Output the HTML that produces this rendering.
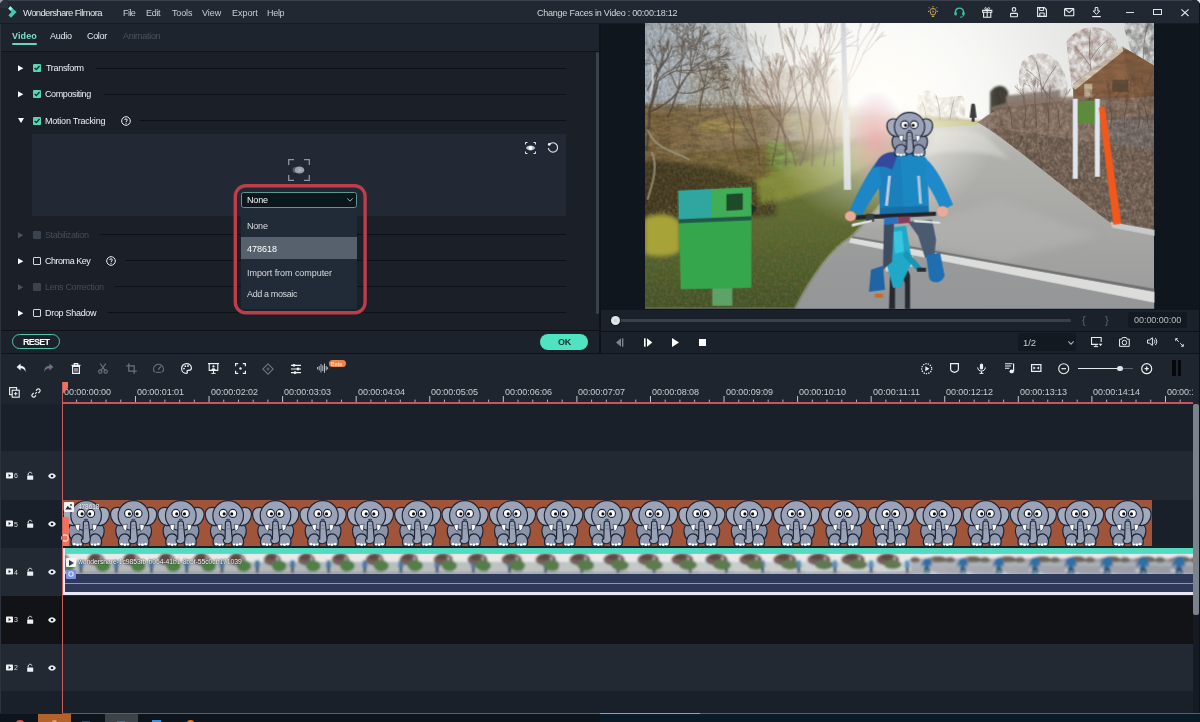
<!DOCTYPE html>
<html><head><meta charset="utf-8"><title>Wondershare Filmora</title>
<style>
html,body{margin:0;padding:0;background:#1b212a;}
body{width:1200px;height:722px;position:relative;overflow:hidden;font-family:"Liberation Sans",sans-serif;font-size:9px;color:#e6e9ee;}
.a{position:absolute;}
.t{position:absolute;white-space:pre;line-height:12px;will-change:transform;}
svg{position:absolute;overflow:visible;}
</style></head><body>
<svg width="0" height="0" style="left:0;top:0"><defs>
<symbol id="ele" viewBox="0 0 47 45" overflow="visible" preserveAspectRatio="none">
 <g stroke="#1e2537" stroke-width="1.15" stroke-linejoin="round">
  <path d="M8 24 C4.6 27 5.2 35 9.4 38.5 L37.6 38.5 C41.8 35 42.4 27 39 24 Z" fill="#8a93a8"/>
  <path d="M11 8 C6.4 5.4 0.8 7.8 0.6 13.4 C0.3 19 5.2 25.8 11.6 24.6 Z" fill="#a3abbd"/>
  <path d="M36 8 C40.6 5.4 46.2 7.8 46.4 13.4 C46.7 19 41.8 25.8 35.4 24.6 Z" fill="#a3abbd"/>
  <path d="M8.8 43.8 C7.2 38 10.2 32.8 14.8 32.8 C19 32.8 21 36.6 20.2 43.8 Z" fill="#929bb0"/>
  <path d="M38.2 43.8 C39.8 38 36.8 32.8 32.2 32.8 C28 32.8 26 36.6 26.8 43.8 Z" fill="#929bb0"/>
  <ellipse cx="23.3" cy="15" rx="15.2" ry="14.6" fill="#99a2b7"/>
  <path d="M12.6 24 L17.2 23.4 L16.2 30.4 C13.8 29.2 12.4 27 12.6 24Z" fill="#ffffff" stroke-width="0.6"/>
  <path d="M34 24 L29.4 23.4 L30.4 30.4 C32.8 29.2 34.2 27 34 24Z" fill="#ffffff" stroke-width="0.6"/>
  <path d="M20.6 22 C20.4 19.6 26 19.6 25.8 22 L27.4 37.8 C28 43.6 18 44 18.6 38.6 C19 37.2 20 37.4 20.2 38 Z" fill="#99a2b7"/>
  <circle cx="18.4" cy="12.9" r="3.9" fill="#ffffff" stroke-width="1.15"/>
  <circle cx="27.9" cy="12.9" r="3.9" fill="#ffffff" stroke-width="1.15"/>
 </g>
 <circle cx="19.3" cy="13.4" r="1.55" fill="#0c0f16"/>
 <circle cx="26.9" cy="13.4" r="1.55" fill="#0c0f16"/>
 <path d="M21.2 19.4 C22 18.2 24.4 18.2 25.2 19.4" fill="none" stroke="#1e2537" stroke-width="0.9"/>
 <path d="M21.8 24.6 H24.8 M21.8 27.8 H25" fill="none" stroke="#737c92" stroke-width="0.8"/>
 <g fill="#ffffff">
  <ellipse cx="11.6" cy="43" rx="1.5" ry="1.2"/><ellipse cx="14.8" cy="43.4" rx="1.5" ry="1.2"/><ellipse cx="17.8" cy="43.2" rx="1.3" ry="1.1"/>
  <ellipse cx="35.4" cy="43" rx="1.5" ry="1.2"/><ellipse cx="32.2" cy="43.4" rx="1.5" ry="1.2"/><ellipse cx="29.2" cy="43.2" rx="1.3" ry="1.1"/>
 </g>
</symbol>
</defs></svg>
<div class="a" style="left:0px;top:0px;width:1200px;height:24px;background:#212832;"></div><div class="a" style="left:0px;top:0px;width:1200px;height:1px;background:#39404b;"></div><div class="a" style="left:0px;top:23px;width:1200px;height:1px;background:#171c23;"></div><svg style="left:8px;top:6px" width="9" height="12" viewBox="0 0 9 12"><path d="M2.2 0.3 L8.6 5.9 L3 11.7 L0.4 9.2 L3.6 5.9 L0.4 2.6 Z" fill="#43c9b0"/><path d="M2.2 0.3 L4.6 2.4 L2.1 4.4 L0.4 2.6Z" fill="#a9f0e2"/></svg><div class="a" style="left:1197px;top:0px;width:3px;height:3px;background:#e8eaec;"></div><div class="a" style="left:1192px;top:0px;width:8px;height:8px;background:#212832;border-radius:0 5px 0 0"></div><div class="a" style="left:0px;top:0px;width:3px;height:3px;background:#9aa0a8;"></div><div class="a" style="left:0px;top:0px;width:8px;height:8px;background:#2a313c;border-radius:5px 0 0 0"></div><span class="t" style="left:23.10px;top:6.60px;font-size:9.5px;color:#e4e7ec;letter-spacing:-0.651px;">Wondershare Filmora</span><span class="t" style="left:123.10px;top:6.60px;font-size:9px;color:#c9cdd4;letter-spacing:-0.554px;">File</span><span class="t" style="left:146.10px;top:6.60px;font-size:9px;color:#c9cdd4;letter-spacing:-0.304px;">Edit</span><span class="t" style="left:172.10px;top:6.60px;font-size:9px;color:#c9cdd4;letter-spacing:-0.143px;">Tools</span><span class="t" style="left:202.10px;top:6.60px;font-size:9px;color:#c9cdd4;letter-spacing:-0.015px;">View</span><span class="t" style="left:231.60px;top:6.60px;font-size:9px;color:#c9cdd4;letter-spacing:-0.036px;">Export</span><span class="t" style="left:267.10px;top:6.60px;font-size:9px;color:#c9cdd4;letter-spacing:-0.304px;">Help</span><span class="t" style="left:536.80px;top:6.60px;font-size:9px;color:#d2d6dc;letter-spacing:-0.233px;">Change Faces in Video : 00:00:18:12</span><svg style="left:927.5px;top:6px" width="10" height="12" viewBox="0 0 10 12"><g stroke="#d8b259" fill="none" stroke-width="1"><path d="M5 2.6 C7.2 2.6 8 4.2 8 5.4 C8 6.8 6.8 7.4 6.6 8.8 H3.4 C3.2 7.4 2 6.8 2 5.4 C2 4.2 2.8 2.6 5 2.6Z"/><path d="M3.8 10.4 H6.2 M5 0 V1.4 M1 1.4 L2 2.4 M9 1.4 L8 2.4 M0 5.4 H1 M9 5.4 H10"/><path d="M5 4.6 V6.6" /></g></svg><svg style="left:954px;top:7px" width="11" height="11" viewBox="0 0 11 11"><path d="M1.4 6.4 V5.2 C1.4 -0.2 9.6 -0.2 9.6 5.2 V6.4" fill="none" stroke="#3fc2a8" stroke-width="1.4"/><rect x="0.4" y="5" width="2.4" height="3.6" rx="1" fill="#3fc2a8"/><rect x="8.2" y="5" width="2.4" height="3.6" rx="1" fill="#3fc2a8"/><path d="M9.4 8.4 C9.4 9.8 8 10.2 6 10.2" fill="none" stroke="#3fc2a8" stroke-width="1"/></svg><svg style="left:981.7px;top:6.6px" width="10.4" height="11" viewBox="0 0 10.4 11"><path d="M0.6 3.4 H9.8 V5.2 H0.6Z M1.6 5.4 V10.2 H8.8 V5.4 M5.2 3.4 V10.2" fill="none" stroke="#e9ecf0" stroke-width="1.1"/><path d="M5.2 3.2 C3 3.2 2 0.6 3.6 0.6 C4.6 0.6 5.2 2 5.2 3.2 C5.2 2 5.8 0.6 6.8 0.6 C8.4 0.6 7.4 3.2 5.2 3.2Z" fill="none" stroke="#e9ecf0" stroke-width="0.9"/></svg><svg style="left:1010.4px;top:6.8px" width="8" height="10.6" viewBox="0 0 8 10.6"><circle cx="4" cy="2.4" r="1.8" fill="none" stroke="#e9ecf0" stroke-width="1.1"/><rect x="0.6" y="6.4" width="6.8" height="3.4" rx="0.6" fill="none" stroke="#e9ecf0" stroke-width="1.1"/></svg><svg style="left:1037px;top:7.2px" width="10" height="10" viewBox="0 0 10 10"><path d="M0.6 0.6 H7.4 L9.4 2.6 V9.4 H0.6Z" fill="none" stroke="#e9ecf0" stroke-width="1.1"/><path d="M2.6 0.8 V3.4 H6.6 V0.8 M2.8 9.2 V6 H7.2 V9.2" fill="none" stroke="#e9ecf0" stroke-width="1"/></svg><svg style="left:1064px;top:8.3px" width="10.4" height="8.4" viewBox="0 0 10.4 8.4"><rect x="0.6" y="0.6" width="9.2" height="7.2" rx="0.6" fill="none" stroke="#e9ecf0" stroke-width="1.1"/><path d="M0.9 1 L5.2 4.6 L9.5 1" fill="none" stroke="#e9ecf0" stroke-width="1.1"/></svg><svg style="left:1092.4px;top:6.8px" width="9" height="10.6" viewBox="0 0 9 10.6"><path d="M3.2 0.5 H5.8 V4 H7.8 L4.5 7.4 L1.2 4 H3.2Z" fill="none" stroke="#e9ecf0" stroke-width="1"/><path d="M0.2 9.6 H8.8" stroke="#e9ecf0" stroke-width="1.2"/></svg><div class="a" style="left:1125.6px;top:12px;width:8.8px;height:1.2px;background:#dfe3e8;"></div><div class="a" style="left:1152.9px;top:8.6px;width:6.8px;height:4.8px;background:transparent;border:1.2px solid #dfe3e8"></div><svg style="left:1180.8px;top:8.8px" width="8" height="7.4" viewBox="0 0 8 7.4"><path d="M0.4 0.4 L7.6 7 M7.6 0.4 L0.4 7" stroke="#dfe3e8" stroke-width="1.1"/></svg>
<div class="a" style="left:0px;top:24px;width:599px;height:28px;background:#1e242e;"></div><div class="a" style="left:0px;top:51px;width:599px;height:1px;background:#12161c;"></div><div class="a" style="left:0px;top:52px;width:599px;height:279px;background:#1a1f28;"></div><div class="a" style="left:599px;top:24px;width:2px;height:329px;background:#0f1319;"></div><span class="t" style="left:12.10px;top:29.60px;font-size:9px;color:#7fdcc8;letter-spacing:0.131px;font-weight:700;">Video</span><div class="a" style="left:12px;top:43px;width:25px;height:2px;background:#6fd2bd;border-radius:1px"></div><span class="t" style="left:49.60px;top:29.60px;font-size:9px;color:#e4e7ec;letter-spacing:-0.246px;">Audio</span><span class="t" style="left:86.60px;top:29.60px;font-size:9px;color:#e4e7ec;letter-spacing:-0.343px;">Color</span><span class="t" style="left:122.60px;top:29.60px;font-size:9px;color:#4a525d;letter-spacing:-0.303px;">Animation</span><svg style="left:17.6px;top:65px" width="6" height="6.4" viewBox="0 0 6 6.4"><path d="M0 0.2 L5.3 3.2 L0 6.2Z" fill="#ffffff"/></svg><svg style="left:33px;top:64px" width="8" height="8" viewBox="0 0 8 8"><rect width="8" height="8" rx="1" fill="#58d5b9"/><path d="M1.6 3.9 L3.4 5.6 L6.5 2" fill="none" stroke="#14312c" stroke-width="1.4"/></svg><span class="t" style="left:45.60px;top:62.00px;font-size:9px;color:#eef0f3;letter-spacing:-0.319px;">Transform</span><div class="a" style="left:96px;top:68px;width:470px;height:1px;background:#0e1217;"></div><svg style="left:17.6px;top:91.4px" width="6" height="6.4" viewBox="0 0 6 6.4"><path d="M0 0.2 L5.3 3.2 L0 6.2Z" fill="#ffffff"/></svg><svg style="left:33px;top:90.4px" width="8" height="8" viewBox="0 0 8 8"><rect width="8" height="8" rx="1" fill="#58d5b9"/><path d="M1.6 3.9 L3.4 5.6 L6.5 2" fill="none" stroke="#14312c" stroke-width="1.4"/></svg><span class="t" style="left:45.20px;top:88.40px;font-size:9px;color:#eef0f3;letter-spacing:-0.385px;">Compositing</span><div class="a" style="left:104px;top:94px;width:462px;height:1px;background:#0e1217;"></div><svg style="left:17.5px;top:118.19999999999999px" width="6" height="5" viewBox="0 0 6 5"><path d="M0 0 L6 0 L3 5Z" fill="#ffffff"/></svg><svg style="left:33px;top:116.6px" width="8" height="8" viewBox="0 0 8 8"><rect width="8" height="8" rx="1" fill="#58d5b9"/><path d="M1.6 3.9 L3.4 5.6 L6.5 2" fill="none" stroke="#14312c" stroke-width="1.4"/></svg><span class="t" style="left:45.20px;top:114.60px;font-size:9px;color:#eef0f3;letter-spacing:-0.222px;">Motion Tracking</span><svg style="left:121px;top:115.5px" width="10" height="10" viewBox="0 0 10 10"><circle cx="5" cy="5" r="4.3" fill="none" stroke="#f0f2f5" stroke-width="1"/><path d="M3.7 4 C3.7 2.4 6.3 2.4 6.3 4 C6.3 5 5 5 5 6" fill="none" stroke="#f0f2f5" stroke-width="1"/><rect x="4.5" y="6.8" width="1" height="1" fill="#f0f2f5"/></svg><div class="a" style="left:140px;top:120px;width:426px;height:1px;background:#0e1217;"></div><div class="a" style="left:32px;top:134px;width:534px;height:82px;background:#222934;"></div><svg style="left:17.6px;top:231.5px" width="6" height="6.4" viewBox="0 0 6 6.4"><path d="M0 0.2 L5.3 3.2 L0 6.2Z" fill="#4a525d"/></svg><div class="a" style="left:33px;top:230.5px;width:8px;height:8px;background:#3b434e;border-radius:1px"></div><span class="t" style="left:45.10px;top:228.50px;font-size:9px;color:#454d58;letter-spacing:-0.387px;">Stabilization</span><div class="a" style="left:100px;top:234px;width:466px;height:1px;background:#0e1217;"></div><svg style="left:17.6px;top:257.7px" width="6" height="6.4" viewBox="0 0 6 6.4"><path d="M0 0.2 L5.3 3.2 L0 6.2Z" fill="#ffffff"/></svg><div class="a" style="left:33px;top:256.7px;width:6px;height:6px;background:transparent;border:1px solid #d3d7dc;border-radius:1px"></div><span class="t" style="left:45.10px;top:254.70px;font-size:9px;color:#eef0f3;letter-spacing:-0.473px;">Chroma Key</span><svg style="left:105.5px;top:255.7px" width="10" height="10" viewBox="0 0 10 10"><circle cx="5" cy="5" r="4.3" fill="none" stroke="#f0f2f5" stroke-width="1"/><path d="M3.7 4 C3.7 2.4 6.3 2.4 6.3 4 C6.3 5 5 5 5 6" fill="none" stroke="#f0f2f5" stroke-width="1"/><rect x="4.5" y="6.8" width="1" height="1" fill="#f0f2f5"/></svg><div class="a" style="left:125px;top:260px;width:441px;height:1px;background:#0e1217;"></div><svg style="left:17.6px;top:283.9px" width="6" height="6.4" viewBox="0 0 6 6.4"><path d="M0 0.2 L5.3 3.2 L0 6.2Z" fill="#4a525d"/></svg><div class="a" style="left:33px;top:282.9px;width:8px;height:8px;background:#3b434e;border-radius:1px"></div><span class="t" style="left:45.10px;top:280.90px;font-size:9px;color:#454d58;letter-spacing:-0.316px;">Lens Correction</span><div class="a" style="left:115px;top:286px;width:451px;height:1px;background:#0e1217;"></div><svg style="left:17.6px;top:310px" width="6" height="6.4" viewBox="0 0 6 6.4"><path d="M0 0.2 L5.3 3.2 L0 6.2Z" fill="#ffffff"/></svg><div class="a" style="left:33px;top:309px;width:6px;height:6px;background:transparent;border:1px solid #d3d7dc;border-radius:1px"></div><span class="t" style="left:45.10px;top:307.00px;font-size:9px;color:#eef0f3;letter-spacing:-0.295px;">Drop Shadow</span><div class="a" style="left:108px;top:312px;width:458px;height:1px;background:#0e1217;"></div><div class="a" style="left:596px;top:52px;width:3px;height:262px;background:#3a424d;border-radius:1.5px"></div><div class="a" style="left:0px;top:330px;width:599px;height:1px;background:#0f1319;"></div><div class="a" style="left:0px;top:331px;width:599px;height:22px;background:#1c222b;"></div><div class="a" style="left:12px;top:333.5px;width:46px;height:13px;background:transparent;border:1.8px solid #50c6ab;border-radius:9px"></div><span class="t" style="left:23.10px;top:335.60px;font-size:9px;color:#ffffff;letter-spacing:-0.743px;font-weight:700;">RESET</span><div class="a" style="left:540px;top:333.5px;width:48px;height:16px;background:#50e3c2;border-radius:8px"></div><span class="t" style="left:557.60px;top:335.60px;font-size:9px;color:#10302a;letter-spacing:-0.350px;font-weight:700;">OK</span><svg style="left:288px;top:159px" width="22" height="22" viewBox="0 0 22 22"><path d="M0.7 6 V0.7 H6 M16 0.7 H21.3 V6 M21.3 16 V21.3 H16 M6 21.3 H0.7 V16" fill="none" stroke="#8b949e" stroke-width="1.3"/><ellipse cx="9" cy="11" rx="4.5" ry="3.2" fill="#555d67"/><ellipse cx="11.5" cy="11" rx="4.8" ry="3.6" fill="#9aa1aa"/><circle cx="11.8" cy="11" r="1.6" fill="#aeb4bc"/></svg><svg style="left:525px;top:142px" width="11" height="12" viewBox="0 0 11 12"><path d="M0.5 2.5 V0.5 H2.5 M8.5 0.5 H10.5 V2.5 M10.5 9.5 V11.5 H8.5 M2.5 11.5 H0.5 V9.5" fill="none" stroke="#e8ebef" stroke-width="1"/><path d="M0.8 6 C3 2.8 8 2.8 10.2 6 C8 9.2 3 9.2 0.8 6Z" fill="#bcc1c9"/><circle cx="5.5" cy="6" r="1.9" fill="#ffffff"/></svg><svg style="left:547px;top:142px" width="12" height="12" viewBox="0 0 12 12"><path d="M2.2 2.6 A4.7 4.7 0 1 1 1.3 6.2" fill="none" stroke="#dfe3e8" stroke-width="1.2"/><circle cx="2.2" cy="2.4" r="1.3" fill="#f4f6f8"/></svg><div class="a" style="left:241.3px;top:191.5px;width:113.5px;height:14.5px;background:#0c161d;border:1px solid #5c9792;border-radius:2.5px"></div><span class="t" style="left:246.90px;top:194.20px;font-size:9px;color:#f2f4f6;letter-spacing:-0.179px;">None</span><svg style="left:347px;top:198px" width="6" height="4" viewBox="0 0 6 4"><path d="M0.3 0.4 L3 3.2 L5.7 0.4" fill="none" stroke="#bcc2ca" stroke-width="0.9"/></svg><div class="a" style="left:241.3px;top:208px;width:115.5px;height:100.5px;background:#212b37;"></div><div class="a" style="left:241.3px;top:237px;width:115.5px;height:21.5px;background:#56616d;"></div><span class="t" style="left:247.00px;top:220.20px;font-size:9px;color:#d5d9df;letter-spacing:-0.204px;">None</span><span class="t" style="left:247.00px;top:242.50px;font-size:9px;color:#ffffff;letter-spacing:-0.024px;">478618</span><span class="t" style="left:247.00px;top:266.60px;font-size:9px;color:#d5d9df;letter-spacing:-0.052px;">Import from computer</span><span class="t" style="left:247.00px;top:288.40px;font-size:9px;color:#d5d9df;letter-spacing:-0.369px;">Add a mosaic</span><svg style="left:0;top:0" width="600" height="330"><rect x="235.3" y="185.8" width="129.8" height="127" rx="10.5" fill="none" stroke="#bd3d4b" stroke-width="3.4"/></svg>
<div class="a" style="left:601px;top:24px;width:599px;height:286px;background:#10161e;"></div><div class="a" style="left:601px;top:309.5px;width:599px;height:43.5px;background:#1b212b;"></div><div class="a" style="left:601px;top:330.5px;width:599px;height:1px;background:#0f1319;"></div>
<svg style="left:645.4px;top:23.3px" width="509" height="285.4" viewBox="645.4 23.3 508.2 285.4" preserveAspectRatio="none">
<defs>
 <clipPath id="vclip"><rect x="645.4" y="23.3" width="508.2" height="285.4"/></clipPath>
 <radialGradient id="sun" cx="880" cy="112" r="260" gradientUnits="userSpaceOnUse">
  <stop offset="0" stop-color="#ffffff"/><stop offset="0.45" stop-color="#f6f6f3"/><stop offset="1" stop-color="#dcdedd"/>
 </radialGradient>
 <linearGradient id="skyL" x1="645" y1="0" x2="780" y2="0" gradientUnits="userSpaceOnUse">
  <stop offset="0" stop-color="#9db2cc" stop-opacity="0.85"/><stop offset="1" stop-color="#c5ced8" stop-opacity="0"/>
 </linearGradient>
 <linearGradient id="pathG" x1="0" y1="120" x2="0" y2="309" gradientUnits="userSpaceOnUse">
  <stop offset="0" stop-color="#c9c8c2"/><stop offset="0.2" stop-color="#b0b0ac"/><stop offset="0.6" stop-color="#a6a6a4"/><stop offset="1" stop-color="#9a9b9b"/>
 </linearGradient>
 <linearGradient id="grassG" x1="0" y1="150" x2="0" y2="309" gradientUnits="userSpaceOnUse">
  <stop offset="0" stop-color="#6e7c39"/><stop offset="0.5" stop-color="#586a31"/><stop offset="1" stop-color="#405228"/>
 </linearGradient>
 <radialGradient id="flare" cx="876" cy="140" r="50" gradientUnits="userSpaceOnUse" gradientTransform="translate(876 140) scale(0.6 1) translate(-876 -140)">
  <stop offset="0" stop-color="#f0a0a8" stop-opacity="0.7"/><stop offset="0.5" stop-color="#e0a0a0" stop-opacity="0.4"/><stop offset="1" stop-color="#d0a0c0" stop-opacity="0"/>
 </radialGradient>
 <radialGradient id="glow" cx="880" cy="112" r="120" gradientUnits="userSpaceOnUse">
  <stop offset="0" stop-color="#ffffff" stop-opacity="0.95"/><stop offset="0.35" stop-color="#fffdf4" stop-opacity="0.6"/><stop offset="1" stop-color="#ffffff" stop-opacity="0"/>
 </radialGradient>
 <filter id="b1" x="-10%" y="-10%" width="120%" height="120%"><feGaussianBlur stdDeviation="1"/></filter>
 <filter id="b2" x="-10%" y="-10%" width="120%" height="120%"><feGaussianBlur stdDeviation="2.2"/></filter>
 <filter id="b4" x="-20%" y="-20%" width="140%" height="140%"><feGaussianBlur stdDeviation="4.5"/></filter>
 <filter id="tex" x="0" y="0" width="100%" height="100%">
  <feTurbulence type="fractalNoise" baseFrequency="0.16 0.13" numOctaves="3" seed="7" result="n"/>
  <feColorMatrix in="n" type="matrix" values="0 0 0 0 0  0 0 0 0 0  0 0 0 0 0  1.5 0 0 0 -0.42" result="a"/>
  <feComposite in="SourceGraphic" in2="a" operator="in"/>
 </filter>
 <filter id="tex2" x="0" y="0" width="100%" height="100%">
  <feTurbulence type="fractalNoise" baseFrequency="0.35 0.3" numOctaves="2" seed="3" result="n"/>
  <feColorMatrix in="n" type="matrix" values="0 0 0 0 0  0 0 0 0 0  0 0 0 0 0  2.0 0 0 0 -0.7" result="a"/>
  <feComposite in="SourceGraphic" in2="a" operator="in"/>
 </filter>
 <filter id="tex3" x="0" y="0" width="100%" height="100%">
  <feTurbulence type="fractalNoise" baseFrequency="0.07 0.2" numOctaves="3" seed="11" result="n"/>
  <feColorMatrix in="n" type="matrix" values="0 0 0 0 0  0 0 0 0 0  0 0 0 0 0  1.7 0 0 0 -0.5" result="a"/>
  <feComposite in="SourceGraphic" in2="a" operator="in"/>
 </filter>
 <linearGradient id="fadeR" x1="645" y1="0" x2="880" y2="0" gradientUnits="userSpaceOnUse">
  <stop offset="0" stop-color="#fff" stop-opacity="1"/><stop offset="0.55" stop-color="#fff" stop-opacity="0.8"/><stop offset="1" stop-color="#fff" stop-opacity="0"/>
 </linearGradient>
 <mask id="mL" maskUnits="userSpaceOnUse" x="645" y="23" width="245" height="200"><rect x="645" y="23" width="245" height="200" fill="url(#fadeR)"/></mask>
</defs>
<g clip-path="url(#vclip)">
 <!-- sky -->
 <rect x="645" y="23" width="510" height="286" fill="url(#sun)"/>
 <rect x="645" y="23" width="140" height="100" fill="url(#skyL)"/>
 <!-- far hill / horizon -->
 <path d="M850 118 C890 112 940 116 990 122 L990 135 L850 135Z" fill="#b9b27a" filter="url(#b1)"/>
 <!-- right distant trees & buildings -->
 <g filter="url(#b1)">
  <path d="M990 92 C996 84 1004 84 1008 92 L1010 120 L990 122Z" fill="#3c3e34"/>
  <path d="M1006 96 L1040 92 L1060 90 L1060 122 L1006 122Z" fill="#8a8078"/>
 </g>
 <g filter="url(#tex)" opacity="0.8">
  <path d="M1022 62 C1034 48 1056 52 1062 70 C1070 80 1068 100 1062 108 L1026 108 C1018 90 1016 74 1022 62Z" fill="#9a8a84"/>
  <path d="M1066 42 C1080 22 1106 24 1116 40 L1122 72 L1072 92Z" fill="#7d5a52"/>
  <path d="M1122 23 L1154 23 L1154 74 L1134 62Z" fill="#3f3a3a"/>
  <path d="M918 96 C924 88 934 90 938 98 L962 96 C966 100 966 112 964 120 L916 120Z" fill="#a89880"/>
 </g>
 <g fill="none" stroke="#6a5850" stroke-width="0.8" opacity="0.7">
  <path d="M1042 106 C1042 90 1040 76 1036 62 M1042 90 C1046 80 1052 72 1056 66 M1040 82 C1034 76 1030 72 1026 70"/>
  <path d="M1092 84 C1090 64 1088 48 1090 30 M1090 60 C1096 50 1102 44 1108 40 M1090 66 C1082 56 1078 50 1074 46"/>
  <path d="M940 120 C940 110 938 102 936 96 M950 120 C951 112 952 106 954 100 M926 120 C926 112 924 106 922 102"/>
  <path d="M1144 70 C1142 50 1144 36 1148 24"/>
 </g>
 <!-- house -->
 <path d="M1073 84 L1122 47 L1154 66 L1154 130 L1073 130Z" fill="#8d6547"/>
 <path d="M1071 86 L1122 46 L1126 49 L1075 90Z" fill="#d9cdbf"/>
 <path d="M1122 47 L1154 66 L1154 100 L1128 80Z" fill="#7d5c42" opacity="0.8"/>
 <rect x="1084" y="84" width="8" height="14" fill="#d0c6a8" opacity="0.8"/>
 <rect x="1112" y="80" width="16" height="12" fill="#4e4434" opacity="0.7"/>
 <!-- right hedge & leaf ground -->
 <path d="M974 125 L996 110 L1154 96 L1154 240 L1100 232 C1070 200 1030 160 974 125Z" fill="#84705f"/>
 <path d="M990 108 C1030 94 1070 96 1154 100 L1154 150 L1020 140 Z" fill="#8a7468" opacity="0.85" filter="url(#b1)"/>
 <path d="M1110 118 L1154 115 L1154 150 L1110 150Z" fill="#6f6a68" opacity="0.9"/>
 <path d="M990 128 L1154 150 L1154 240 L1100 232 C1070 200 1030 160 990 128Z" fill="#6f5e52"/>
 <g filter="url(#tex2)" opacity="0.55"><path d="M974 125 L996 110 L1154 96 L1154 240 L1100 232 C1070 200 1030 160 974 125Z" fill="#b8a490"/></g>
 <g filter="url(#tex)" opacity="0.5"><path d="M974 125 L996 108 L1154 92 L1154 240 L1100 232 C1070 200 1030 160 974 125Z" fill="#43362e"/></g>
 <g filter="url(#tex3)" opacity="0.35"><path d="M1073 84 L1122 47 L1154 66 L1154 120 L1073 120Z" fill="#4a3420"/></g>
 <!-- path -->
 <path d="M930 124 L978 123 C1000 134 1060 186 1110 223 L1154 232 L1154 309 L795 309 C810 280 830 250 850 238 C880 210 925 150 930 124Z" fill="url(#pathG)"/>
 <!-- path light streaks -->
 <path d="M935 130 C960 128 975 130 985 136 L1010 160 C980 150 950 150 925 156Z" fill="#e4e3dc" opacity="0.45" filter="url(#b2)"/>
 <path d="M880 236 L1000 200 L1100 236 L1000 262Z" fill="#b4b4b2" opacity="0.6" filter="url(#b4)"/>
 <!-- grass -->
 <path d="M640 160 L860 134 L932 122 C925 150 880 210 850 238 C830 250 810 280 795 309 L640 309Z" fill="url(#grassG)" filter="url(#b1)"/><path d="M800 112 L900 112 L932 122 L860 140 L800 150Z" fill="#cdbb8e" opacity="0.8" filter="url(#b4)"/>
 <path d="M930 122 L975 121 L978 125 L932 128Z" fill="#c4c07a"/>
 <!-- tree mass left -->
 <g mask="url(#mL)">
  <g filter="url(#b2)">
   <path d="M640 104 C700 100 760 106 800 104 C830 102 860 106 900 112 L900 160 C860 176 800 194 770 204 L640 218Z" fill="#7b6540"/>
   <path d="M640 160 C700 162 744 172 776 190 L776 216 L640 222Z" fill="#3d3522"/>
   <path d="M768 142 C780 138 796 142 800 172 L770 174Z" fill="#7da046"/>
   <path d="M700 122 C720 114 740 118 746 130 C730 138 710 138 700 130Z" fill="#b09838" opacity="0.45"/>
   <path d="M780 118 C800 112 812 120 812 132 C800 138 786 134 780 126Z" fill="#a8903c" opacity="0.4"/>
  </g>
  <!-- crown haze -->
  <g filter="url(#b4)">
   <path d="M640 18 L735 18 C750 50 752 80 745 106 L640 108Z" fill="#8c8f90" opacity="0.5"/>
   <path d="M690 70 C720 56 750 66 760 106 L690 108Z" fill="#7d6d48" opacity="0.4"/><path d="M750 80 C770 64 820 66 845 80 L848 112 L750 112Z" fill="#9a7a5a" opacity="0.5"/>
   <path d="M740 18 L900 18 L900 106 L770 106 C775 80 765 50 740 18Z" fill="#d9d2c0" opacity="0.25"/>
  </g>
  <g filter="url(#tex)" opacity="0.32"><path d="M645 23 L745 23 C760 50 765 70 850 70 L850 108 L645 108Z" fill="#4d4226"/></g>
  <g filter="url(#tex2)" opacity="0.45"><path d="M645 23 L820 23 L820 108 L645 108Z" fill="#dfe6ee"/></g>
  <g filter="url(#tex3)" opacity="0.7"><path d="M645 104 L900 108 L900 160 C850 184 800 198 760 207 L645 218Z" fill="#453a20"/></g>
  <g filter="url(#tex2)" opacity="0.2"><path d="M645 104 L900 108 L900 160 C850 184 800 198 760 207 L645 218Z" fill="#c4a060"/></g>
 </g>
 <g filter="url(#tex2)" opacity="0.55"><path d="M645 216 L850 140 L930 124 C925 150 880 210 850 238 C830 250 810 280 795 309 L645 309Z" fill="#7c6a3c"/></g>
 <g filter="url(#b2)">
  <path d="M645 218 C660 212 676 214 680 224 L680 252 C668 258 654 258 645 254Z" fill="#a7a338"/>
  <path d="M756 180 C790 166 830 154 862 144 L880 154 C850 184 800 200 760 204Z" fill="#8c9a3e" opacity="0.75"/>
 </g>
 <!-- branch strokes -->
 <g fill="none" stroke="#4b3e34" stroke-linecap="round" opacity="0.78"><path stroke-width="0.45" d="M682.4 59.5Q685.4 55.1 685.7 51.7M685.7 51.7Q688.4 50.0 689.7 47.3M689.7 47.3Q690.2 45.4 689.7 43.1M689.7 47.3Q690.5 45.4 692.1 44.2M685.7 51.7Q686.1 47.7 687.8 45.8M687.8 45.8Q689.9 43.4 690.7 41.8M687.8 45.8Q689.4 43.6 691.4 42.5M682.4 59.5Q684.9 52.2 684.5 48.8M684.5 48.8Q684.2 44.4 683.2 42.0M683.2 42.0Q681.8 39.5 681.3 37.0M683.2 42.0Q682.2 38.7 681.1 37.3M684.5 48.8Q684.2 44.6 683.9 42.3M683.9 42.3Q682.9 40.0 681.8 38.5M683.9 42.3Q683.5 40.4 683.5 38.3M683.9 42.3Q684.7 39.7 686.4 38.4M682.4 59.5Q683.9 54.6 688.6 50.5M688.6 50.5Q688.6 46.9 688.9 43.7M688.9 43.7Q689.8 41.6 689.6 39.2M688.9 43.7Q688.4 41.3 689.4 39.3M688.6 50.5Q692.2 49.6 695.6 47.2M695.6 47.2Q697.2 46.4 700.1 43.6M695.6 47.2Q698.2 47.6 701.1 47.6M686.6 64.8Q688.1 62.3 691.1 56.9M691.1 56.9Q691.5 54.6 690.6 51.4M690.6 51.4Q689.7 50.3 688.0 49.6M690.6 51.4Q690.6 49.4 690.4 48.0M691.1 56.9Q692.5 54.3 692.9 51.5M692.9 51.5Q695.3 50.3 696.5 49.0M692.9 51.5Q694.8 49.6 695.5 48.1M691.1 56.9Q694.9 57.0 696.9 55.8M696.9 55.8Q698.0 55.0 700.3 53.0M696.9 55.8Q698.8 54.8 700.3 54.1M696.9 55.8Q698.8 54.7 700.7 54.0M686.6 64.8Q689.3 63.1 695.0 60.2M695.0 60.2Q697.6 58.2 701.2 57.1M701.2 57.1Q703.1 56.9 705.1 55.5M701.2 57.1Q703.6 56.5 706.2 56.0M695.0 60.2Q698.6 58.6 700.9 56.1M700.9 56.1Q703.1 56.2 705.3 55.2M700.9 56.1Q703.2 53.4 704.5 52.2M686.6 64.8Q693.7 64.8 697.1 64.0M697.1 64.0Q699.9 62.3 702.6 58.7M702.6 58.7Q702.3 55.6 702.9 53.4M702.6 58.7Q704.4 57.2 707.6 56.7M697.1 64.0Q701.2 66.0 704.2 66.0M704.2 66.0Q706.9 67.6 708.6 68.0M704.2 66.0Q706.4 65.6 708.7 66.5M704.2 66.0Q706.0 66.5 708.8 67.6M697.1 64.0Q701.5 64.9 704.6 63.4M704.6 63.4Q706.8 64.7 708.5 65.7M704.6 63.4Q706.0 62.4 708.9 62.1M683.9 58.3Q684.7 54.4 682.5 49.6M682.5 49.6Q681.9 46.3 679.1 44.1M679.1 44.1Q678.1 42.1 676.3 40.9M679.1 44.1Q678.7 42.4 678.9 39.3M679.1 44.1Q677.6 42.9 676.0 40.7M682.5 49.6Q683.3 46.3 683.3 44.0M683.3 44.0Q684.4 42.9 685.3 41.2M683.3 44.0Q684.1 42.0 685.7 41.4M682.5 49.6Q682.7 46.4 683.0 43.5M683.0 43.5Q684.4 41.5 684.9 39.8M683.0 43.5Q685.0 41.5 686.1 40.5M683.9 58.3Q685.8 52.3 690.1 48.7M690.1 48.7Q691.7 46.7 695.8 45.1M695.8 45.1Q698.5 44.2 700.5 43.5M695.8 45.1Q698.8 43.1 700.5 42.7M690.1 48.7Q692.0 44.1 694.0 41.9M694.0 41.9Q694.6 40.6 696.6 37.7M694.0 41.9Q694.3 39.1 694.0 36.4M692.8 70.6Q698.3 72.5 703.8 70.5M703.8 70.5Q706.7 70.6 710.4 69.4M710.4 69.4Q713.1 68.0 714.3 66.8M710.4 69.4Q713.8 68.7 715.6 68.2M703.8 70.5Q706.5 69.5 709.9 66.1M709.9 66.1Q710.9 63.6 710.9 61.4M709.9 66.1Q712.4 65.1 715.0 64.7M692.8 70.6Q698.9 71.3 703.6 69.6M703.6 69.6Q707.6 70.2 711.1 68.8M711.1 68.8Q713.9 68.3 716.0 68.1M711.1 68.8Q713.4 67.4 716.3 66.7M711.1 68.8Q712.4 67.6 715.1 65.9M703.6 69.6Q706.0 70.5 710.3 69.6M710.3 69.6Q712.3 69.5 714.3 70.2M710.3 69.6Q712.4 70.0 714.7 71.3M703.6 69.6Q707.8 69.3 711.0 67.7M711.0 67.7Q713.1 66.8 716.1 64.7M711.0 67.7Q713.8 65.7 715.9 64.5M693.5 72.6Q700.5 75.0 704.9 75.4M704.9 75.4Q709.1 78.1 711.0 79.0M711.0 79.0Q713.2 78.6 716.0 77.0M711.0 79.0Q712.5 79.5 715.4 78.8M704.9 75.4Q708.4 77.1 713.3 78.9M713.3 78.9Q716.7 78.9 719.4 77.9M713.3 78.9Q717.0 80.2 718.8 83.5M693.5 72.6Q700.1 71.4 705.4 69.3M705.4 69.3Q708.4 65.6 711.0 64.3M711.0 64.3Q713.3 62.5 716.3 62.2M711.0 64.3Q711.6 61.4 713.3 60.0M711.0 64.3Q713.4 63.8 714.8 62.2M705.4 69.3Q708.0 69.5 712.8 69.1M712.8 69.1Q715.0 70.3 717.8 69.7M712.8 69.1Q714.9 68.1 717.2 68.1M693.5 72.6Q698.2 74.9 700.4 80.1M700.4 80.1Q704.1 81.2 707.2 82.1M707.2 82.1Q709.6 84.4 711.1 85.4M707.2 82.1Q709.0 84.3 711.4 85.5M700.4 80.1Q699.2 83.0 699.3 87.7M699.3 87.7Q699.2 89.9 697.9 91.9M699.3 87.7Q698.6 90.3 696.8 92.7M662.7 58.0Q663.4 53.9 666.1 50.6M666.1 50.6Q665.8 48.4 667.4 44.6M667.4 44.6Q669.0 42.9 670.3 40.9M667.4 44.6Q667.9 42.4 667.4 40.9M666.1 50.6Q668.1 47.7 668.5 45.5M668.5 45.5Q667.7 43.4 667.8 42.0M668.5 45.5Q669.0 43.6 669.3 41.2M662.7 58.0Q664.0 54.6 666.4 51.4M666.4 51.4Q667.3 48.7 666.7 45.6M666.7 45.6Q667.2 43.4 666.5 41.3M666.7 45.6Q666.7 43.7 667.0 42.0M666.4 51.4Q666.4 49.5 667.7 47.1M667.7 47.1Q667.8 45.2 667.0 43.7M667.7 47.1Q667.6 46.0 666.9 44.2M666.7 60.2Q670.1 57.5 671.9 56.6M671.9 56.6Q672.2 55.2 672.9 53.1M672.9 53.1Q673.7 52.1 674.0 50.5M672.9 53.1Q672.8 52.1 673.0 50.5M671.9 56.6Q674.8 56.4 676.6 55.1M676.6 55.1Q678.5 54.4 680.4 54.7M676.6 55.1Q677.6 54.9 679.4 54.7M671.9 56.6Q673.5 55.2 674.1 53.3M674.1 53.3Q674.0 51.9 674.6 51.0M674.1 53.3Q675.2 51.5 676.1 50.9M666.7 60.2Q667.1 56.4 670.0 52.5M670.0 52.5Q668.9 50.3 667.8 47.5M667.8 47.5Q667.4 45.7 667.5 43.3M667.8 47.5Q668.5 45.8 668.7 43.8M667.8 47.5Q666.7 46.1 664.9 45.5M670.0 52.5Q671.8 49.9 671.6 47.2M671.6 47.2Q671.1 44.7 669.9 43.5M671.6 47.2Q671.9 44.6 672.6 43.4M663.4 61.7Q664.4 58.6 664.1 55.1M664.1 55.1Q663.8 53.4 664.5 51.0M664.5 51.0Q664.4 49.6 664.8 48.3M664.5 51.0Q664.4 49.2 664.7 48.3M664.1 55.1Q663.9 53.5 664.7 51.1M664.7 51.1Q664.7 49.6 664.5 48.0M664.7 51.1Q665.8 50.4 667.1 49.4M663.4 61.7Q662.8 57.9 663.6 55.6M663.6 55.6Q663.5 54.0 662.0 51.2M662.0 51.2Q661.0 50.1 660.3 48.9M662.0 51.2Q660.3 49.2 659.8 48.4M663.6 55.6Q663.4 53.8 663.3 50.9M663.3 50.9Q663.5 49.5 663.9 48.1M663.3 50.9Q664.0 49.4 665.0 48.0M654.9 60.5Q653.1 56.2 652.2 54.2M652.2 54.2Q650.7 51.9 649.6 50.9M649.6 50.9Q648.2 50.9 646.8 50.3M649.6 50.9Q649.5 49.9 649.4 48.4M652.2 54.2Q651.8 51.7 652.5 49.2M652.5 49.2Q653.4 47.9 654.4 46.6M652.5 49.2Q653.3 47.8 654.0 45.7M652.2 54.2Q651.1 53.2 650.1 50.9M650.1 50.9Q648.9 49.8 647.6 49.5M650.1 50.9Q649.8 49.8 650.1 48.3M650.1 50.9Q650.1 49.3 649.9 48.0M654.9 60.5Q653.2 57.8 652.5 54.8M652.5 54.8Q650.3 54.3 648.9 53.2M648.9 53.2Q647.4 52.2 646.3 52.0M648.9 53.2Q648.1 51.9 647.4 51.2M652.5 54.8Q651.6 53.1 650.5 50.9M650.5 50.9Q650.1 49.2 649.2 48.6M650.5 50.9Q649.6 49.6 647.8 49.2M654.9 60.5Q656.2 56.8 658.0 53.2M658.0 53.2Q655.5 50.7 655.2 47.9M655.2 47.9Q653.0 47.1 650.7 46.3M655.2 47.9Q653.2 46.8 652.2 44.6M658.0 53.2Q660.1 51.9 663.0 49.7M663.0 49.7Q663.5 47.9 665.0 46.6M663.0 49.7Q664.4 48.9 666.8 49.0M658.0 53.2Q661.0 50.4 662.4 49.4M662.4 49.4Q662.8 47.7 664.5 45.9M662.4 49.4Q664.2 47.9 665.2 46.5M708.3 83.0Q710.7 80.0 714.1 74.2M714.1 74.2Q716.3 71.5 718.3 67.9M718.3 67.9Q720.8 65.8 722.4 64.7M722.4 64.7Q724.3 64.6 726.2 64.4M722.4 64.7Q722.5 62.6 723.6 61.6M718.3 67.9Q718.1 65.9 718.8 62.7M718.8 62.7Q718.9 60.6 719.5 59.1M718.8 62.7Q718.2 61.7 717.7 59.4M714.1 74.2Q718.7 72.4 720.9 70.2M720.9 70.2Q722.4 69.0 724.9 67.2M724.9 67.2Q725.2 65.3 726.4 63.9M724.9 67.2Q726.9 66.0 727.8 66.0M724.9 67.2Q725.7 65.5 726.9 64.5M720.9 70.2Q723.0 68.8 726.2 68.9M726.2 68.9Q726.8 67.1 728.2 65.8M726.2 68.9Q727.2 68.0 729.0 66.3M720.9 70.2Q724.2 71.8 726.7 72.2M726.7 72.2Q728.1 71.8 731.1 71.3M726.7 72.2Q728.4 73.5 730.8 73.3M714.1 74.2Q718.2 72.0 720.6 71.1M720.6 71.1Q723.9 69.6 725.4 69.2M725.4 69.2Q726.7 67.0 727.4 65.9M725.4 69.2Q726.4 68.1 728.5 67.0M720.6 71.1Q721.5 70.0 724.1 67.4M724.1 67.4Q724.3 65.4 724.0 63.6M724.1 67.4Q725.3 65.5 725.8 63.7M708.3 83.0Q712.3 83.9 717.3 82.0M717.3 82.0Q719.9 81.2 722.0 79.2M722.0 79.2Q724.1 79.6 725.9 79.3M725.9 79.3Q726.8 79.8 728.0 80.7M725.9 79.3Q726.7 80.0 727.8 81.0M722.0 79.2Q723.6 78.1 725.2 78.1M725.2 78.1Q726.0 77.6 727.2 77.5M725.2 78.1Q726.2 78.1 727.4 77.5M717.3 82.0Q719.8 80.9 723.4 80.3M723.4 80.3Q725.8 80.1 727.8 79.7M727.8 79.7Q729.4 79.0 730.5 78.4M727.8 79.7Q729.7 79.8 730.8 80.9M723.4 80.3Q725.7 80.2 727.2 79.7M727.2 79.7Q728.8 79.1 730.0 78.7M727.2 79.7Q728.5 79.9 729.8 80.3M723.4 80.3Q725.4 80.5 727.4 80.8M727.4 80.8Q728.9 80.1 729.8 80.2M727.4 80.8Q728.5 81.4 729.4 82.1M708.3 83.0Q709.8 81.1 713.6 77.2M713.6 77.2Q716.1 75.6 717.4 74.0M717.4 74.0Q718.2 73.0 719.3 71.1M719.3 71.1Q719.4 69.6 719.2 68.8M719.3 71.1Q720.4 70.8 721.3 70.3M717.4 74.0Q718.4 74.3 720.3 74.0M720.3 74.0Q721.2 74.2 722.3 73.8M720.3 74.0Q721.3 74.7 722.0 75.2M720.3 74.0Q721.1 74.1 722.5 73.7M713.6 77.2Q715.1 75.1 715.8 72.6M715.8 72.6Q716.6 71.4 718.3 70.6M718.3 70.6Q719.0 69.6 720.0 69.0M718.3 70.6Q719.1 69.8 719.4 68.6M715.8 72.6Q715.5 71.4 715.6 69.1M715.6 69.1Q715.1 68.5 714.2 67.6M715.6 69.1Q716.0 67.8 715.9 66.9M709.3 87.2Q710.3 83.9 713.7 79.7M713.7 79.7Q712.7 76.3 712.9 73.5M712.9 73.5Q713.6 71.1 713.8 69.5M713.8 69.5Q713.3 67.9 713.6 66.8M713.8 69.5Q714.5 68.5 716.2 67.8M712.9 73.5Q712.6 71.1 713.4 69.0M713.4 69.0Q713.1 67.9 712.4 66.6M713.4 69.0Q713.9 67.8 713.9 65.7M712.9 73.5Q711.3 71.5 711.0 69.6M711.0 69.6Q710.4 67.9 708.7 67.1M711.0 69.6Q711.3 68.2 711.6 66.5M713.7 79.7Q716.5 78.1 718.1 76.4M718.1 76.4Q718.5 75.0 720.1 73.1M720.1 73.1Q720.1 71.9 720.2 70.7M720.1 73.1Q721.6 72.8 722.6 72.2M718.1 76.4Q719.2 75.2 719.8 73.7M719.8 73.7Q720.4 72.7 720.9 71.9M719.8 73.7Q719.8 72.4 720.1 71.6M709.3 87.2Q714.3 87.7 717.0 90.0M717.0 90.0Q719.0 88.3 721.2 87.3M721.2 87.3Q722.1 86.8 723.7 86.1M721.2 87.3Q721.5 86.0 723.0 84.9M723.0 84.9Q724.0 83.5 724.4 83.0M723.0 84.9Q723.8 85.1 725.2 84.7M721.2 87.3Q722.4 86.0 724.4 85.3M724.4 85.3Q724.8 83.8 725.6 82.7M724.4 85.3Q725.5 84.7 727.3 84.5M717.0 90.0Q719.1 89.6 722.0 89.8M722.0 89.8Q723.1 88.9 725.6 88.4M725.6 88.4Q726.8 87.1 727.5 86.6M725.6 88.4Q727.0 87.5 727.9 87.4M722.0 89.8Q723.2 91.1 724.3 91.7M717.0 90.0Q719.4 89.0 722.8 88.9M722.8 88.9Q724.1 88.0 726.4 87.9M726.4 87.9Q728.0 87.8 728.9 86.6M726.4 87.9Q727.7 87.3 728.2 86.6M726.4 87.9Q727.6 88.7 729.1 88.8M722.8 88.9Q725.7 88.4 727.3 87.9M727.3 87.9Q728.4 87.5 730.2 87.2M727.3 87.9Q729.5 88.2 730.6 87.9M691.8 49.6Q693.6 45.6 693.3 37.7M693.3 37.7Q691.9 33.4 693.6 28.3M693.6 28.3Q692.6 24.9 689.5 23.2M689.5 23.2Q688.9 20.9 687.3 19.8M689.5 23.2Q688.7 21.8 688.3 19.6M693.6 28.3Q694.8 24.8 697.1 22.1M697.1 22.1Q699.6 21.1 701.3 19.9M697.1 22.1Q699.4 21.6 701.1 20.3M697.1 22.1Q698.9 21.3 701.4 20.0M693.6 28.3Q695.2 24.4 696.1 22.4M696.1 22.4Q697.2 20.3 698.5 19.0M696.1 22.4Q697.9 20.7 699.5 18.7M693.3 37.7Q694.1 33.7 692.9 28.5M692.9 28.5Q694.7 26.8 694.5 23.1M694.5 23.1Q695.9 22.2 697.4 19.7M694.5 23.1Q695.3 22.0 696.3 20.0M694.5 23.1Q695.0 21.1 695.3 19.6M692.9 28.5Q693.6 25.5 692.7 23.1M692.7 23.1Q690.8 21.9 690.4 19.7M692.7 23.1Q691.3 21.3 690.5 19.7M693.3 37.7Q692.1 34.2 691.9 30.6M691.9 30.6Q689.8 29.8 688.6 27.9M688.6 27.9Q687.8 26.4 686.5 25.4M688.6 27.9Q687.8 26.9 686.6 25.3M688.6 27.9Q686.8 27.6 686.0 26.6M691.9 30.6Q691.0 27.8 690.5 26.0M690.5 26.0Q689.0 24.8 688.4 23.6M690.5 26.0Q691.9 24.2 692.4 23.1M691.8 49.6Q691.0 43.9 688.4 35.8M688.4 35.8Q683.9 31.7 680.3 30.7M680.3 30.7Q676.4 29.4 673.9 27.9M673.9 27.9Q672.2 29.3 669.4 29.4M673.9 27.9Q672.3 26.2 671.5 23.4M673.9 27.9Q671.3 29.1 668.7 28.9M680.3 30.7Q677.4 29.2 675.4 26.6M675.4 26.6Q673.9 24.9 672.0 24.6M675.4 26.6Q674.4 25.1 672.1 23.9M675.4 26.6Q674.0 25.2 672.0 24.3M688.4 35.8Q687.8 33.2 684.6 27.3M684.6 27.3Q683.0 26.8 679.6 24.6M679.6 24.6Q678.6 23.6 676.9 22.3M679.6 24.6Q679.4 21.8 678.8 20.5M684.6 27.3Q683.3 23.9 681.3 21.5M681.3 21.5Q681.1 19.1 680.4 17.7M681.3 21.5Q680.0 19.7 678.7 18.7M695.3 53.2Q695.0 47.4 698.1 43.2M698.1 43.2Q699.7 39.3 700.1 37.4M700.1 37.4Q700.2 35.6 700.4 33.4M700.4 33.4Q700.9 32.7 701.5 31.2M700.4 33.4Q699.8 31.8 699.9 30.3M700.4 33.4Q700.1 32.3 700.5 30.3M700.1 37.4Q701.1 35.6 700.6 33.2M700.6 33.2Q700.7 31.7 700.4 30.6M700.6 33.2Q701.0 32.0 700.5 29.9M700.1 37.4Q701.7 35.6 702.3 33.9M702.3 33.9Q703.2 32.3 703.8 31.5M702.3 33.9Q703.6 32.5 703.9 31.4M702.3 33.9Q702.4 32.2 703.1 30.9M698.1 43.2Q701.7 41.2 703.3 39.6M703.3 39.6Q703.9 38.5 704.8 36.1M704.8 36.1Q705.0 35.3 705.0 33.6M704.8 36.1Q705.5 35.4 706.1 34.2M704.8 36.1Q705.2 35.3 704.8 33.7M703.3 39.6Q705.0 37.1 706.3 35.7M706.3 35.7Q708.2 34.7 709.0 33.3M706.3 35.7Q707.4 34.6 707.8 32.9M698.1 43.2Q700.9 39.5 702.7 36.9M702.7 36.9Q705.3 36.2 706.8 34.7M706.8 34.7Q707.9 33.8 708.4 32.3M706.8 34.7Q708.2 34.2 709.3 33.1M706.8 34.7Q708.1 34.0 710.1 34.2M702.7 36.9Q704.1 35.4 706.8 34.5M706.8 34.5Q707.2 33.0 707.7 31.2M706.8 34.5Q707.9 33.8 709.5 33.7M702.7 36.9Q702.4 34.9 702.4 31.3M702.4 31.3Q701.3 30.1 700.6 27.6M702.4 31.3Q702.0 29.2 700.4 28.0M695.3 53.2Q697.3 49.0 697.9 40.9M697.9 40.9Q698.8 36.2 702.2 34.1M702.2 34.1Q702.7 31.5 704.0 29.4M704.0 29.4Q704.8 27.9 705.5 26.1M704.0 29.4Q704.3 27.8 704.0 26.4M702.2 34.1Q704.2 33.1 705.6 30.5M705.6 30.5Q706.3 28.8 706.8 26.9M705.6 30.5Q706.2 29.0 706.5 27.4M705.6 30.5Q706.4 28.9 707.4 27.1M702.2 34.1Q704.1 31.1 704.4 28.8M704.4 28.8Q704.7 26.6 704.9 24.8M704.4 28.8Q704.8 26.6 704.1 24.6M697.9 40.9Q701.9 37.1 703.8 35.7M703.8 35.7Q706.2 35.1 708.3 34.8M708.3 34.8Q709.9 33.5 710.3 32.3M708.3 34.8Q710.1 34.1 711.7 34.1M703.8 35.7Q705.7 33.5 707.8 32.8M707.8 32.8Q709.5 32.7 711.6 32.7M707.8 32.8Q708.3 31.5 709.6 29.9M706.1 59.0Q712.0 57.1 716.7 57.3M716.7 57.3Q719.3 57.6 723.1 56.4M723.1 56.4Q724.6 56.5 727.0 55.5M727.0 55.5Q728.3 55.4 729.4 56.1M727.0 55.5Q728.0 55.9 729.4 57.2M723.1 56.4Q724.7 55.6 727.1 54.0M727.1 54.0Q728.2 52.8 729.5 52.3M727.1 54.0Q728.4 52.4 729.8 51.8M716.7 57.3Q719.9 56.4 723.0 56.8M723.0 56.8Q725.2 55.9 726.7 54.3M726.7 54.3Q727.9 54.6 729.7 54.1M726.7 54.3Q728.5 54.0 729.8 54.1M723.0 56.8Q725.0 58.1 727.3 58.5M727.3 58.5Q728.4 59.0 730.0 59.8M727.3 58.5Q728.0 59.8 729.2 61.0M723.0 56.8Q724.2 55.2 726.1 54.7M726.1 54.7Q727.2 54.1 728.2 53.1M726.1 54.7Q726.8 53.9 727.4 53.0M706.1 59.0Q710.1 54.3 713.4 49.4M713.4 49.4Q717.9 49.3 720.6 46.9M720.6 46.9Q721.3 45.4 723.2 42.2M723.2 42.2Q723.8 40.7 725.4 39.8M723.2 42.2Q723.9 40.6 724.6 38.8M720.6 46.9Q722.2 47.9 725.8 47.7M725.8 47.7Q726.8 49.4 729.1 49.8M725.8 47.7Q728.2 47.7 729.5 48.5M713.4 49.4Q715.9 44.2 718.2 42.0M718.2 42.0Q720.2 39.5 720.1 35.2M720.1 35.2Q718.4 33.5 717.5 31.6M720.1 35.2Q722.2 34.2 724.4 32.4M718.2 42.0Q720.6 40.4 723.7 38.9M723.7 38.9Q724.8 36.5 726.7 35.2M723.7 38.9Q725.4 38.7 728.4 37.4M677.0 38.4Q682.6 35.8 685.2 35.1M685.2 35.1Q687.4 33.5 690.4 31.1M690.4 31.1Q690.8 29.2 691.8 27.0M690.4 31.1Q692.2 30.8 694.5 31.2M685.2 35.1Q685.8 33.2 688.2 30.5M688.2 30.5Q687.4 28.5 687.4 27.4M688.2 30.5Q690.4 29.2 691.5 28.4M677.0 38.4Q678.5 34.6 677.3 30.5M677.3 30.5Q676.3 27.9 676.6 24.9M676.6 24.9Q675.9 22.9 674.8 21.4M676.6 24.9Q677.9 23.4 679.8 22.0M677.3 30.5Q678.2 28.3 679.5 25.9M679.5 25.9Q680.5 24.4 681.8 23.4M679.5 25.9Q680.4 23.8 680.4 22.6M682.0 45.8Q684.7 43.4 687.3 41.7M687.3 41.7Q688.2 39.3 688.3 37.3M688.3 37.3Q687.0 35.8 686.7 34.4M688.3 37.3Q687.6 35.7 688.0 34.1M688.3 37.3Q688.3 36.2 689.0 34.2M687.3 41.7Q689.6 42.0 691.7 42.7M691.7 42.7Q693.4 44.3 694.1 44.8M691.7 42.7Q693.6 42.2 694.9 41.7M682.0 45.8Q684.6 46.1 688.6 47.3M688.6 47.3Q691.1 47.3 693.5 49.1M693.5 49.1Q694.3 50.2 696.3 51.0M693.5 49.1Q695.2 49.5 696.8 49.9M688.6 47.3Q690.5 46.6 693.6 46.0M693.6 46.0Q695.2 45.3 696.7 44.0M693.6 46.0Q694.3 44.7 696.2 43.2M660.9 28.8Q660.5 25.6 658.9 19.9M658.9 19.9Q658.7 18.0 659.9 14.1M659.9 14.1Q660.3 11.6 661.3 9.6M659.9 14.1Q661.3 12.2 661.3 10.0M658.9 19.9Q657.6 17.5 656.0 14.9M656.0 14.9Q655.5 12.8 655.9 11.1M656.0 14.9Q655.3 13.7 653.8 12.1M656.0 14.9Q657.0 13.0 657.2 11.3M660.9 28.8Q660.2 22.7 661.4 19.6M661.4 19.6Q661.8 15.7 662.1 13.1M662.1 13.1Q662.6 10.6 663.0 9.3M662.1 13.1Q662.8 11.5 663.2 9.2M661.4 19.6Q662.4 15.7 662.9 13.8M662.9 13.8Q661.5 11.3 660.2 10.0M662.9 13.8Q665.7 13.4 667.2 12.0M665.7 29.7Q666.9 23.2 666.9 20.0M666.9 20.0Q666.7 17.0 668.7 13.3M668.7 13.3Q669.9 11.5 670.5 8.4M668.7 13.3Q669.8 11.5 671.9 9.8M666.9 20.0Q669.3 17.0 671.2 15.3M671.2 15.3Q672.9 13.9 673.5 11.3M671.2 15.3Q672.1 13.3 673.8 12.3M671.2 15.3Q672.9 14.3 673.2 12.0M665.7 29.7Q670.7 28.0 673.8 23.5M673.8 23.5Q678.2 22.5 680.2 18.9M680.2 18.9Q681.9 17.0 682.6 14.6M680.2 18.9Q683.2 17.4 685.3 16.4M673.8 23.5Q675.9 21.8 676.1 18.0M676.1 18.0Q676.3 15.9 677.3 14.1M676.1 18.0Q677.3 16.0 678.5 14.2M676.1 18.0Q677.9 16.6 678.8 15.3M663.0 65.1Q657.7 63.7 654.7 64.6M654.7 64.6Q652.6 64.3 649.4 63.9M649.4 63.9Q648.0 63.6 645.4 63.2M649.4 63.9Q646.9 63.7 645.5 64.5M649.4 63.9Q647.5 64.5 645.8 65.3M654.7 64.6Q651.6 63.4 650.3 60.7M650.3 60.7Q647.3 60.1 645.8 59.9M650.3 60.7Q648.3 58.5 647.6 57.0M663.0 65.1Q659.9 63.4 656.7 60.5M656.7 60.5Q656.1 58.2 653.6 55.9M653.6 55.9Q652.0 55.5 650.1 55.5M653.6 55.9Q652.9 54.9 651.7 52.5M656.7 60.5Q655.1 57.6 653.0 56.6M653.0 56.6Q652.0 54.9 650.9 53.8M653.0 56.6Q652.8 55.2 651.4 53.0M668.8 59.8Q668.7 56.3 666.4 50.1M666.4 50.1Q665.1 48.7 661.7 46.8M661.7 46.8Q660.4 46.3 658.0 45.1M661.7 46.8Q659.3 47.1 658.0 46.6M661.7 46.8Q660.1 46.9 657.4 45.6M666.4 50.1Q663.2 47.2 662.1 44.6M662.1 44.6Q660.5 42.8 658.7 41.6M662.1 44.6Q660.5 42.6 659.3 41.3M668.8 59.8Q669.2 53.8 668.6 50.4M668.6 50.4Q668.9 48.0 668.8 43.9M668.8 43.9Q668.7 41.8 667.8 39.1M668.8 43.9Q669.6 41.5 669.7 39.2M668.6 50.4Q668.3 45.7 668.2 43.3M668.2 43.3Q668.7 41.3 668.3 39.0M668.2 43.3Q668.4 41.0 668.2 38.6M682.5 49.2Q684.4 43.1 687.5 37.2M687.5 37.2Q692.5 34.0 694.5 30.0M694.5 30.0Q697.5 29.0 701.0 27.6M694.5 30.0Q696.4 27.3 700.3 27.0M687.5 37.2Q688.6 32.8 688.4 29.0M688.4 29.0Q689.3 26.2 689.4 23.5M688.4 29.0Q690.2 27.1 691.3 25.2M682.5 49.2Q682.6 44.0 682.6 38.4M682.6 38.4Q683.5 35.6 683.9 30.9M683.9 30.9Q683.8 29.1 684.3 25.6M683.9 30.9Q683.1 27.3 682.5 25.4M682.6 38.4Q684.2 35.0 685.7 31.7M685.7 31.7Q686.1 28.2 687.3 26.5M685.7 31.7Q686.4 30.2 687.1 27.6M682.3 51.1Q680.9 43.4 680.8 39.2M680.8 39.2Q679.4 37.1 675.1 33.4M675.1 33.4Q673.6 31.4 671.3 30.0M675.1 33.4Q673.2 31.9 670.6 30.5M680.8 39.2Q679.6 36.4 677.4 30.6M677.4 30.6Q674.1 28.6 671.9 28.3M677.4 30.6Q677.6 28.1 677.6 24.9M682.3 51.1Q681.9 46.2 677.7 40.1M677.7 40.1Q677.8 37.6 677.1 33.0M677.1 33.0Q674.5 31.5 672.9 30.0M677.1 33.0Q675.5 31.6 675.4 28.7M677.7 40.1Q679.1 37.7 679.8 33.1M679.8 33.1Q681.3 31.2 683.6 29.6M679.8 33.1Q679.9 31.1 678.8 28.2M708.1 63.4Q715.9 61.9 720.0 59.3M720.0 59.3Q723.4 58.6 729.3 60.0M729.3 60.0Q732.1 59.2 734.7 59.1M729.3 60.0Q732.2 62.3 734.4 64.8M720.0 59.3Q722.9 57.9 728.9 55.1M728.9 55.1Q732.7 55.1 735.2 55.2M728.9 55.1Q732.9 53.1 734.3 50.1M708.1 63.4Q711.3 60.6 717.3 58.4M717.3 58.4Q719.1 54.7 723.6 53.3M723.6 53.3Q724.8 50.4 726.0 49.2M723.6 53.3Q725.5 50.8 727.2 48.7M723.6 53.3Q725.5 52.2 729.0 51.7M717.3 58.4Q719.5 57.3 724.2 55.4M724.2 55.4Q727.3 53.3 729.4 53.1M724.2 55.4Q725.7 54.3 728.3 52.7M707.0 64.6Q712.2 63.0 715.8 60.4M715.8 60.4Q718.1 59.2 722.8 59.9M722.8 59.9Q725.7 60.0 727.3 59.7M722.8 59.9Q725.4 60.4 727.2 60.0M722.8 59.9Q724.0 61.9 725.4 63.1M715.8 60.4Q720.0 57.7 721.9 56.8M721.9 56.8Q723.3 55.5 725.4 53.5M721.9 56.8Q724.3 55.5 725.6 54.8M715.8 60.4Q717.9 62.8 722.4 62.9M722.4 62.9Q724.9 62.2 727.0 61.9M722.4 62.9Q724.0 66.2 725.3 67.6M707.0 64.6Q712.4 64.6 717.5 67.6M717.5 67.6Q721.3 68.0 724.4 66.9M724.4 66.9Q726.5 65.4 727.4 64.1M724.4 66.9Q727.0 66.9 729.2 67.5M724.4 66.9Q726.1 65.9 728.3 64.4M717.5 67.6Q720.9 68.5 724.4 67.1M724.4 67.1Q725.9 68.8 728.5 69.2M724.4 67.1Q725.9 67.3 728.6 68.4M724.4 67.1Q726.6 68.3 729.1 69.5M707.0 64.6Q712.9 63.5 715.6 59.0M715.6 59.0Q719.2 58.6 723.2 57.1M723.2 57.1Q724.7 54.9 726.9 53.1M723.2 57.1Q725.2 56.7 728.8 56.2M715.6 59.0Q716.9 55.8 719.2 53.4M719.2 53.4Q719.2 51.8 719.4 48.5M719.2 53.4Q720.4 52.5 723.2 49.8M719.2 53.4Q721.2 52.6 722.3 50.9M697.3 54.9Q696.4 51.7 697.1 44.8M697.1 44.8Q696.2 42.1 693.6 38.6M693.6 38.6Q691.9 37.6 690.0 35.3M693.6 38.6Q692.8 36.4 692.7 34.1M697.1 44.8Q697.5 41.7 700.1 38.1M700.1 38.1Q702.0 36.5 704.1 35.4M700.1 38.1Q701.1 35.5 702.3 34.3M700.1 38.1Q699.9 36.1 700.8 32.6M697.3 54.9Q700.8 50.3 708.3 49.1M708.3 49.1Q710.9 46.0 714.8 45.3M714.8 45.3Q715.6 43.6 717.6 40.2M714.8 45.3Q717.1 45.7 720.3 45.8M708.3 49.1Q711.1 48.0 715.4 46.9M715.4 46.9Q718.7 45.7 720.3 45.6M715.4 46.9Q718.5 47.8 720.7 48.4M708.3 49.1Q713.2 47.1 716.0 46.9M716.0 46.9Q717.2 45.8 719.7 42.5M716.0 46.9Q719.9 44.8 721.7 44.7M705.7 57.1Q707.3 55.0 708.0 50.6M708.0 50.6Q707.4 47.4 708.2 45.8M708.2 45.8Q707.7 44.4 706.7 43.2M708.2 45.8Q707.4 44.3 706.9 42.9M708.2 45.8Q708.2 44.5 707.9 42.9M708.0 50.6Q708.4 48.1 707.3 46.2M707.3 46.2Q707.9 44.3 708.0 43.4M707.3 46.2Q706.1 44.6 705.4 44.1M705.7 57.1Q705.1 53.5 705.1 49.5M705.1 49.5Q705.8 47.6 706.6 44.8M706.6 44.8Q706.6 43.5 706.7 41.5M706.6 44.8Q705.8 43.5 706.1 41.6M705.1 49.5Q705.1 46.9 704.6 44.4M704.6 44.4Q705.7 42.8 705.9 41.0M704.6 44.4Q704.2 42.8 703.4 41.1M704.6 44.4Q703.7 43.5 703.0 41.8M705.1 49.5Q703.8 47.3 702.9 44.6M702.9 44.6Q703.3 43.2 702.9 41.3M702.9 44.6Q702.0 42.5 701.5 40.8M704.2 55.1Q701.9 51.9 697.8 49.7M697.8 49.7Q695.6 47.4 693.7 46.5M693.7 46.5Q692.1 46.7 690.4 46.9M693.7 46.5Q692.2 45.6 689.9 46.0M697.8 49.7Q693.9 50.1 691.6 48.8M691.6 48.8Q690.2 48.3 687.5 48.5M691.6 48.8Q688.9 49.8 687.5 49.7M691.6 48.8Q689.9 48.7 687.3 47.9M704.2 55.1Q703.0 49.5 704.4 46.1M704.4 46.1Q702.7 44.4 699.4 41.8M699.4 41.8Q697.4 40.3 696.2 38.1M699.4 41.8Q697.9 41.9 694.9 40.4M699.4 41.8Q698.9 39.9 697.8 38.1M704.4 46.1Q707.6 43.3 708.7 41.5M708.7 41.5Q709.7 39.8 711.3 38.7M708.7 41.5Q711.1 41.0 712.9 39.7M697.5 53.8Q696.2 51.1 694.9 45.9M694.9 45.9Q694.4 42.3 695.5 40.3M695.5 40.3Q696.8 39.0 697.2 36.3M695.5 40.3Q696.2 39.1 698.0 36.8M694.9 45.9Q694.3 42.0 691.7 40.2M691.7 40.2Q690.5 39.4 688.2 37.5M691.7 40.2Q690.7 38.8 688.1 37.4M694.9 45.9Q694.0 44.3 692.7 40.9M692.7 40.9Q693.0 38.8 692.9 36.8M692.7 40.9Q692.2 39.3 691.3 38.0M692.7 40.9Q690.6 40.0 689.4 38.3M697.5 53.8Q699.3 51.0 700.1 46.3M700.1 46.3Q700.6 43.5 700.9 41.0M700.9 41.0Q700.0 38.8 699.3 37.8M700.9 41.0Q701.7 39.2 701.5 37.5M700.9 41.0Q701.9 39.4 703.0 38.6M700.1 46.3Q700.3 43.2 700.9 41.5M700.9 41.5Q701.6 40.1 701.9 38.4M700.9 41.5Q699.8 39.5 699.8 38.3M700.9 41.5Q701.5 40.2 701.7 38.4M697.5 53.8Q695.6 49.6 692.6 45.8M692.6 45.8Q690.0 44.1 687.6 42.5M687.6 42.5Q687.1 40.7 685.2 38.9M687.6 42.5Q685.6 41.7 683.5 41.4M692.6 45.8Q690.2 42.4 688.5 41.1M688.5 41.1Q687.8 39.2 685.7 37.8M688.5 41.1Q687.0 40.5 684.4 39.5M688.5 41.1Q686.8 39.3 684.7 38.2M688.8 58.9Q686.9 53.8 682.4 51.9M682.4 51.9Q679.7 49.4 678.2 47.9M678.2 47.9Q676.6 45.5 675.7 44.2M678.2 47.9Q676.7 47.7 675.0 46.8M682.4 51.9Q681.1 49.1 679.3 47.1M679.3 47.1Q677.9 46.0 675.8 45.6M679.3 47.1Q678.3 45.0 677.6 43.1M688.8 58.9Q685.0 58.5 682.1 55.5M682.1 55.5Q680.7 54.2 678.8 51.3M678.8 51.3Q677.1 50.0 675.4 49.3M678.8 51.3Q678.6 49.1 677.8 47.2M682.1 55.5Q679.4 53.7 678.3 52.5M678.3 52.5Q676.2 51.4 674.6 51.4M678.3 52.5Q678.3 50.4 677.1 49.2M688.8 58.9Q688.5 56.0 685.2 51.2M685.2 51.2Q683.2 49.2 681.1 46.8M681.1 46.8Q680.0 45.3 678.4 43.2M681.1 46.8Q679.2 46.0 678.4 44.3M685.2 51.2Q685.2 49.2 685.3 45.5M685.3 45.5Q683.6 44.6 682.7 43.2M685.3 45.5Q684.4 43.4 683.2 41.6M685.2 51.2Q684.8 47.8 684.1 46.1M684.1 46.1Q682.7 44.3 681.3 43.5M684.1 46.1Q684.4 44.3 684.1 42.5M684.1 46.1Q684.1 45.0 684.0 42.7"/><path stroke-width="0.5" d="M671.5 48.5Q674.5 45.3 677.0 38.4M671.5 48.5Q675.2 46.2 682.0 45.8M659.9 42.3Q661.6 35.1 660.9 28.8M659.9 42.3Q662.7 37.1 665.7 29.7M670.6 73.4Q666.6 68.2 663.0 65.1M670.6 73.4Q668.7 67.7 668.8 59.8M681.5 66.7Q680.0 60.8 682.5 49.2M681.5 66.7Q683.7 57.6 682.3 51.1M692.4 71.1Q701.2 65.2 708.1 63.4M692.4 71.1Q702.0 65.8 707.0 64.6M692.4 71.1Q697.3 62.5 697.3 54.9M708.1 68.4Q706.9 63.3 705.7 57.1M708.1 68.4Q708.4 63.9 704.2 55.1M698.8 66.8Q697.6 59.7 697.5 53.8M698.8 66.8Q691.7 60.7 688.8 58.9"/><path stroke-width="1.0" d="M657.6 82.3Q661.8 73.8 672.8 69.6M672.8 69.6Q679.1 62.1 682.4 59.5M672.8 69.6Q677.5 67.0 686.6 64.8M657.6 82.3Q667.7 73.6 676.3 70.9M676.3 70.9Q679.4 64.6 683.9 58.3M676.3 70.9Q684.9 70.5 692.8 70.6M676.3 70.9Q685.1 74.3 693.5 72.6M654.8 85.2Q658.7 74.2 660.5 68.9M660.5 68.9Q660.4 62.0 662.7 58.0M660.5 68.9Q662.5 66.2 666.7 60.2M654.8 85.2Q656.9 79.2 657.7 70.1M657.7 70.1Q660.1 66.1 663.4 61.7M657.7 70.1Q656.6 64.6 654.9 60.5M677.9 92.5Q691.4 95.0 697.9 91.3M697.9 91.3Q704.4 88.4 708.3 83.0M697.9 91.3Q705.1 89.0 709.3 87.2M677.9 92.5Q686.0 77.9 691.3 69.5M691.3 69.5Q689.6 60.2 691.8 49.6M691.3 69.5Q691.7 64.3 695.3 53.2M691.3 69.5Q698.6 64.9 706.1 59.0M663.0 64.0Q669.3 56.1 671.5 48.5M663.0 64.0Q661.7 50.7 659.9 42.3M678.3 89.8Q673.8 81.3 670.6 73.4M678.3 89.8Q680.5 78.2 681.5 66.7M678.3 89.8Q681.9 80.7 692.4 71.1M704.5 86.4Q705.7 77.3 708.1 68.4M704.5 86.4Q702.4 78.4 698.8 66.8"/><path stroke-width="1.5" d="M648.0 90.0Q653.3 77.7 663.0 64.0M668.0 118.0Q675.5 99.7 678.3 89.8M700.0 112.0Q700.1 101.9 704.5 86.4"/><path stroke-width="2.0" d="M649.8 110.1Q657.8 91.9 657.6 82.3M649.8 110.1Q654.6 94.1 654.8 85.2M650.0 112.0Q667.8 105.3 677.9 92.5"/><path stroke-width="2.5" d="M647.0 150.0Q650.4 123.2 649.8 110.1"/></g><g fill="none" stroke="#6a4a38" stroke-linecap="round" opacity="0.7"><path stroke-width="0.45" d="M744.0 88.4Q742.4 84.6 738.5 79.9M738.5 79.9Q737.1 77.2 735.9 74.9M738.5 79.9Q736.5 75.6 735.4 73.7M744.0 88.4Q744.9 82.9 745.2 77.4M745.2 77.4Q745.6 74.0 746.2 71.1M745.2 77.4Q746.3 73.4 748.5 70.0M745.2 77.4Q745.8 71.8 746.7 69.2M745.6 87.1Q745.1 80.3 744.2 75.3M744.2 75.3Q744.0 71.1 745.0 67.4M744.2 75.3Q743.5 70.7 743.9 66.3M745.6 87.1Q745.7 82.1 744.1 74.8M744.1 74.8Q741.3 72.5 740.8 68.5M744.1 74.8Q743.6 72.4 743.2 67.9M742.8 85.7Q739.4 78.1 738.7 73.3M738.7 73.3Q736.7 69.5 734.8 65.4M738.7 73.3Q738.7 70.2 738.6 65.4M738.7 73.3Q739.9 67.4 738.2 64.3M742.8 85.7Q740.7 78.4 743.0 73.7M743.0 73.7Q744.3 69.2 742.6 65.1M743.0 73.7Q742.2 68.8 742.5 65.4M749.1 84.7Q747.9 78.0 745.8 74.6M745.8 74.6Q743.3 72.1 742.9 68.4M745.8 74.6Q745.3 70.6 743.3 66.9M749.1 84.7Q749.8 80.4 751.1 74.4M751.1 74.4Q751.3 71.3 752.2 68.5M751.1 74.4Q752.1 72.3 752.9 68.7M743.9 83.5Q741.2 75.4 742.9 70.0M742.9 70.0Q742.3 66.2 743.4 60.7M742.9 70.0Q744.3 63.9 744.0 60.8M743.9 83.5Q746.2 74.3 744.3 69.8M744.3 69.8Q745.3 65.2 743.7 61.8M744.3 69.8Q744.7 66.7 742.6 61.9M767.6 85.7Q765.6 80.9 762.5 76.0M762.5 76.0Q761.2 73.6 759.0 70.1M762.5 76.0Q761.8 73.5 762.1 69.0M767.6 85.7Q766.0 80.8 763.6 76.5M763.6 76.5Q761.7 73.1 760.4 71.2M763.6 76.5Q761.6 72.9 761.5 71.1M776.8 78.3Q780.1 71.0 780.5 64.7M780.5 64.7Q780.7 60.9 780.9 55.3M780.5 64.7Q782.7 59.5 782.9 55.7M776.8 78.3Q774.0 72.7 776.4 63.7M776.4 63.7Q775.9 59.6 776.2 53.4M776.4 63.7Q778.0 60.1 778.9 53.9M776.4 63.7Q778.5 59.8 779.5 56.0M776.8 78.3Q780.7 72.7 781.6 67.9M781.6 67.9Q782.5 65.9 785.8 61.5M781.6 67.9Q782.0 63.9 784.0 61.9M773.1 79.4Q770.0 71.4 770.2 66.0M770.2 66.0Q766.6 61.7 765.3 57.0M770.2 66.0Q767.6 61.4 767.0 56.8M770.2 66.0Q770.2 60.8 768.5 56.5M773.1 79.4Q771.9 73.2 770.3 69.0M770.3 69.0Q768.6 63.7 768.7 61.2M770.3 69.0Q769.5 66.1 770.8 62.5M770.3 69.0Q768.9 66.5 769.7 62.8M809.2 79.7Q810.1 73.6 813.3 68.7M813.3 68.7Q814.5 64.0 815.9 61.6M813.3 68.7Q815.3 65.6 814.9 61.9M809.2 79.7Q814.2 74.0 818.3 69.3M818.3 69.3Q821.0 65.9 825.6 61.6M818.3 69.3Q824.4 68.8 827.4 66.6M813.5 78.7Q816.5 72.9 817.7 64.9M817.7 64.9Q817.4 61.6 820.4 55.9M817.7 64.9Q817.6 61.4 820.2 56.5M813.5 78.7Q816.5 75.2 824.7 65.8M824.7 65.8Q829.9 63.1 833.2 58.2M824.7 65.8Q828.9 63.3 834.2 59.8M756.7 89.6Q753.8 83.7 748.5 77.7M748.5 77.7Q746.1 75.4 740.5 71.5M748.5 77.7Q746.0 73.2 745.3 68.0M756.7 89.6Q753.6 81.8 753.1 75.9M753.1 75.9Q750.8 73.2 749.1 68.1M753.1 75.9Q752.6 73.0 749.1 68.0M753.1 75.9Q752.1 73.1 753.1 67.4M754.4 93.6Q750.0 90.0 746.8 85.7M746.8 85.7Q744.9 82.7 741.9 81.9M746.8 85.7Q744.1 82.8 742.1 80.3M754.4 93.6Q750.6 88.3 749.9 83.4M749.9 83.4Q747.8 82.0 745.2 78.8M749.9 83.4Q750.0 80.3 747.3 75.3M778.6 87.5Q778.4 81.9 775.1 76.2M775.1 76.2Q773.0 73.9 770.6 69.3M775.1 76.2Q774.3 71.7 772.2 69.1M778.6 87.5Q777.0 84.2 772.2 77.1M772.2 77.1Q770.0 75.0 766.6 71.6M772.2 77.1Q772.5 73.6 770.1 68.6M772.2 77.1Q769.9 72.3 768.8 68.4M789.1 86.1Q791.0 80.9 790.2 73.9M790.2 73.9Q791.4 70.9 790.1 66.8M790.2 73.9Q790.8 70.2 789.5 65.2M789.1 86.1Q789.6 81.1 791.5 74.6M791.5 74.6Q790.6 71.2 790.9 66.7M791.5 74.6Q791.1 69.7 792.5 66.9M791.5 74.6Q793.7 69.4 793.1 66.4M790.6 88.1Q792.1 81.5 792.4 76.1M792.4 76.1Q792.5 72.3 790.4 67.5M792.4 76.1Q793.2 71.3 793.6 67.9M790.6 88.1Q795.3 81.8 797.4 78.3M797.4 78.3Q801.2 75.4 803.2 72.7M797.4 78.3Q798.0 74.6 800.4 70.6M797.4 78.3Q801.6 74.3 803.2 73.1M779.3 76.9Q776.1 70.4 774.0 66.9M774.0 66.9Q774.2 63.1 772.2 59.9M774.0 66.9Q771.6 64.6 769.8 61.5M779.3 76.9Q781.9 71.4 783.4 67.0M783.4 67.0Q783.4 63.6 785.6 60.8M783.4 67.0Q785.4 64.8 786.7 60.5M779.3 76.9Q778.5 68.6 780.9 64.6M780.9 64.6Q782.9 59.6 783.5 57.2M780.9 64.6Q780.2 60.3 780.8 56.4M779.3 77.4Q777.4 70.6 776.1 63.8M776.1 63.8Q775.8 59.6 772.5 53.8M776.1 63.8Q778.1 60.0 777.5 53.4M779.3 77.4Q780.7 73.0 781.9 64.2M781.9 64.2Q783.8 59.6 783.4 56.5M781.9 64.2Q784.1 60.5 783.6 56.0M825.2 78.7Q825.5 72.0 829.7 65.9M829.7 65.9Q831.3 63.2 833.8 58.1M829.7 65.9Q831.8 61.9 835.6 58.5M829.7 65.9Q829.6 60.5 831.9 57.5M825.2 78.7Q825.4 72.7 827.4 66.8M827.4 66.8Q828.0 63.8 830.0 59.2M827.4 66.8Q826.5 61.5 827.3 58.4M827.4 66.8Q827.9 62.3 830.1 58.9M826.4 82.9Q827.9 76.9 832.7 73.4M832.7 73.4Q833.4 70.8 836.4 68.0M832.7 73.4Q832.9 69.9 835.4 65.8M832.7 73.4Q834.6 71.7 838.0 69.8M826.4 82.9Q828.5 80.6 831.1 75.6M831.1 75.6Q832.4 72.4 835.4 71.2M831.1 75.6Q831.8 73.3 832.9 69.6M810.3 69.5Q808.1 63.8 808.3 55.0M808.3 55.0Q805.7 49.6 806.6 45.2M808.3 55.0Q808.7 51.8 807.1 46.6M810.3 69.5Q807.4 63.7 805.7 56.3M805.7 56.3Q802.0 51.2 800.3 47.7M805.7 56.3Q802.5 54.0 801.1 49.4M805.7 56.3Q804.1 51.6 804.9 48.4M815.2 70.2Q817.6 61.1 815.3 56.0M815.3 56.0Q815.0 52.0 814.8 47.5M815.3 56.0Q816.6 52.4 819.1 48.7M815.2 70.2Q814.1 63.2 815.6 59.4M815.6 59.4Q813.2 57.0 812.9 52.4M815.6 59.4Q816.2 56.6 815.0 53.1M820.9 55.1Q821.5 44.8 820.2 37.7M820.2 37.7Q820.5 31.5 818.2 26.2M820.2 37.7Q823.0 35.2 825.4 29.4M820.9 55.1Q818.2 44.1 821.2 37.6M821.2 37.6Q821.8 32.3 819.1 27.9M821.2 37.6Q824.5 30.5 825.1 26.4M821.2 37.6Q819.9 33.7 821.2 26.7M823.2 50.8Q829.3 39.0 828.7 32.4M828.7 32.4Q830.6 27.0 830.5 21.0M828.7 32.4Q834.0 24.7 836.0 21.4M823.2 50.8Q828.1 42.6 826.8 33.5M826.8 33.5Q828.5 26.0 826.7 22.4M826.8 33.5Q828.3 26.2 827.8 22.1M830.7 54.6Q837.5 47.7 841.2 38.8M841.2 38.8Q843.4 35.1 846.9 28.3M841.2 38.8Q847.8 33.7 851.7 31.8M841.2 38.8Q845.9 33.5 848.5 30.1M830.7 54.6Q841.3 53.4 847.2 46.7M847.2 46.7Q852.4 43.9 858.9 39.3M847.2 46.7Q853.6 45.6 857.4 46.1M830.7 54.6Q834.0 49.1 842.9 40.5M842.9 40.5Q843.5 34.3 845.4 29.5M842.9 40.5Q850.3 37.7 854.0 36.1M842.9 40.5Q845.7 35.4 849.3 31.9M794.0 61.3Q792.2 51.6 789.3 46.6M789.3 46.6Q788.5 42.4 783.9 36.1M789.3 46.6Q784.8 42.0 784.0 37.7M794.0 61.3Q795.1 53.8 790.6 45.5M790.6 45.5Q788.1 41.6 785.5 34.5M790.6 45.5Q788.6 39.8 787.1 36.5M799.8 54.6Q796.9 48.1 794.1 38.4M794.1 38.4Q791.1 31.8 792.0 26.9M794.1 38.4Q793.0 34.2 789.3 28.4M794.1 38.4Q791.0 34.9 789.9 28.1M799.8 54.6Q800.7 48.2 805.3 34.9M805.3 34.9Q805.5 25.5 804.8 20.1M805.3 34.9Q808.1 29.7 807.9 21.0M815.6 82.9Q814.1 78.9 810.2 72.6M810.2 72.6Q808.5 69.4 805.9 65.8M810.2 72.6Q808.2 68.6 806.9 64.7M815.6 82.9Q811.7 77.5 811.1 74.4M811.1 74.4Q810.5 71.2 807.2 68.2M811.1 74.4Q811.9 70.7 811.0 68.7M813.6 82.8Q809.4 79.2 807.7 74.3M807.7 74.3Q806.5 70.9 804.0 68.3M807.7 74.3Q804.7 70.4 803.9 68.3M807.7 74.3Q805.8 72.3 804.7 68.9M813.6 82.8Q814.4 78.8 812.7 71.5M812.7 71.5Q811.1 67.2 811.6 64.0M812.7 71.5Q813.9 68.2 813.6 64.8M822.5 76.9Q818.6 71.3 815.6 65.2M815.6 65.2Q812.3 62.8 809.3 57.9M815.6 65.2Q815.0 61.1 812.0 57.9M822.5 76.9Q820.1 69.7 820.4 65.4M820.4 65.4Q821.0 62.7 819.2 57.1M820.4 65.4Q820.2 61.4 821.2 58.4M822.5 76.9Q818.3 73.8 816.3 68.3M816.3 68.3Q814.9 65.9 813.4 61.6M816.3 68.3Q814.4 64.6 813.6 62.5M824.7 80.0Q820.8 75.7 819.4 71.5M819.4 71.5Q818.8 69.2 817.6 65.9M819.4 71.5Q816.7 66.9 815.6 64.8M824.7 80.0Q825.5 73.6 823.2 69.1M823.2 69.1Q822.0 66.5 820.4 62.8M823.2 69.1Q824.2 64.9 823.3 62.5M826.1 74.3Q828.3 68.9 825.6 60.1M825.6 60.1Q825.6 56.8 826.9 52.0M825.6 60.1Q827.9 56.4 828.1 49.9M826.1 74.3Q828.3 66.1 825.4 59.4M825.4 59.4Q826.8 55.6 824.7 49.1M825.4 59.4Q826.1 54.0 823.4 50.0M812.6 87.0Q809.7 82.7 808.1 78.8M808.1 78.8Q807.0 76.7 806.9 73.0M808.1 78.8Q806.6 76.1 805.2 74.0M812.6 87.0Q810.0 79.9 809.9 75.8M809.9 75.8Q809.8 72.1 809.0 68.1M809.9 75.8Q808.7 72.0 808.0 68.6M820.4 85.9Q817.2 82.2 817.6 76.3M817.6 76.3Q817.6 73.9 816.1 70.8M817.6 76.3Q816.4 72.8 816.4 70.8M817.6 76.3Q816.2 72.7 813.8 71.0M820.4 85.9Q820.3 82.9 820.8 76.9M820.8 76.9Q820.2 74.6 818.7 70.6M820.8 76.9Q820.4 74.2 820.9 70.9M820.8 76.9Q821.1 74.8 820.9 71.2M810.6 79.4Q807.9 73.5 802.7 69.5M802.7 69.5Q798.9 68.2 795.3 66.0M802.7 69.5Q799.7 66.7 799.4 61.9M810.6 79.4Q810.2 72.1 806.2 67.7M806.2 67.7Q804.3 63.8 801.9 61.9M806.2 67.7Q804.7 63.5 803.5 60.4M806.2 67.7Q805.6 63.0 802.4 59.3M813.7 79.2Q812.0 73.1 810.8 68.0M810.8 68.0Q809.3 63.8 809.7 60.9M810.8 68.0Q810.7 64.0 813.2 59.5M813.7 79.2Q814.4 74.4 816.6 67.2M816.6 67.2Q817.3 63.8 816.8 57.8M816.6 67.2Q817.5 61.7 817.8 58.8M820.0 78.6Q817.9 71.9 813.7 65.8M813.7 65.8Q813.9 60.2 810.4 55.6M813.7 65.8Q812.9 59.9 808.7 57.5M820.0 78.6Q817.8 73.0 814.6 67.6M814.6 67.6Q813.7 64.2 812.7 59.5M814.6 67.6Q813.5 64.1 811.4 60.7M821.9 76.6Q820.6 69.2 817.7 62.3M817.7 62.3Q816.0 58.9 815.0 53.4M817.7 62.3Q816.0 56.7 817.4 52.5M821.9 76.6Q818.3 71.3 816.5 62.4M816.5 62.4Q812.2 56.1 811.4 52.8M816.5 62.4Q814.9 58.8 814.0 53.7M821.9 76.6Q821.3 71.2 817.8 62.4M817.8 62.4Q816.3 56.8 816.3 53.3M817.8 62.4Q819.3 57.4 820.1 53.6M730.3 92.5Q727.8 86.6 724.4 81.9M724.4 81.9Q721.9 78.5 720.3 75.8M724.4 81.9Q722.4 76.5 722.4 73.8M730.3 92.5Q732.2 87.4 732.6 83.1M732.6 83.1Q733.7 80.0 736.2 76.8M732.6 83.1Q733.3 81.0 735.0 77.3M732.6 83.1Q735.4 79.9 736.3 77.3M735.4 95.4Q735.0 90.5 735.9 86.8M735.9 86.8Q735.8 84.4 735.1 80.9M735.9 86.8Q735.9 84.5 737.7 80.4M735.4 95.4Q737.3 91.2 737.9 87.8M737.9 87.8Q738.2 84.9 739.5 82.1M737.9 87.8Q738.6 85.1 739.8 82.6M719.8 92.1Q715.8 85.2 715.3 80.3M715.3 80.3Q713.2 77.2 712.4 71.3M715.3 80.3Q711.3 77.5 710.5 72.4M719.8 92.1Q721.2 85.3 719.4 79.1M719.4 79.1Q719.8 72.8 718.5 69.2M719.4 79.1Q720.1 73.8 719.4 69.7M723.3 94.0Q722.5 87.0 723.6 82.6M723.6 82.6Q720.1 77.7 719.6 75.4M723.6 82.6Q722.8 78.0 724.0 74.6M723.6 82.6Q725.8 77.9 726.4 74.5M723.3 94.0Q724.0 87.8 725.4 83.6M725.4 83.6Q724.0 80.5 725.1 75.9M725.4 83.6Q725.3 79.5 726.3 75.9M757.8 99.9Q754.2 96.6 747.1 94.8M747.1 94.8Q742.6 95.7 740.4 94.5M747.1 94.8Q745.1 93.0 741.7 90.4M757.8 99.9Q754.1 94.0 749.6 91.2M749.6 91.2Q745.6 88.5 742.7 86.9M749.6 91.2Q747.3 87.4 744.5 83.7M758.3 100.3Q752.0 95.2 749.0 92.9M749.0 92.9Q746.5 90.8 743.3 88.9M749.0 92.9Q746.6 88.1 744.6 86.2M749.0 92.9Q747.1 88.9 742.0 87.6M758.3 100.3Q755.9 95.4 753.9 92.7M753.9 92.7Q751.7 90.0 750.0 88.1M753.9 92.7Q751.6 90.5 750.6 87.8M753.9 92.7Q752.6 89.4 749.9 88.3M772.3 99.2Q769.5 95.8 765.9 93.0M765.9 93.0Q763.2 92.0 761.7 90.2M765.9 93.0Q764.5 91.9 761.9 89.3M772.3 99.2Q771.1 95.5 771.2 88.7M771.2 88.7Q769.9 85.0 769.6 81.4M771.2 88.7Q772.9 86.0 772.0 80.9M772.3 99.2Q773.0 95.3 772.6 89.8M772.6 89.8Q771.4 85.6 770.8 83.0M772.6 89.8Q773.5 85.2 773.9 82.9M773.1 97.6Q771.6 90.8 767.7 87.8M767.7 87.8Q765.9 84.0 761.9 82.3M767.7 87.8Q763.6 86.0 762.2 82.4M773.1 97.6Q770.8 93.3 768.6 87.1M768.6 87.1Q767.1 83.2 765.7 80.9M768.6 87.1Q766.1 82.5 765.7 80.2"/><path stroke-width="0.5" d="M747.2 103.5Q742.9 97.5 744.0 88.4M747.2 103.5Q745.5 96.1 745.6 87.1M747.2 103.5Q743.2 94.6 742.8 85.7M747.6 101.8Q750.5 90.6 749.1 84.7M747.6 101.8Q748.9 93.5 743.9 83.5M776.9 97.7Q769.9 91.5 767.6 85.7M776.9 97.7Q778.6 89.7 776.8 78.3M776.9 97.7Q774.7 89.9 773.1 79.4M797.5 96.1Q803.8 85.7 809.2 79.7M797.5 96.1Q804.0 85.2 813.5 78.7M767.3 105.6Q761.2 98.1 756.7 89.6M767.3 105.6Q761.7 101.9 754.4 93.6M785.6 103.3Q783.6 94.1 778.6 87.5M785.6 103.3Q789.5 94.7 789.1 86.1M785.6 103.3Q787.5 93.0 790.6 88.1M779.7 95.6Q777.4 84.9 779.3 76.9M779.7 95.6Q776.6 88.1 779.3 77.4M819.1 96.2Q820.3 86.7 825.2 78.7M819.1 96.2Q820.2 87.1 826.4 82.9M813.5 88.6Q808.7 77.2 810.3 69.5M813.5 88.6Q812.7 76.6 815.2 70.2M814.9 78.2Q817.2 68.3 820.9 55.1M814.9 78.2Q819.1 66.7 823.2 50.8M814.9 78.2Q826.0 68.0 830.7 54.6M802.0 81.1Q799.5 70.1 794.0 61.3M802.0 81.1Q805.7 70.8 799.8 54.6M821.8 97.8Q817.2 92.7 815.6 82.9M821.8 97.8Q816.4 91.8 813.6 82.8M828.4 95.0Q822.5 83.2 822.5 76.9M828.4 95.0Q827.4 87.2 824.7 80.0M828.4 95.0Q827.9 84.5 826.1 74.3M820.4 101.3Q818.2 91.3 812.6 87.0M820.4 101.3Q820.6 94.0 820.4 85.9M817.3 99.0Q812.8 90.8 810.6 79.4M817.3 99.0Q815.3 88.0 813.7 79.2M828.0 96.9Q826.6 89.1 820.0 78.6M828.0 96.9Q822.7 85.8 821.9 76.6M733.2 109.2Q730.3 99.4 730.3 92.5M733.2 109.2Q734.4 103.7 735.4 95.4M723.6 110.0Q723.2 104.3 719.8 92.1M723.6 110.0Q726.0 103.0 723.3 94.0M769.6 110.9Q762.0 103.4 757.8 99.9M769.6 110.9Q763.3 105.9 758.3 100.3M777.7 112.4Q777.2 104.7 772.3 99.2M777.7 112.4Q778.2 105.7 773.1 97.6"/><path stroke-width="1.0" d="M753.4 128.6Q747.4 115.8 747.2 103.5M753.4 128.6Q751.7 116.0 747.6 101.8M779.6 122.7Q780.9 113.6 776.9 97.7M779.6 122.7Q792.4 105.6 797.5 96.1M782.5 126.2Q774.8 117.2 767.3 105.6M782.5 126.2Q783.5 118.3 785.6 103.3M782.5 126.2Q779.5 111.3 779.7 95.6M809.6 121.0Q814.5 105.3 819.1 96.2M809.6 121.0Q811.8 102.5 813.5 88.6M810.3 116.0Q809.6 91.5 814.9 78.2M810.3 116.0Q801.8 96.6 802.0 81.1M828.6 122.2Q824.1 112.2 821.8 97.8M828.6 122.2Q831.8 107.7 828.4 95.0M828.4 126.4Q821.1 118.3 820.4 101.3M828.4 126.4Q822.9 111.1 817.3 99.0M828.4 126.4Q833.2 106.5 828.0 96.9M733.2 133.2Q736.3 121.9 733.2 109.2M733.2 133.2Q727.7 120.0 723.6 110.0M783.7 132.2Q780.5 124.0 769.6 110.9M783.7 132.2Q780.5 119.7 777.7 112.4"/><path stroke-width="1.5" d="M760.0 166.0Q757.5 143.1 753.4 128.6M772.0 166.0Q777.7 139.4 779.6 122.7M786.0 166.0Q787.5 146.0 782.5 126.2M800.0 166.0Q811.2 138.3 809.6 121.0M812.0 166.0Q815.1 146.2 810.3 116.0M824.0 166.0Q828.3 145.6 828.6 122.2M834.0 166.0Q835.4 143.1 828.4 126.4M742.0 166.0Q733.3 151.0 733.2 133.2M796.0 166.0Q791.2 142.9 783.7 132.2"/></g><g fill="none" stroke="#5a4434" stroke-linecap="round" opacity="0.65"><path stroke-width="0.45" d="M751.7 61.0Q746.4 46.7 746.4 38.4M746.4 38.4Q743.7 29.7 744.6 23.3M746.4 38.4Q747.2 32.2 745.2 26.9M751.7 61.0Q749.2 46.6 741.6 39.2M741.6 39.2Q737.6 34.4 736.9 28.1M741.6 39.2Q735.8 31.5 735.5 24.6M741.6 39.2Q742.4 31.9 742.4 25.3M751.7 61.0Q749.5 50.7 740.4 40.4M740.4 40.4Q732.8 36.3 729.8 32.1M740.4 40.4Q737.1 34.4 730.6 28.9M761.6 62.4Q760.5 54.6 756.8 44.1M756.8 44.1Q754.7 37.3 750.4 34.0M756.8 44.1Q756.2 40.1 755.7 34.5M756.8 44.1Q756.6 36.2 755.1 31.6M761.6 62.4Q765.0 53.8 763.1 46.2M763.1 46.2Q760.6 42.2 760.9 36.9M763.1 46.2Q764.0 41.9 765.7 35.5M783.2 48.6Q781.8 31.7 778.6 20.8M778.6 20.8Q774.6 12.4 772.9 7.8M778.6 20.8Q776.2 11.0 775.3 6.3M778.6 20.8Q780.4 11.6 780.5 3.2M783.2 48.6Q780.2 35.4 779.2 27.6M779.2 27.6Q778.4 20.3 773.4 16.8M779.2 27.6Q778.9 21.8 780.2 15.9M779.2 27.6Q779.1 19.3 777.2 13.4M794.9 58.0Q792.7 48.0 788.6 40.3M788.6 40.3Q785.0 35.8 782.6 31.7M788.6 40.3Q787.1 34.2 785.1 29.4M794.9 58.0Q794.1 52.4 794.2 40.6M794.2 40.6Q790.9 37.6 789.6 31.5M794.2 40.6Q796.2 34.8 796.3 29.7M822.9 40.2Q815.9 25.5 815.1 14.8M815.1 14.8Q814.9 7.5 810.7 1.4M815.1 14.8Q814.1 6.2 807.8 -0.4M822.9 40.2Q826.9 24.0 824.3 14.1M824.3 14.1Q825.1 4.4 820.6 -3.0M824.3 14.1Q823.1 7.0 826.2 -1.2M829.4 32.9Q833.2 21.9 832.1 8.3M832.1 8.3Q833.0 0.2 836.3 -6.7M832.1 8.3Q831.2 1.5 833.4 -4.4M829.4 32.9Q827.5 18.1 830.1 7.1M830.1 7.1Q828.2 1.1 825.2 -7.7M830.1 7.1Q832.7 -1.0 835.9 -6.9M834.3 39.4Q829.7 25.1 831.3 13.7M831.3 13.7Q830.3 6.9 825.5 0.3M831.3 13.7Q833.1 8.1 832.1 -0.4M834.3 39.4Q834.6 29.7 839.8 17.3M839.8 17.3Q842.3 12.1 844.4 6.6M839.8 17.3Q840.4 11.5 843.6 3.8M858.0 50.2Q856.6 35.1 860.4 26.5M860.4 26.5Q861.2 20.6 862.2 13.9M860.4 26.5Q862.3 21.1 862.0 14.9M858.0 50.2Q862.7 39.9 870.5 30.6M870.5 30.6Q873.8 24.1 872.8 17.9M870.5 30.6Q876.0 22.8 878.8 18.2M870.5 30.6Q877.4 27.4 881.3 20.4M863.2 54.0Q868.7 43.1 875.0 33.5M875.0 33.5Q879.8 26.5 880.1 20.9M875.0 33.5Q876.4 25.6 880.9 20.6M863.2 54.0Q870.8 48.6 876.3 40.5M876.3 40.5Q879.6 34.5 883.8 31.8M876.3 40.5Q879.7 36.6 885.8 35.4M876.3 40.5Q880.7 35.9 883.3 34.1M721.0 79.0Q719.3 72.2 712.9 65.2M712.9 65.2Q711.6 62.0 708.3 56.9M712.9 65.2Q709.5 61.8 709.2 55.3M721.0 79.0Q713.9 72.9 712.0 65.0M712.0 65.0Q708.0 59.2 704.5 57.2M712.0 65.0Q710.8 61.0 709.8 56.0M723.1 69.7Q719.2 60.3 717.9 51.9M717.9 51.9Q713.6 49.1 712.0 43.3M717.9 51.9Q716.8 48.1 716.4 42.1M723.1 69.7Q719.7 56.4 719.2 48.0M719.2 48.0Q714.9 42.5 714.0 37.3M719.2 48.0Q721.8 40.2 720.0 35.9M719.2 48.0Q718.1 39.8 720.5 34.9"/><path stroke-width="0.5" d="M767.5 94.4Q765.0 73.6 751.7 61.0M767.5 94.4Q766.7 82.4 761.6 62.4M795.2 88.9Q789.7 67.0 783.2 48.6M795.2 88.9Q793.1 68.6 794.9 58.0M822.4 80.0Q827.8 60.1 822.9 40.2M822.4 80.0Q832.1 49.1 829.4 32.9M822.4 80.0Q824.7 63.1 834.3 39.4M844.9 86.6Q852.6 67.9 858.0 50.2M844.9 86.6Q858.8 67.7 863.2 54.0M734.6 102.3Q724.1 89.8 721.0 79.0M734.6 102.3Q729.4 91.7 723.1 69.7"/><path stroke-width="1.0" d="M790.0 150.0Q776.1 113.1 767.5 94.4M806.0 150.0Q800.0 115.8 795.2 88.9M820.0 150.0Q830.9 126.6 822.4 80.0M836.0 150.0Q830.4 127.6 844.9 86.6M760.0 150.0Q744.1 129.6 734.6 102.3"/></g><g fill="none" stroke="#5c463e" stroke-linecap="round" opacity="0.6"><path stroke-width="0.45" d="M1003.4 103.1Q1001.4 100.0 1000.4 96.1M1000.4 96.1Q999.3 94.3 998.8 90.9M1000.4 96.1Q999.2 94.3 999.7 90.5M1000.4 96.1Q1000.1 93.2 998.3 91.6M1003.4 103.1Q1003.2 99.4 1000.9 96.9M1000.9 96.9Q999.8 93.9 1000.1 91.9M1000.9 96.9Q999.9 95.4 999.0 93.4M1003.4 103.1Q1002.9 99.3 1001.0 97.1M1001.0 97.1Q1000.1 95.9 998.8 93.7M1001.0 97.1Q1000.8 94.9 999.5 93.3M1006.6 103.2Q1005.0 101.6 1003.8 97.8M1003.8 97.8Q1002.8 97.3 1000.7 95.4M1003.8 97.8Q1004.2 95.6 1003.8 93.8M1006.6 103.2Q1004.6 101.0 1004.4 96.6M1004.4 96.6Q1003.7 94.1 1001.1 92.4M1004.4 96.6Q1002.3 94.1 1001.9 91.9M1022.9 96.6Q1020.3 93.8 1018.1 90.0M1018.1 90.0Q1016.7 87.8 1016.8 85.1M1018.1 90.0Q1015.9 89.1 1014.5 86.4M1018.1 90.0Q1015.9 89.0 1015.0 86.2M1022.9 96.6Q1022.2 92.3 1023.1 86.4M1023.1 86.4Q1024.2 84.3 1023.8 79.9M1023.1 86.4Q1025.1 84.2 1026.8 80.2M1024.2 99.6Q1023.0 96.4 1020.6 93.9M1020.6 93.9Q1019.4 93.2 1016.8 91.4M1020.6 93.9Q1021.0 92.1 1020.5 89.0M1020.6 93.9Q1020.5 91.5 1019.4 89.9M1024.2 99.6Q1024.6 95.5 1023.4 93.3M1023.4 93.3Q1022.3 91.1 1022.2 89.2M1023.4 93.3Q1024.2 91.4 1023.7 88.9M1035.0 94.6Q1031.4 90.7 1029.4 86.3M1029.4 86.3Q1026.9 85.3 1024.3 83.7M1029.4 86.3Q1027.2 83.6 1027.2 80.5M1035.0 94.6Q1035.9 88.6 1034.5 84.3M1034.5 84.3Q1032.4 82.7 1030.9 79.0M1034.5 84.3Q1033.6 81.7 1033.5 77.6M1034.2 94.3Q1032.9 89.1 1034.6 84.9M1034.6 84.9Q1035.4 82.4 1035.4 79.6M1034.6 84.9Q1035.4 82.8 1034.5 78.6M1034.6 84.9Q1035.5 81.5 1035.9 77.9M1034.2 94.3Q1032.7 91.5 1033.6 86.2M1033.6 86.2Q1032.6 83.3 1030.9 81.7M1033.6 86.2Q1034.0 82.8 1033.9 80.0M1034.2 94.3Q1036.9 90.9 1037.3 87.1M1037.3 87.1Q1036.7 83.9 1037.3 81.7M1037.3 87.1Q1038.2 84.0 1038.0 82.5M1037.3 87.1Q1039.5 84.9 1040.2 82.7M1049.4 99.1Q1050.2 96.1 1049.1 90.8M1049.1 90.8Q1048.5 87.8 1047.2 85.6M1049.1 90.8Q1049.1 87.5 1049.4 84.5M1049.4 99.1Q1049.7 93.9 1049.8 91.3M1049.8 91.3Q1050.1 88.7 1050.1 85.5M1049.8 91.3Q1049.9 87.9 1049.8 85.7M1049.8 91.3Q1051.0 88.4 1051.8 87.1M1046.9 96.9Q1045.1 94.2 1042.8 89.3M1042.8 89.3Q1040.9 87.0 1040.0 83.8M1042.8 89.3Q1041.3 87.0 1040.0 83.9M1046.9 96.9Q1046.4 92.3 1043.0 88.4M1043.0 88.4Q1041.2 86.5 1040.9 83.4M1043.0 88.4Q1042.5 85.3 1043.2 81.6M1051.0 98.4Q1047.6 94.2 1045.4 92.6M1045.4 92.6Q1044.4 89.7 1042.1 88.5M1045.4 92.6Q1043.3 91.1 1042.4 87.8M1051.0 98.4Q1048.6 95.5 1045.4 92.3M1045.4 92.3Q1043.0 90.3 1039.9 89.3M1045.4 92.3Q1044.4 89.8 1043.2 87.9M1063.0 100.7Q1064.8 98.7 1067.4 94.2M1067.4 94.2Q1068.4 91.7 1069.8 89.7M1067.4 94.2Q1069.4 91.9 1069.8 89.4M1063.0 100.7Q1064.4 96.9 1065.5 94.7M1065.5 94.7Q1066.5 92.6 1066.9 90.8M1065.5 94.7Q1067.5 92.6 1068.3 91.6M1109.1 96.0Q1109.3 91.9 1107.5 87.9M1107.5 87.9Q1108.2 84.4 1107.2 82.3M1107.5 87.9Q1107.5 84.0 1106.7 81.7M1109.1 96.0Q1109.3 90.4 1108.9 86.9M1108.9 86.9Q1107.9 85.5 1105.2 81.9M1108.9 86.9Q1108.9 83.8 1110.9 80.3M1108.9 86.9Q1108.9 84.0 1110.0 81.8M1109.1 96.0Q1109.1 92.2 1108.3 86.8M1108.3 86.8Q1106.7 84.3 1107.0 81.0M1108.3 86.8Q1107.5 83.3 1106.7 80.8M1115.0 97.3Q1119.3 94.7 1121.3 91.4M1121.3 91.4Q1123.4 89.5 1124.1 86.4M1121.3 91.4Q1122.1 87.5 1124.1 85.8M1115.0 97.3Q1118.9 92.9 1120.7 91.2M1120.7 91.2Q1122.3 90.2 1125.2 89.0M1120.7 91.2Q1122.4 90.0 1124.4 87.6M1115.0 97.3Q1118.6 95.5 1121.4 91.8M1121.4 91.8Q1123.0 89.0 1123.6 87.6M1121.4 91.8Q1123.4 89.5 1125.4 87.2M1109.6 94.9Q1107.4 90.9 1107.1 87.9M1107.1 87.9Q1106.4 86.3 1104.9 84.3M1107.1 87.9Q1108.2 85.6 1107.7 83.3M1107.1 87.9Q1107.3 85.8 1108.1 83.7M1109.6 94.9Q1111.1 89.3 1113.1 86.3M1113.1 86.3Q1115.3 82.9 1115.7 80.1M1113.1 86.3Q1114.0 82.9 1114.5 80.2M1128.1 91.6Q1131.2 88.5 1131.4 82.0M1131.4 82.0Q1131.5 77.5 1132.8 74.8M1131.4 82.0Q1132.6 79.0 1132.1 75.3M1128.1 91.6Q1126.4 85.5 1127.0 82.6M1127.0 82.6Q1126.8 79.1 1124.9 77.0M1127.0 82.6Q1125.8 80.8 1126.0 77.3M1128.6 92.2Q1130.9 85.9 1130.5 82.7M1130.5 82.7Q1131.0 80.3 1133.0 77.8M1130.5 82.7Q1131.6 80.6 1131.5 77.1M1128.6 92.2Q1130.1 88.1 1134.3 85.8M1134.3 85.8Q1136.0 84.3 1138.4 81.8M1134.3 85.8Q1137.0 84.0 1139.3 84.1M1134.2 90.1Q1133.0 84.5 1133.1 81.8M1133.1 81.8Q1131.5 78.4 1131.1 76.8M1133.1 81.8Q1133.2 79.7 1133.1 76.1M1134.2 90.1Q1132.9 86.4 1132.3 80.9M1132.3 80.9Q1131.6 78.8 1130.1 74.5M1132.3 80.9Q1134.5 76.8 1134.4 74.6M1132.3 80.9Q1131.5 78.1 1132.2 75.5M1144.1 89.9Q1147.6 85.5 1149.9 83.0M1149.9 83.0Q1151.9 80.2 1154.0 78.8M1149.9 83.0Q1153.6 80.6 1155.2 79.6M1144.1 89.9Q1147.7 84.1 1149.4 80.0M1149.4 80.0Q1150.5 77.6 1152.3 73.1M1149.4 80.0Q1150.7 77.8 1151.3 73.7M1137.0 94.4Q1135.6 90.5 1131.6 86.0M1131.6 86.0Q1129.6 85.2 1126.2 82.6M1131.6 86.0Q1129.6 83.9 1128.2 79.6M1131.6 86.0Q1130.7 82.1 1127.7 79.9M1137.0 94.4Q1136.0 88.0 1134.7 84.5M1134.7 84.5Q1134.4 82.1 1135.5 78.6M1134.7 84.5Q1134.6 81.6 1134.8 78.3M1134.7 84.5Q1134.2 80.3 1133.5 78.1M1145.1 91.8Q1144.3 86.5 1141.9 82.9M1141.9 82.9Q1142.6 78.7 1141.6 76.0M1141.9 82.9Q1140.9 80.6 1140.4 76.3M1141.9 82.9Q1141.1 79.1 1141.9 76.9M1145.1 91.8Q1145.9 86.6 1148.9 81.8M1148.9 81.8Q1149.4 79.7 1148.9 75.5M1148.9 81.8Q1149.3 78.6 1150.8 75.0M1088.4 101.0Q1088.8 96.9 1091.0 93.3M1091.0 93.3Q1092.6 90.4 1093.4 89.1M1091.0 93.3Q1094.0 90.6 1095.6 89.3M1088.4 101.0Q1091.1 96.5 1091.8 94.3M1091.8 94.3Q1092.1 92.6 1091.6 89.8M1091.8 94.3Q1094.0 93.1 1096.6 91.4M1090.6 102.4Q1090.4 98.5 1090.9 95.2M1090.9 95.2Q1090.1 92.8 1089.1 91.1M1090.9 95.2Q1090.7 92.6 1090.2 90.2M1090.6 102.4Q1092.2 100.7 1094.8 96.9M1094.8 96.9Q1096.4 95.0 1097.0 93.1M1094.8 96.9Q1095.8 94.8 1097.2 92.6M1094.8 96.9Q1096.5 96.0 1099.3 94.5"/><path stroke-width="0.5" d="M1010.6 112.1Q1008.3 106.3 1003.4 103.1M1010.6 112.1Q1008.4 106.3 1006.6 103.2M1025.6 110.1Q1023.1 105.3 1022.9 96.6M1025.6 110.1Q1025.9 104.3 1024.2 99.6M1035.3 108.0Q1034.6 103.3 1035.0 94.6M1035.3 108.0Q1034.7 100.8 1034.2 94.3M1048.6 110.0Q1050.3 103.3 1049.4 99.1M1048.6 110.0Q1045.6 101.7 1046.9 96.9M1058.1 110.1Q1056.6 103.5 1051.0 98.4M1058.1 110.1Q1060.4 106.2 1063.0 100.7M1110.0 108.0Q1108.0 100.7 1109.1 96.0M1110.0 108.0Q1113.8 103.8 1115.0 97.3M1110.0 108.0Q1111.7 101.2 1109.6 94.9M1126.3 106.1Q1125.1 100.2 1128.1 91.6M1126.3 106.1Q1126.6 100.9 1128.6 92.2M1137.2 104.0Q1134.2 97.6 1134.2 90.1M1137.2 104.0Q1142.8 98.1 1144.1 89.9M1144.2 106.3Q1142.7 102.8 1137.0 94.4M1144.2 106.3Q1144.9 96.9 1145.1 91.8M1086.6 112.0Q1087.2 108.5 1088.4 101.0M1086.6 112.0Q1086.8 105.6 1090.6 102.4"/><path stroke-width="1.0" d="M1012.0 128.0Q1010.8 118.1 1010.6 112.1M1024.0 128.0Q1025.7 118.3 1025.6 110.1M1036.0 128.0Q1036.4 120.7 1035.3 108.0M1048.0 128.0Q1048.0 116.5 1048.6 110.0M1060.0 128.0Q1057.2 117.9 1058.1 110.1M1110.0 128.0Q1112.6 114.8 1110.0 108.0M1124.0 128.0Q1123.1 119.6 1126.3 106.1M1138.0 128.0Q1141.2 118.1 1137.2 104.0M1148.0 128.0Q1147.2 116.8 1144.2 106.3M1086.0 128.0Q1088.6 122.2 1086.6 112.0"/></g>
 <path d="M652 64 C654 74 654 84 650 96" fill="none" stroke="#d8d8d0" stroke-width="2" opacity="0.8"/>
 <path d="M648 130 C656 150 672 150 690 160 M652 152 C660 170 650 190 648 200" fill="none" stroke="#9a9478" stroke-width="2.2" opacity="0.8"/>
 <!-- lamp post -->
 <path d="M841 23 L845.5 23 L851 190 L844 190Z" fill="#c3c8ce"/>
 <path d="M844.5 120 L850 120 L851 190 L844.5 190Z" fill="#d0d5da" opacity="0.8"/>
 <!-- glow & flare -->
 <rect x="700" y="23" width="360" height="230" fill="url(#glow)"/>
 <rect x="810" y="80" width="140" height="120" fill="url(#flare)"/>
 <!-- kerb line -->
 <path d="M851 238 L1154 292 L1154 303 L849 243Z" fill="#dcdcda"/>
 <path d="M853 236.5 L1154 289 L1154 292 L851 238Z" fill="#606264" opacity="0.75"/>
 <path d="M849 243 L1154 303 L1154 309 L795 309 C806 288 826 262 840 248Z" fill="#8c8e91" opacity="0.4"/>
 <!-- kerb stone right -->
 <path d="M1110 222 L1154 230 L1154 236 L1112 228Z" fill="#c9cacb"/>
 <!-- sign posts -->
 <rect x="1072.5" y="99" width="5" height="80" fill="#dfe6ee"/>
 <rect x="1094.5" y="99" width="5" height="78" fill="#dfe6ee"/>
 <rect x="1077.5" y="101" width="17" height="23" fill="#5d8a3c"/>
 <path d="M1098.5 108 L1104.5 107 L1121 224 L1113 225Z" fill="#f2581c"/>
 <!-- distant person -->
 <path d="M971 106 C971 103 975 103 975 106 L976.5 118 L969.5 118Z" fill="#3d3d40"/>
 <rect x="971.5" y="116" width="3" height="6" fill="#3d3d40"/>
 <!-- bin -->
 <rect x="712.5" y="286" width="20" height="20" fill="#5da266"/>
 <path d="M678.6 191 L751.6 187.5 L751.6 288 L681 289.5Z" fill="#36a64c"/>
 <path d="M678.6 191 L712 189.3 L712 219.5 L679 220Z" fill="#2fa7a0"/>
 <path d="M712 189.3 L751.6 187.5 L751.6 217.5 L712 219.5Z" fill="#3fae57"/>
 <path d="M726.7 194.5 L743 193.6 L743 210 L726.7 211Z" fill="#1d4a28"/>
 <path d="M679 219.5 L751.6 216.5 L751.6 220.5 L679 223.5Z" fill="#1f5a48"/>
 <path d="M751.6 204 L757 208 L752 216Z" fill="#26302a"/>
 <!-- boy -->
 <g>
  <!-- front wheel & frame -->
  <path d="M890 276 C892 264 908 264 910 276 L910 309 L889 309Z" fill="#26292e"/>
  <path d="M895 284 C896 276 904 276 905 284 L905 309 L895 309Z" fill="#7f868c"/>
  <path d="M884 262 L913 256 L915 266 L886 272Z" fill="#d5dadd"/>
  <path d="M888 228 L906 226 L912 262 L900 288 L893 288 L886 262Z" fill="#1fa8c8"/>
  <path d="M893 232 L902 231 L904 252 L895 254Z" fill="#36c6e0"/>
  <path d="M906 250 L922 268 L918 272 L903 256Z" fill="#1a95b4"/>
  <rect x="917" y="268" width="9" height="4" fill="#2a2c30"/>
  <rect x="875" y="294" width="8" height="4" fill="#c96a2a"/>
  <!-- legs -->
  <path d="M908 222 L932 220 L936 240 L934 258 L925 258 L918 236Z" fill="#4a5a70"/>
  <path d="M884 224 L894 224 L892 262 L883 270Z" fill="#3e4c60"/>
  <!-- boots -->
  <path d="M926 255 L940 253 L944.5 276 C941 285 931 284 929 278Z" fill="#1f6eb0"/>
  <path d="M871 270 L883 266 L885 290 L869 292Z" fill="#1f64a4"/>
  <!-- jacket -->
  <path d="M878 160 C884 152 896 150 904 156 L908 214 L880 216Z" fill="#1a7fba"/>
  <path d="M900 156 C910 150 922 152 927 160 L929 212 L904 216Z" fill="#1b88c4"/>
  <path d="M878 160 C868 172 856 196 850 210 L862 216 C868 204 876 192 882 184Z" fill="#1d86c6"/>
  <path d="M927 160 C938 170 948 192 953 205 L941 211 C936 198 930 188 924 180Z" fill="#1e8acb"/>
  <path d="M878 160 C884 152 892 151 898 154 L892 170 C886 166 880 166 874 168Z" fill="#3a3f98" opacity="0.85"/>
  <path d="M888 176 L891 176 L888 206 L885 206Z" fill="#e8e0ea" opacity="0.8"/>
  <path d="M917 176 L920 176 L922 204 L919 204Z" fill="#e8e0ea" opacity="0.7"/>
  <path d="M880 208 L928 206 L929 214 L880 217Z" fill="#176fa6"/>
  <!-- handlebar & hands -->
  <path d="M856 215.5 L936 212 L936 216 L856 220Z" fill="#23252a"/>
  <path d="M866 214 L874 214 L874 222 L866 222Z" fill="#3a3c42"/>
  <ellipse cx="850.5" cy="216.5" rx="5.5" ry="5" fill="#e9ab98"/>
  <ellipse cx="942.5" cy="211.5" rx="5.5" ry="5.2" fill="#e9ab98"/>
  <path d="M852 224 L872 220 L872 222 L852 227Z" fill="#e2e6e9"/>
  <path d="M914 220 L940 222 L940 224 L914 222.5Z" fill="#e2e6e9"/>
  <path d="M884 218 L898 217 L898 224 L884 225Z" fill="#2a72c0"/>
  <path d="M898 217 L910 216.5 L910 223 L898 224Z" fill="#8a3a5a"/>
 </g>
 <use href="#ele" x="886.3" y="112.2" width="46.8" height="44.6"/>
</g>
</svg>
<div class="a" style="left:616px;top:319px;width:455px;height:3px;background:#3a414c;border-radius:1.5px"></div><div class="a" style="left:610.2px;top:314.8px;width:11px;height:11px;background:#141a22;border-radius:50%"></div><div class="a" style="left:611.2px;top:315.8px;width:9px;height:9px;background:#e1e4e9;border-radius:50%"></div><div class="a" style="left:614.2px;top:318.8px;width:3px;height:3px;background:#cfd3d9;border-radius:50%"></div><span class="t" style="left:1082.10px;top:314.00px;font-size:11px;color:#5b636e;letter-spacing:1.112px;">{</span><span class="t" style="left:1104.60px;top:314.00px;font-size:11px;color:#5b636e;letter-spacing:1.112px;">}</span><div class="a" style="left:1127.5px;top:311.7px;width:59px;height:16.6px;background:#131921;border-radius:2px"></div><span class="t" style="left:1133.60px;top:314.40px;font-size:9px;color:#b9bec6;letter-spacing:-0.041px;">00:00:00:00</span><svg style="left:616px;top:338px" width="8" height="9" viewBox="0 0 8 9"><path d="M5 0.2 V8.8 L0 4.5Z" fill="#7b838d"/><rect x="6" y="0.3" width="1.4" height="8.4" fill="#7b838d"/></svg><svg style="left:643.7px;top:338px" width="9" height="9" viewBox="0 0 9 9"><rect x="0" y="0.3" width="1.6" height="8.4" fill="#ffffff"/><path d="M3 0.2 V8.8 L8.3 4.5Z" fill="#ffffff"/></svg><svg style="left:672px;top:338px" width="7" height="9" viewBox="0 0 7 9"><path d="M0 0 V9 L7 4.5Z" fill="#ffffff"/></svg><div class="a" style="left:699px;top:338.7px;width:7.3px;height:7.3px;background:#ffffff;"></div><div class="a" style="left:1017.5px;top:333px;width:58.5px;height:18px;background:#131921;border-radius:2px"></div><span class="t" style="left:1023.40px;top:336.60px;font-size:9.5px;color:#c5cad1;letter-spacing:-0.140px;">1/2</span><svg style="left:1068px;top:340.5px" width="6" height="4" viewBox="0 0 6 4"><path d="M0.3 0.4 L3 3.2 L5.7 0.4" fill="none" stroke="#aab0b8" stroke-width="1.1"/></svg><svg style="left:1090.8px;top:336.8px" width="11.6" height="10.7" viewBox="0 0 13 12"><path d="M8 8.3 H0.6 V0.6 H11.4 V5.5" fill="none" stroke="#e9ecf0" stroke-width="1.2"/><path d="M5.5 8.5 V10.6 M3 10.8 H8" stroke="#e9ecf0" stroke-width="1.1" fill="none"/><path d="M8.7 7.5 H12.7 L10.7 10.2Z" fill="#ffffff"/></svg><svg style="left:1118.8px;top:336.8px" width="10.8" height="9.9" viewBox="0 0 12 11"><path d="M0.6 2.4 H3 L4 0.6 H8 L9 2.4 H11.4 V10.4 H0.6Z" fill="none" stroke="#e9ecf0" stroke-width="1.1"/><circle cx="6" cy="6.2" r="2.5" fill="none" stroke="#e9ecf0" stroke-width="1.1"/></svg><svg style="left:1146.8px;top:337.2px" width="10.8" height="9.2" viewBox="0 0 12 10"><path d="M0.6 3.2 H2.8 L6 0.7 V9.3 L2.8 6.8 H0.6Z" fill="none" stroke="#e9ecf0" stroke-width="1.1" stroke-linejoin="round"/><path d="M7.8 2.8 C9 4 9 6 7.8 7.2 M9.3 1.2 C11.4 3.4 11.4 6.6 9.3 8.8" fill="none" stroke="#e9ecf0" stroke-width="1.1"/></svg><svg style="left:1175px;top:337.8px" width="9" height="9" viewBox="0 0 10 10"><path d="M1.5 1.5 L4.2 4.2 M5.8 5.8 L8.5 8.5" stroke="#e9ecf0" stroke-width="1.1"/><path d="M0.3 0.3 H3.6 L0.3 3.6Z M9.7 9.7 H6.4 L9.7 6.4Z" fill="#e9ecf0"/></svg>
<div class="a" style="left:0px;top:353px;width:1200px;height:51px;background:#1f252e;"></div><div class="a" style="left:0px;top:352.5px;width:1200px;height:1.2px;background:#0f1319;"></div><svg style="left:16px;top:363px" width="11" height="10" viewBox="0 0 11 10"><path d="M4.6 0.6 L0.6 4 L4.6 7.4 V5.3 C7 5.2 8.6 6.3 9.6 9 C10 5.4 8.2 2.9 4.6 2.7Z" fill="#eef0f3"/></svg><svg style="left:43px;top:363px" width="11" height="10" viewBox="0 0 11 10"><path d="M6.4 0.6 L10.4 4 L6.4 7.4 V5.3 C4 5.2 2.4 6.3 1.4 9 C1 5.4 2.8 2.9 6.4 2.7Z" fill="#6b737d"/></svg><svg style="left:71px;top:362.5px" width="10" height="11" viewBox="0 0 10 11"><path d="M0.5 2.4 H9.5 M3.3 2.2 V0.7 H6.7 V2.2" stroke="#eef0f3" stroke-width="1.2" fill="none"/><path d="M1.6 3.4 H8.4 V10.4 H1.6Z" fill="none" stroke="#eef0f3" stroke-width="1.2"/><path d="M4 5 V8.8 M6 5 V8.8" stroke="#eef0f3" stroke-width="1"/></svg><svg style="left:98px;top:362.5px" width="10" height="11" viewBox="0 0 10 11"><path d="M2.2 0.5 L7.2 7.6 M7.8 0.5 L2.8 7.6" stroke="#6b737d" stroke-width="1.1" fill="none"/><circle cx="2.3" cy="8.6" r="1.7" fill="none" stroke="#6b737d" stroke-width="1.1"/><circle cx="7.7" cy="8.6" r="1.7" fill="none" stroke="#6b737d" stroke-width="1.1"/></svg><svg style="left:125.5px;top:363px" width="11" height="11" viewBox="0 0 11 11"><path d="M2.8 0.3 V8.2 H10.7 M0.3 2.8 H8.2 V10.7" stroke="#6b737d" stroke-width="1.2" fill="none"/></svg><svg style="left:152.5px;top:363px" width="11" height="10" viewBox="0 0 11 10"><path d="M1.6 9.2 A4.9 4.9 0 1 1 9.4 9.2" stroke="#6b737d" stroke-width="1.2" fill="none"/><path d="M5.3 6.6 L7.8 3.4" stroke="#6b737d" stroke-width="1.2"/><path d="M2.6 9.3 H8.4" stroke="#6b737d" stroke-width="1"/></svg><svg style="left:180.5px;top:363px" width="11" height="11" viewBox="0 0 11 11"><path d="M5.5 0.6 C8.4 0.6 10.4 2.6 10.4 5 C10.4 6.8 9.2 7.4 8 7.4 H6.8 C6 7.4 5.8 8.2 6.2 8.8 C6.7 9.6 6.2 10.4 5.3 10.4 C2.6 10.4 0.6 8.2 0.6 5.5 C0.6 2.8 2.8 0.6 5.5 0.6Z" fill="none" stroke="#eef0f3" stroke-width="1.2"/><circle cx="3" cy="5.6" r="0.9" fill="#eef0f3"/><circle cx="4.3" cy="3.2" r="0.9" fill="#eef0f3"/><circle cx="7" cy="3" r="0.9" fill="#eef0f3"/></svg><svg style="left:207.5px;top:363px" width="11" height="11" viewBox="0 0 11 11"><path d="M0 0.6 H11" stroke="#eef0f3" stroke-width="1.2"/><path d="M1.2 1 V7.4 H9.8 V1" fill="none" stroke="#eef0f3" stroke-width="1.1"/><circle cx="5.5" cy="3.4" r="1.1" fill="#eef0f3"/><path d="M3.4 7 C3.4 4.6 7.6 4.6 7.6 7Z" fill="#eef0f3"/><path d="M5.5 7.6 V10 M3.4 10.4 H7.6" stroke="#eef0f3" stroke-width="1"/></svg><svg style="left:235px;top:363px" width="11" height="11" viewBox="0 0 11 11"><path d="M0.6 3.2 V0.6 H3.2 M7.8 0.6 H10.4 V3.2 M10.4 7.8 V10.4 H7.8 M3.2 10.4 H0.6 V7.8" fill="none" stroke="#eef0f3" stroke-width="1.2"/><circle cx="5.5" cy="5.5" r="1.2" fill="#eef0f3"/></svg><svg style="left:262px;top:362.5px" width="12" height="12" viewBox="0 0 12 12"><path d="M6 0.8 L11.2 6 L6 11.2 L0.8 6Z" fill="none" stroke="#6b737d" stroke-width="1.1"/><path d="M6 4.3 V7.7 M4.3 6 H7.7" stroke="#6b737d" stroke-width="0.9"/></svg><svg style="left:291px;top:363.5px" width="10" height="10" viewBox="0 0 10 10"><path d="M0 1.3 H10 M0 5 H10 M0 8.7 H10" stroke="#eef0f3" stroke-width="1.2"/><circle cx="3" cy="1.3" r="1.4" fill="#eef0f3"/><circle cx="7" cy="5" r="1.4" fill="#eef0f3"/><circle cx="4" cy="8.7" r="1.4" fill="#eef0f3"/></svg><svg style="left:317px;top:363px" width="11" height="10" viewBox="0 0 11 10"><path d="M0.5 4 V6.4 M2.2 3 V7.4 M4 1 V9.4 M5.8 2.4 V8 M7.5 0.6 V9.8 M9.2 3 V7.4 M10.6 4.2 V6.2" stroke="#b9bec6" stroke-width="1"/></svg><div class="a" style="left:328.6px;top:360px;width:17px;height:7px;background:#ee8548;border-radius:3.5px"></div><span class="t" style="left:330.6px;top:357.5px;font-size:5px;color:#ffd9bd;font-weight:700;letter-spacing:0.1px;">Beta</span><svg style="left:920.8px;top:363px" width="11.4" height="11.4" viewBox="0 0 11.4 11.4"><circle cx="5.7" cy="5.7" r="5" fill="none" stroke="#eef0f3" stroke-width="1.3" stroke-dasharray="1.3 1.1"/><path d="M4.3 3.2 V8.2 L8.4 5.7Z" fill="#eef0f3"/></svg><svg style="left:949.7px;top:363.2px" width="9" height="10" viewBox="0 0 9 10"><path d="M0.6 0.6 H8.4 V6 C8.4 7.6 6 9 4.5 9.4 C3 9 0.6 7.6 0.6 6Z" fill="none" stroke="#eef0f3" stroke-width="1.2"/></svg><svg style="left:977px;top:362.8px" width="9" height="11" viewBox="0 0 9 11"><rect x="2.9" y="0.5" width="3.2" height="6" rx="1.6" fill="#eef0f3"/><path d="M0.7 4.4 C0.7 9.3 8.3 9.3 8.3 4.4 M4.5 8.3 V10.2 M2.6 10.4 H6.4" fill="none" stroke="#eef0f3" stroke-width="1"/></svg><svg style="left:1004.5px;top:363px" width="9.5" height="11" viewBox="0 0 9.5 11"><path d="M0 0.8 H7.4 M0 3 H6 M0 5.2 H4.4" stroke="#eef0f3" stroke-width="1.1"/><path d="M8.6 0.4 V8.2" stroke="#eef0f3" stroke-width="1.2"/><ellipse cx="6.7" cy="8.4" rx="2.2" ry="1.9" fill="#eef0f3"/></svg><svg style="left:1031px;top:364.3px" width="10.5" height="8" viewBox="0 0 10.5 8"><rect x="0.6" y="0.6" width="9.3" height="6.8" fill="none" stroke="#eef0f3" stroke-width="1.2"/><path d="M2.4 2.4 L4.8 4 L2.4 5.6Z M8.1 2.4 L5.7 4 L8.1 5.6Z" fill="#eef0f3"/></svg><svg style="left:1058px;top:363px" width="11.4" height="11.4" viewBox="0 0 11.4 11.4"><circle cx="5.7" cy="5.7" r="5" fill="none" stroke="#eef0f3" stroke-width="1.1"/><path d="M3.4 5.7 H8" stroke="#eef0f3" stroke-width="1.2"/></svg><div class="a" style="left:1077.5px;top:367.6px;width:42px;height:1.3px;background:#e6e9ed;"></div><div class="a" style="left:1119px;top:367.9px;width:14px;height:0.8px;background:#59616b;"></div><div class="a" style="left:1117px;top:365.5px;width:5.6px;height:5.6px;background:#dfe3e8;border-radius:50%"></div><svg style="left:1140.8px;top:362.7px" width="11.4" height="11.4" viewBox="0 0 11.4 11.4"><circle cx="5.7" cy="5.7" r="5" fill="none" stroke="#eef0f3" stroke-width="1.2"/><path d="M3.6 5.7 H7.8 M5.7 3.6 V7.8" stroke="#eef0f3" stroke-width="1.2"/></svg><div class="a" style="left:1172px;top:359.7px;width:3.8px;height:16.3px;background:#04070c;"></div><div class="a" style="left:1177.6px;top:359.7px;width:3.6px;height:16.3px;background:#04070c;"></div><svg style="left:9px;top:387px" width="11" height="11" viewBox="0 0 11 11"><rect x="0.6" y="0.6" width="7" height="7" fill="none" stroke="#eef0f3" stroke-width="1.1"/><rect x="3.2" y="3.2" width="7" height="7" fill="#1f252e" stroke="#eef0f3" stroke-width="1.1"/><path d="M6.7 5 V8.4 M5 6.7 H8.4" stroke="#eef0f3" stroke-width="1"/></svg><svg style="left:31px;top:387.5px" width="10" height="10" viewBox="0 0 10 10"><path d="M4.2 5.8 L5.8 4.2" stroke="#eef0f3" stroke-width="1.1"/><path d="M5 2.6 L6.3 1.3 A1.7 1.7 0 0 1 8.7 3.7 L7.4 5 M5 7.4 L3.7 8.7 A1.7 1.7 0 0 1 1.3 6.3 L2.6 5" fill="none" stroke="#eef0f3" stroke-width="1.2"/></svg>
<svg style="left:0;top:0" width="1200" height="410"><rect x="76.11" y="399.6" width="1" height="3" fill="#aeb3ba"/><rect x="90.83" y="399.6" width="1" height="3" fill="#aeb3ba"/><rect x="105.54" y="399.6" width="1" height="3" fill="#aeb3ba"/><rect x="120.26" y="399.6" width="1" height="3" fill="#aeb3ba"/><rect x="134.97" y="396" width="1" height="6.6" fill="#c3c7cd"/><rect x="149.68" y="399.6" width="1" height="3" fill="#aeb3ba"/><rect x="164.40" y="399.6" width="1" height="3" fill="#aeb3ba"/><rect x="179.11" y="399.6" width="1" height="3" fill="#aeb3ba"/><rect x="193.83" y="399.6" width="1" height="3" fill="#aeb3ba"/><rect x="208.54" y="396" width="1" height="6.6" fill="#c3c7cd"/><rect x="223.25" y="399.6" width="1" height="3" fill="#aeb3ba"/><rect x="237.97" y="399.6" width="1" height="3" fill="#aeb3ba"/><rect x="252.68" y="399.6" width="1" height="3" fill="#aeb3ba"/><rect x="267.40" y="399.6" width="1" height="3" fill="#aeb3ba"/><rect x="282.11" y="396" width="1" height="6.6" fill="#c3c7cd"/><rect x="296.82" y="399.6" width="1" height="3" fill="#aeb3ba"/><rect x="311.54" y="399.6" width="1" height="3" fill="#aeb3ba"/><rect x="326.25" y="399.6" width="1" height="3" fill="#aeb3ba"/><rect x="340.97" y="399.6" width="1" height="3" fill="#aeb3ba"/><rect x="355.68" y="396" width="1" height="6.6" fill="#c3c7cd"/><rect x="370.39" y="399.6" width="1" height="3" fill="#aeb3ba"/><rect x="385.11" y="399.6" width="1" height="3" fill="#aeb3ba"/><rect x="399.82" y="399.6" width="1" height="3" fill="#aeb3ba"/><rect x="414.54" y="399.6" width="1" height="3" fill="#aeb3ba"/><rect x="429.25" y="396" width="1" height="6.6" fill="#c3c7cd"/><rect x="443.96" y="399.6" width="1" height="3" fill="#aeb3ba"/><rect x="458.68" y="399.6" width="1" height="3" fill="#aeb3ba"/><rect x="473.39" y="399.6" width="1" height="3" fill="#aeb3ba"/><rect x="488.11" y="399.6" width="1" height="3" fill="#aeb3ba"/><rect x="502.82" y="396" width="1" height="6.6" fill="#c3c7cd"/><rect x="517.53" y="399.6" width="1" height="3" fill="#aeb3ba"/><rect x="532.25" y="399.6" width="1" height="3" fill="#aeb3ba"/><rect x="546.96" y="399.6" width="1" height="3" fill="#aeb3ba"/><rect x="561.68" y="399.6" width="1" height="3" fill="#aeb3ba"/><rect x="576.39" y="396" width="1" height="6.6" fill="#c3c7cd"/><rect x="591.10" y="399.6" width="1" height="3" fill="#aeb3ba"/><rect x="605.82" y="399.6" width="1" height="3" fill="#aeb3ba"/><rect x="620.53" y="399.6" width="1" height="3" fill="#aeb3ba"/><rect x="635.25" y="399.6" width="1" height="3" fill="#aeb3ba"/><rect x="649.96" y="396" width="1" height="6.6" fill="#c3c7cd"/><rect x="664.67" y="399.6" width="1" height="3" fill="#aeb3ba"/><rect x="679.39" y="399.6" width="1" height="3" fill="#aeb3ba"/><rect x="694.10" y="399.6" width="1" height="3" fill="#aeb3ba"/><rect x="708.82" y="399.6" width="1" height="3" fill="#aeb3ba"/><rect x="723.53" y="396" width="1" height="6.6" fill="#c3c7cd"/><rect x="738.24" y="399.6" width="1" height="3" fill="#aeb3ba"/><rect x="752.96" y="399.6" width="1" height="3" fill="#aeb3ba"/><rect x="767.67" y="399.6" width="1" height="3" fill="#aeb3ba"/><rect x="782.39" y="399.6" width="1" height="3" fill="#aeb3ba"/><rect x="797.10" y="396" width="1" height="6.6" fill="#c3c7cd"/><rect x="811.81" y="399.6" width="1" height="3" fill="#aeb3ba"/><rect x="826.53" y="399.6" width="1" height="3" fill="#aeb3ba"/><rect x="841.24" y="399.6" width="1" height="3" fill="#aeb3ba"/><rect x="855.96" y="399.6" width="1" height="3" fill="#aeb3ba"/><rect x="870.67" y="396" width="1" height="6.6" fill="#c3c7cd"/><rect x="885.38" y="399.6" width="1" height="3" fill="#aeb3ba"/><rect x="900.10" y="399.6" width="1" height="3" fill="#aeb3ba"/><rect x="914.81" y="399.6" width="1" height="3" fill="#aeb3ba"/><rect x="929.53" y="399.6" width="1" height="3" fill="#aeb3ba"/><rect x="944.24" y="396" width="1" height="6.6" fill="#c3c7cd"/><rect x="958.95" y="399.6" width="1" height="3" fill="#aeb3ba"/><rect x="973.67" y="399.6" width="1" height="3" fill="#aeb3ba"/><rect x="988.38" y="399.6" width="1" height="3" fill="#aeb3ba"/><rect x="1003.10" y="399.6" width="1" height="3" fill="#aeb3ba"/><rect x="1017.81" y="396" width="1" height="6.6" fill="#c3c7cd"/><rect x="1032.52" y="399.6" width="1" height="3" fill="#aeb3ba"/><rect x="1047.24" y="399.6" width="1" height="3" fill="#aeb3ba"/><rect x="1061.95" y="399.6" width="1" height="3" fill="#aeb3ba"/><rect x="1076.67" y="399.6" width="1" height="3" fill="#aeb3ba"/><rect x="1091.38" y="396" width="1" height="6.6" fill="#c3c7cd"/><rect x="1106.09" y="399.6" width="1" height="3" fill="#aeb3ba"/><rect x="1120.81" y="399.6" width="1" height="3" fill="#aeb3ba"/><rect x="1135.52" y="399.6" width="1" height="3" fill="#aeb3ba"/><rect x="1150.24" y="399.6" width="1" height="3" fill="#aeb3ba"/><rect x="1164.95" y="396" width="1" height="6.6" fill="#c3c7cd"/><rect x="1179.66" y="399.6" width="1" height="3" fill="#aeb3ba"/></svg><span class="t" style="left:63.50px;top:385.80px;font-size:9px;color:#c9cdd3;letter-spacing:-0.050px;">00:00:00:00</span><span class="t" style="left:137.07px;top:385.80px;font-size:9px;color:#c9cdd3;letter-spacing:-0.050px;">00:00:01:01</span><span class="t" style="left:210.64px;top:385.80px;font-size:9px;color:#c9cdd3;letter-spacing:-0.050px;">00:00:02:02</span><span class="t" style="left:284.21px;top:385.80px;font-size:9px;color:#c9cdd3;letter-spacing:-0.050px;">00:00:03:03</span><span class="t" style="left:357.78px;top:385.80px;font-size:9px;color:#c9cdd3;letter-spacing:-0.050px;">00:00:04:04</span><span class="t" style="left:431.35px;top:385.80px;font-size:9px;color:#c9cdd3;letter-spacing:-0.050px;">00:00:05:05</span><span class="t" style="left:504.92px;top:385.80px;font-size:9px;color:#c9cdd3;letter-spacing:-0.050px;">00:00:06:06</span><span class="t" style="left:578.49px;top:385.80px;font-size:9px;color:#c9cdd3;letter-spacing:-0.050px;">00:00:07:07</span><span class="t" style="left:652.06px;top:385.80px;font-size:9px;color:#c9cdd3;letter-spacing:-0.050px;">00:00:08:08</span><span class="t" style="left:725.63px;top:385.80px;font-size:9px;color:#c9cdd3;letter-spacing:-0.050px;">00:00:09:09</span><span class="t" style="left:799.20px;top:385.80px;font-size:9px;color:#c9cdd3;letter-spacing:-0.050px;">00:00:10:10</span><span class="t" style="left:872.77px;top:385.80px;font-size:9px;color:#c9cdd3;letter-spacing:0.071px;">00:00:11:11</span><span class="t" style="left:946.34px;top:385.80px;font-size:9px;color:#c9cdd3;letter-spacing:-0.050px;">00:00:12:12</span><span class="t" style="left:1019.91px;top:385.80px;font-size:9px;color:#c9cdd3;letter-spacing:-0.050px;">00:00:13:13</span><span class="t" style="left:1093.48px;top:385.80px;font-size:9px;color:#c9cdd3;letter-spacing:-0.050px;">00:00:14:14</span><div class="a" style="left:1167.2px;top:385.8px;width:25.6px;height:12px;overflow:hidden;"><span class="t" style="left:0;top:0;font-size:9px;color:#c9cdd3;letter-spacing:-0.13px;">00:00:15:15</span></div><div class="a" style="left:62px;top:402.2px;width:1131px;height:2px;background:#cb535b;"></div>
<div class="a" style="left:0px;top:404.5px;width:1193px;height:46.5px;background:#1a2029;"></div><div class="a" style="left:0px;top:451px;width:1193px;height:49px;background:#222933;"></div><div class="a" style="left:0px;top:500px;width:1193px;height:48px;background:#1a2029;"></div><div class="a" style="left:0px;top:548px;width:1193px;height:48px;background:#222933;"></div><div class="a" style="left:0px;top:596px;width:1193px;height:47.5px;background:#111316;"></div><div class="a" style="left:0px;top:643.5px;width:1193px;height:47.5px;background:#222933;"></div><div class="a" style="left:0px;top:691px;width:1193px;height:22px;background:#1a2029;"></div><div class="a" style="left:1193px;top:404.5px;width:7px;height:308.5px;background:#161b23;"></div><div class="a" style="left:1193.3px;top:404px;width:5.6px;height:211px;background:#7a828b;border-radius:2px"></div><div class="a" style="left:0px;top:24px;width:1px;height:689px;background:#2c333d;"></div><svg style="left:6.2px;top:472.0px" width="7" height="7" viewBox="0 0 7 7"><rect x="0" y="0.4" width="7" height="6.2" rx="0.8" fill="#eef0f3"/><path d="M2.6 2 V5 L5 3.5Z" fill="#1a2029"/></svg><span class="t" style="left:13.6px;top:470.3px;font-size:7px;color:#d5d9de;">6</span><svg style="left:27px;top:471.5px" width="6.4" height="8" viewBox="0 0 6.4 8"><path d="M1.2 3.4 V2.2 C1.2 -0.2 4.6 -0.2 4.8 1.6" fill="none" stroke="#eef0f3" stroke-width="1"/><rect x="0.2" y="3.4" width="6" height="4.4" rx="0.6" fill="#eef0f3"/></svg><svg style="left:48px;top:472.5px" width="8" height="6" viewBox="0 0 8 6"><path d="M0.1 3 C2 -0.6 6 -0.6 7.9 3 C6 6.6 2 6.6 0.1 3Z" fill="#eef0f3"/><circle cx="4" cy="3" r="1.3" fill="#1a2029"/></svg><svg style="left:6.2px;top:520.2px" width="7" height="7" viewBox="0 0 7 7"><rect x="0" y="0.4" width="7" height="6.2" rx="0.8" fill="#eef0f3"/><path d="M2.6 2 V5 L5 3.5Z" fill="#1a2029"/></svg><span class="t" style="left:13.6px;top:518.5px;font-size:7px;color:#d5d9de;">5</span><svg style="left:27px;top:519.7px" width="6.4" height="8" viewBox="0 0 6.4 8"><path d="M1.2 3.4 V2.2 C1.2 -0.2 4.6 -0.2 4.8 1.6" fill="none" stroke="#eef0f3" stroke-width="1"/><rect x="0.2" y="3.4" width="6" height="4.4" rx="0.6" fill="#eef0f3"/></svg><svg style="left:48px;top:520.7px" width="8" height="6" viewBox="0 0 8 6"><path d="M0.1 3 C2 -0.6 6 -0.6 7.9 3 C6 6.6 2 6.6 0.1 3Z" fill="#eef0f3"/><circle cx="4" cy="3" r="1.3" fill="#1a2029"/></svg><svg style="left:6.2px;top:568.2px" width="7" height="7" viewBox="0 0 7 7"><rect x="0" y="0.4" width="7" height="6.2" rx="0.8" fill="#eef0f3"/><path d="M2.6 2 V5 L5 3.5Z" fill="#1a2029"/></svg><span class="t" style="left:13.6px;top:566.5px;font-size:7px;color:#d5d9de;">4</span><svg style="left:27px;top:567.7px" width="6.4" height="8" viewBox="0 0 6.4 8"><path d="M1.2 3.4 V2.2 C1.2 -0.2 4.6 -0.2 4.8 1.6" fill="none" stroke="#eef0f3" stroke-width="1"/><rect x="0.2" y="3.4" width="6" height="4.4" rx="0.6" fill="#eef0f3"/></svg><svg style="left:48px;top:568.7px" width="8" height="6" viewBox="0 0 8 6"><path d="M0.1 3 C2 -0.6 6 -0.6 7.9 3 C6 6.6 2 6.6 0.1 3Z" fill="#eef0f3"/><circle cx="4" cy="3" r="1.3" fill="#1a2029"/></svg><svg style="left:6.2px;top:616.1px" width="7" height="7" viewBox="0 0 7 7"><rect x="0" y="0.4" width="7" height="6.2" rx="0.8" fill="#eef0f3"/><path d="M2.6 2 V5 L5 3.5Z" fill="#1a2029"/></svg><span class="t" style="left:13.6px;top:614.4px;font-size:7px;color:#d5d9de;">3</span><svg style="left:27px;top:615.6px" width="6.4" height="8" viewBox="0 0 6.4 8"><path d="M1.2 3.4 V2.2 C1.2 -0.2 4.6 -0.2 4.8 1.6" fill="none" stroke="#eef0f3" stroke-width="1"/><rect x="0.2" y="3.4" width="6" height="4.4" rx="0.6" fill="#eef0f3"/></svg><svg style="left:48px;top:616.6px" width="8" height="6" viewBox="0 0 8 6"><path d="M0.1 3 C2 -0.6 6 -0.6 7.9 3 C6 6.6 2 6.6 0.1 3Z" fill="#eef0f3"/><circle cx="4" cy="3" r="1.3" fill="#1a2029"/></svg><svg style="left:6.2px;top:664.1px" width="7" height="7" viewBox="0 0 7 7"><rect x="0" y="0.4" width="7" height="6.2" rx="0.8" fill="#eef0f3"/><path d="M2.6 2 V5 L5 3.5Z" fill="#1a2029"/></svg><span class="t" style="left:13.6px;top:662.4px;font-size:7px;color:#d5d9de;">2</span><svg style="left:27px;top:663.6px" width="6.4" height="8" viewBox="0 0 6.4 8"><path d="M1.2 3.4 V2.2 C1.2 -0.2 4.6 -0.2 4.8 1.6" fill="none" stroke="#eef0f3" stroke-width="1"/><rect x="0.2" y="3.4" width="6" height="4.4" rx="0.6" fill="#eef0f3"/></svg><svg style="left:48px;top:664.6px" width="8" height="6" viewBox="0 0 8 6"><path d="M0.1 3 C2 -0.6 6 -0.6 7.9 3 C6 6.6 2 6.6 0.1 3Z" fill="#eef0f3"/><circle cx="4" cy="3" r="1.3" fill="#1a2029"/></svg><div class="a" style="left:63px;top:500.3px;width:1089px;height:45.8px;background:#a0543a;"></div><svg style="left:0;top:0" width="1200" height="722"><use href="#ele" x="62.60" y="500.2" width="47.4" height="46.2"/><use href="#ele" x="109.95" y="500.2" width="47.4" height="46.2"/><use href="#ele" x="157.30" y="500.2" width="47.4" height="46.2"/><use href="#ele" x="204.65" y="500.2" width="47.4" height="46.2"/><use href="#ele" x="252.00" y="500.2" width="47.4" height="46.2"/><use href="#ele" x="299.35" y="500.2" width="47.4" height="46.2"/><use href="#ele" x="346.70" y="500.2" width="47.4" height="46.2"/><use href="#ele" x="394.05" y="500.2" width="47.4" height="46.2"/><use href="#ele" x="441.40" y="500.2" width="47.4" height="46.2"/><use href="#ele" x="488.75" y="500.2" width="47.4" height="46.2"/><use href="#ele" x="536.10" y="500.2" width="47.4" height="46.2"/><use href="#ele" x="583.45" y="500.2" width="47.4" height="46.2"/><use href="#ele" x="630.80" y="500.2" width="47.4" height="46.2"/><use href="#ele" x="678.15" y="500.2" width="47.4" height="46.2"/><use href="#ele" x="725.50" y="500.2" width="47.4" height="46.2"/><use href="#ele" x="772.85" y="500.2" width="47.4" height="46.2"/><use href="#ele" x="820.20" y="500.2" width="47.4" height="46.2"/><use href="#ele" x="867.55" y="500.2" width="47.4" height="46.2"/><use href="#ele" x="914.90" y="500.2" width="47.4" height="46.2"/><use href="#ele" x="962.25" y="500.2" width="47.4" height="46.2"/><use href="#ele" x="1009.60" y="500.2" width="47.4" height="46.2"/><use href="#ele" x="1056.95" y="500.2" width="47.4" height="46.2"/><use href="#ele" x="1104.30" y="500.2" width="47.4" height="46.2"/></svg><div class="a" style="left:63px;top:516.5px;width:5.6px;height:29.5px;background:#f0705e;border-radius:0 2px 0 0"></div><svg style="left:63.2px;top:531px" width="6" height="12" viewBox="0 0 6 12"><circle cx="2" cy="7" r="3.2" fill="none" stroke="#ffd9d2" stroke-width="1.2"/></svg><div class="a" style="left:64px;top:502px;width:9.6px;height:9.6px;background:#f4f5f7;border-radius:1px"></div><svg style="left:65px;top:504px" width="8" height="6" viewBox="0 0 8 6"><path d="M0.3 5.6 L2.8 1.8 L4.4 4 L5.2 3.2 L7 5.6Z" fill="#2b2f36"/><circle cx="6" cy="1" r="0.9" fill="#2b2f36"/></svg><span class="t" style="left:77.60px;top:501.00px;font-size:6.5px;color:#ffffff;letter-spacing:-0.067px;text-shadow:0 0 1px #333;">478618</span><div class="a" style="left:63px;top:547.6px;width:1130px;height:47.6px;background:#e7e6f6;"></div><div class="a" style="left:65px;top:548px;width:1128px;height:5.8px;background:#4fdcc0;"></div><svg style="left:0;top:0" width="1200" height="600"><defs><clipPath id="tclip"><rect x="65.0" y="553.8" width="1128.0" height="20.9"/></clipPath><filter id="tb" x="-2%" y="-20%" width="104%" height="140%"><feGaussianBlur stdDeviation="0.8"/></filter></defs><g clip-path="url(#tclip)"><g filter="url(#tb)"><g transform="translate(65.00 553.8)"><svg width="35.25" height="20.9" viewBox="0 0 35.25 20.9" overflow="hidden"><rect width="36" height="20.9" fill="#b4b8ba"/><rect width="36" height="8" fill="#e9e9e8"/><ellipse cx="31.0" cy="5.6" rx="8.5" ry="6" fill="#75605a"/><ellipse cx="29.5" cy="3.2" rx="4.7" ry="3.2" fill="#54443e" opacity="0.75"/><rect x="35.7" y="3" width="1.1" height="9" fill="#d9dcde"/><ellipse cx="-4.2" cy="5.6" rx="8.5" ry="6" fill="#75605a"/><ellipse cx="-5.8" cy="3.2" rx="4.7" ry="3.2" fill="#54443e" opacity="0.75"/><rect x="0.4" y="3" width="1.1" height="9" fill="#d9dcde"/><ellipse cx="66.2" cy="5.6" rx="8.5" ry="6" fill="#75605a"/><ellipse cx="64.8" cy="3.2" rx="4.7" ry="3.2" fill="#54443e" opacity="0.75"/><rect x="70.9" y="3" width="1.1" height="9" fill="#d9dcde"/><ellipse cx="38.0" cy="12.2" rx="7.2" ry="5.8" fill="#4e8044"/><ellipse cx="2.8" cy="12.2" rx="7.2" ry="5.8" fill="#4e8044"/><ellipse cx="73.2" cy="12.2" rx="7.2" ry="5.8" fill="#4e8044"/><path d="M14.0 6.5 L18.0 6.5 L18.8 12.5 L17.6 14 L14.4 14 L13.2 12.5Z" fill="#3f7aa6"/><rect x="14.6" y="13.5" width="2.8" height="6.5" fill="#34485e"/><path d="M0 18.5 L36 17.5 L36 21 L0 21Z" fill="#8e949a" opacity="0.7"/></svg></g><g transform="translate(100.25 553.8)"><svg width="35.25" height="20.9" viewBox="0 0 35.25 20.9" overflow="hidden"><rect width="36" height="20.9" fill="#b4b8ba"/><rect width="36" height="8" fill="#e9e9e8"/><ellipse cx="31.0" cy="5.6" rx="8.5" ry="6" fill="#75605a"/><ellipse cx="29.5" cy="3.2" rx="4.7" ry="3.2" fill="#54443e" opacity="0.75"/><rect x="35.7" y="3" width="1.1" height="9" fill="#d9dcde"/><ellipse cx="-4.2" cy="5.6" rx="8.5" ry="6" fill="#75605a"/><ellipse cx="-5.8" cy="3.2" rx="4.7" ry="3.2" fill="#54443e" opacity="0.75"/><rect x="0.4" y="3" width="1.1" height="9" fill="#d9dcde"/><ellipse cx="66.2" cy="5.6" rx="8.5" ry="6" fill="#75605a"/><ellipse cx="64.8" cy="3.2" rx="4.7" ry="3.2" fill="#54443e" opacity="0.75"/><rect x="70.9" y="3" width="1.1" height="9" fill="#d9dcde"/><ellipse cx="38.0" cy="12.2" rx="7.2" ry="5.8" fill="#4e8044"/><ellipse cx="2.8" cy="12.2" rx="7.2" ry="5.8" fill="#4e8044"/><ellipse cx="73.2" cy="12.2" rx="7.2" ry="5.8" fill="#4e8044"/><path d="M14.0 6.5 L18.0 6.5 L18.8 12.5 L17.6 14 L14.4 14 L13.2 12.5Z" fill="#3f7aa6"/><rect x="14.6" y="13.5" width="2.8" height="6.5" fill="#34485e"/><path d="M0 18.5 L36 17.5 L36 21 L0 21Z" fill="#8e949a" opacity="0.7"/></svg></g><g transform="translate(135.50 553.8)"><svg width="35.25" height="20.9" viewBox="0 0 35.25 20.9" overflow="hidden"><rect width="36" height="20.9" fill="#b4b8ba"/><rect width="36" height="8" fill="#e9e9e8"/><ellipse cx="31.0" cy="5.6" rx="8.5" ry="6" fill="#75605a"/><ellipse cx="29.5" cy="3.2" rx="4.7" ry="3.2" fill="#54443e" opacity="0.75"/><rect x="35.7" y="3" width="1.1" height="9" fill="#d9dcde"/><ellipse cx="-4.2" cy="5.6" rx="8.5" ry="6" fill="#75605a"/><ellipse cx="-5.8" cy="3.2" rx="4.7" ry="3.2" fill="#54443e" opacity="0.75"/><rect x="0.4" y="3" width="1.1" height="9" fill="#d9dcde"/><ellipse cx="66.2" cy="5.6" rx="8.5" ry="6" fill="#75605a"/><ellipse cx="64.8" cy="3.2" rx="4.7" ry="3.2" fill="#54443e" opacity="0.75"/><rect x="70.9" y="3" width="1.1" height="9" fill="#d9dcde"/><ellipse cx="38.0" cy="12.2" rx="7.2" ry="5.8" fill="#4e8044"/><ellipse cx="2.8" cy="12.2" rx="7.2" ry="5.8" fill="#4e8044"/><ellipse cx="73.2" cy="12.2" rx="7.2" ry="5.8" fill="#4e8044"/><path d="M14.0 6.5 L18.0 6.5 L18.8 12.5 L17.6 14 L14.4 14 L13.2 12.5Z" fill="#3f7aa6"/><rect x="14.6" y="13.5" width="2.8" height="6.5" fill="#34485e"/><path d="M0 18.5 L36 17.5 L36 21 L0 21Z" fill="#8e949a" opacity="0.7"/></svg></g><g transform="translate(170.75 553.8)"><svg width="35.25" height="20.9" viewBox="0 0 35.25 20.9" overflow="hidden"><rect width="36" height="20.9" fill="#b4b8ba"/><rect width="36" height="8" fill="#e9e9e8"/><ellipse cx="31.0" cy="5.6" rx="8.5" ry="6" fill="#75605a"/><ellipse cx="29.5" cy="3.2" rx="4.7" ry="3.2" fill="#54443e" opacity="0.75"/><rect x="35.7" y="3" width="1.1" height="9" fill="#d9dcde"/><ellipse cx="-4.2" cy="5.6" rx="8.5" ry="6" fill="#75605a"/><ellipse cx="-5.8" cy="3.2" rx="4.7" ry="3.2" fill="#54443e" opacity="0.75"/><rect x="0.4" y="3" width="1.1" height="9" fill="#d9dcde"/><ellipse cx="66.2" cy="5.6" rx="8.5" ry="6" fill="#75605a"/><ellipse cx="64.8" cy="3.2" rx="4.7" ry="3.2" fill="#54443e" opacity="0.75"/><rect x="70.9" y="3" width="1.1" height="9" fill="#d9dcde"/><ellipse cx="38.0" cy="12.2" rx="7.2" ry="5.8" fill="#4e8044"/><ellipse cx="2.8" cy="12.2" rx="7.2" ry="5.8" fill="#4e8044"/><ellipse cx="73.2" cy="12.2" rx="7.2" ry="5.8" fill="#4e8044"/><path d="M14.0 6.5 L18.0 6.5 L18.8 12.5 L17.6 14 L14.4 14 L13.2 12.5Z" fill="#3f7aa6"/><rect x="14.6" y="13.5" width="2.8" height="6.5" fill="#34485e"/><path d="M0 18.5 L36 17.5 L36 21 L0 21Z" fill="#8e949a" opacity="0.7"/></svg></g><g transform="translate(206.00 553.8)"><svg width="35.25" height="20.9" viewBox="0 0 35.25 20.9" overflow="hidden"><rect width="36" height="20.9" fill="#b4b8ba"/><rect width="36" height="8" fill="#e9e9e8"/><ellipse cx="31.0" cy="5.6" rx="8.5" ry="6" fill="#75605a"/><ellipse cx="29.5" cy="3.2" rx="4.7" ry="3.2" fill="#54443e" opacity="0.75"/><rect x="35.7" y="3" width="1.1" height="9" fill="#d9dcde"/><ellipse cx="-4.2" cy="5.6" rx="8.5" ry="6" fill="#75605a"/><ellipse cx="-5.8" cy="3.2" rx="4.7" ry="3.2" fill="#54443e" opacity="0.75"/><rect x="0.4" y="3" width="1.1" height="9" fill="#d9dcde"/><ellipse cx="66.2" cy="5.6" rx="8.5" ry="6" fill="#75605a"/><ellipse cx="64.8" cy="3.2" rx="4.7" ry="3.2" fill="#54443e" opacity="0.75"/><rect x="70.9" y="3" width="1.1" height="9" fill="#d9dcde"/><ellipse cx="38.0" cy="12.2" rx="7.2" ry="5.8" fill="#4e8044"/><ellipse cx="2.8" cy="12.2" rx="7.2" ry="5.8" fill="#4e8044"/><ellipse cx="73.2" cy="12.2" rx="7.2" ry="5.8" fill="#4e8044"/><path d="M14.0 6.5 L18.0 6.5 L18.8 12.5 L17.6 14 L14.4 14 L13.2 12.5Z" fill="#3f7aa6"/><rect x="14.6" y="13.5" width="2.8" height="6.5" fill="#34485e"/><path d="M0 18.5 L36 17.5 L36 21 L0 21Z" fill="#8e949a" opacity="0.7"/></svg></g><g transform="translate(241.25 553.8)"><svg width="35.25" height="20.9" viewBox="0 0 35.25 20.9" overflow="hidden"><rect width="36" height="20.9" fill="#b4b8ba"/><rect width="36" height="8" fill="#e9e9e8"/><ellipse cx="31.0" cy="5.6" rx="8.5" ry="6" fill="#75605a"/><ellipse cx="29.5" cy="3.2" rx="4.7" ry="3.2" fill="#54443e" opacity="0.75"/><rect x="35.7" y="3" width="1.1" height="9" fill="#d9dcde"/><ellipse cx="-4.2" cy="5.6" rx="8.5" ry="6" fill="#75605a"/><ellipse cx="-5.8" cy="3.2" rx="4.7" ry="3.2" fill="#54443e" opacity="0.75"/><rect x="0.4" y="3" width="1.1" height="9" fill="#d9dcde"/><ellipse cx="66.2" cy="5.6" rx="8.5" ry="6" fill="#75605a"/><ellipse cx="64.8" cy="3.2" rx="4.7" ry="3.2" fill="#54443e" opacity="0.75"/><rect x="70.9" y="3" width="1.1" height="9" fill="#d9dcde"/><ellipse cx="38.0" cy="12.2" rx="7.2" ry="5.8" fill="#4e8044"/><ellipse cx="2.8" cy="12.2" rx="7.2" ry="5.8" fill="#4e8044"/><ellipse cx="73.2" cy="12.2" rx="7.2" ry="5.8" fill="#4e8044"/><path d="M14.0 6.5 L18.0 6.5 L18.8 12.5 L17.6 14 L14.4 14 L13.2 12.5Z" fill="#3f7aa6"/><rect x="14.6" y="13.5" width="2.8" height="6.5" fill="#34485e"/><path d="M0 18.5 L36 17.5 L36 21 L0 21Z" fill="#8e949a" opacity="0.7"/></svg></g><g transform="translate(276.50 553.8)"><svg width="35.25" height="20.9" viewBox="0 0 35.25 20.9" overflow="hidden"><rect width="36" height="20.9" fill="#b4b8ba"/><rect width="36" height="8" fill="#e9e9e8"/><ellipse cx="31.0" cy="5.6" rx="8.5" ry="6" fill="#75605a"/><ellipse cx="29.5" cy="3.2" rx="4.7" ry="3.2" fill="#54443e" opacity="0.75"/><rect x="35.7" y="3" width="1.1" height="9" fill="#d9dcde"/><ellipse cx="-4.2" cy="5.6" rx="8.5" ry="6" fill="#75605a"/><ellipse cx="-5.8" cy="3.2" rx="4.7" ry="3.2" fill="#54443e" opacity="0.75"/><rect x="0.4" y="3" width="1.1" height="9" fill="#d9dcde"/><ellipse cx="66.2" cy="5.6" rx="8.5" ry="6" fill="#75605a"/><ellipse cx="64.8" cy="3.2" rx="4.7" ry="3.2" fill="#54443e" opacity="0.75"/><rect x="70.9" y="3" width="1.1" height="9" fill="#d9dcde"/><ellipse cx="38.0" cy="12.2" rx="7.2" ry="5.8" fill="#4e8044"/><ellipse cx="2.8" cy="12.2" rx="7.2" ry="5.8" fill="#4e8044"/><ellipse cx="73.2" cy="12.2" rx="7.2" ry="5.8" fill="#4e8044"/><path d="M14.0 6.5 L18.0 6.5 L18.8 12.5 L17.6 14 L14.4 14 L13.2 12.5Z" fill="#3f7aa6"/><rect x="14.6" y="13.5" width="2.8" height="6.5" fill="#34485e"/><path d="M0 18.5 L36 17.5 L36 21 L0 21Z" fill="#8e949a" opacity="0.7"/></svg></g><g transform="translate(311.75 553.8)"><svg width="35.25" height="20.9" viewBox="0 0 35.25 20.9" overflow="hidden"><rect width="36" height="20.9" fill="#b6babc"/><rect width="36" height="8" fill="#e9e9e8"/><ellipse cx="29.9" cy="5.6" rx="8.7" ry="6" fill="#75605a"/><ellipse cx="28.4" cy="3.2" rx="4.8" ry="3.2" fill="#54443e" opacity="0.75"/><rect x="34.7" y="3" width="1.1" height="9" fill="#d9dcde"/><ellipse cx="-5.4" cy="5.6" rx="8.7" ry="6" fill="#75605a"/><ellipse cx="-6.9" cy="3.2" rx="4.8" ry="3.2" fill="#54443e" opacity="0.75"/><rect x="-0.6" y="3" width="1.1" height="9" fill="#d9dcde"/><ellipse cx="65.1" cy="5.6" rx="8.7" ry="6" fill="#75605a"/><ellipse cx="63.6" cy="3.2" rx="4.8" ry="3.2" fill="#54443e" opacity="0.75"/><rect x="69.9" y="3" width="1.1" height="9" fill="#d9dcde"/><ellipse cx="36.8" cy="12.1" rx="7.3" ry="5.7" fill="#4f8045"/><ellipse cx="1.5" cy="12.1" rx="7.3" ry="5.7" fill="#4f8045"/><ellipse cx="72.0" cy="12.1" rx="7.3" ry="5.7" fill="#4f8045"/><path d="M14.9 6.5 L18.9 6.5 L19.7 12.5 L18.5 14 L15.3 14 L14.1 12.5Z" fill="#417ca8"/><rect x="15.5" y="13.5" width="2.8" height="6.5" fill="#34485e"/><path d="M0 18.5 L36 17.5 L36 21 L0 21Z" fill="#8e949a" opacity="0.7"/></svg></g><g transform="translate(347.00 553.8)"><svg width="35.25" height="20.9" viewBox="0 0 35.25 20.9" overflow="hidden"><rect width="36" height="20.9" fill="#b7bbbd"/><rect width="36" height="8" fill="#e9e9e8"/><ellipse cx="28.8" cy="5.6" rx="8.9" ry="6" fill="#75605a"/><ellipse cx="27.3" cy="3.2" rx="4.9" ry="3.2" fill="#54443e" opacity="0.75"/><rect x="33.6" y="3" width="1.1" height="9" fill="#d9dcde"/><ellipse cx="-6.5" cy="5.6" rx="8.9" ry="6" fill="#75605a"/><ellipse cx="-8.0" cy="3.2" rx="4.9" ry="3.2" fill="#54443e" opacity="0.75"/><rect x="-1.6" y="3" width="1.1" height="9" fill="#d9dcde"/><ellipse cx="64.0" cy="5.6" rx="8.9" ry="6" fill="#75605a"/><ellipse cx="62.5" cy="3.2" rx="4.9" ry="3.2" fill="#54443e" opacity="0.75"/><rect x="68.9" y="3" width="1.1" height="9" fill="#d9dcde"/><ellipse cx="35.5" cy="12.0" rx="7.4" ry="5.7" fill="#507f45"/><ellipse cx="0.3" cy="12.0" rx="7.4" ry="5.7" fill="#507f45"/><ellipse cx="70.8" cy="12.0" rx="7.4" ry="5.7" fill="#507f45"/><path d="M15.8 6.5 L19.8 6.5 L20.6 12.5 L19.4 14 L16.2 14 L15.0 12.5Z" fill="#427daa"/><rect x="16.4" y="13.5" width="2.8" height="6.5" fill="#34485e"/><path d="M0 18.5 L36 17.5 L36 21 L0 21Z" fill="#8e949a" opacity="0.7"/></svg></g><g transform="translate(382.25 553.8)"><svg width="35.25" height="20.9" viewBox="0 0 35.25 20.9" overflow="hidden"><rect width="36" height="20.9" fill="#b9bdbf"/><rect width="36" height="8" fill="#e9e9e8"/><ellipse cx="27.6" cy="5.6" rx="9.0" ry="6" fill="#75605a"/><ellipse cx="26.1" cy="3.2" rx="5.0" ry="3.2" fill="#54443e" opacity="0.75"/><rect x="32.6" y="3" width="1.1" height="9" fill="#d9dcde"/><ellipse cx="-7.6" cy="5.6" rx="9.0" ry="6" fill="#75605a"/><ellipse cx="-9.1" cy="3.2" rx="5.0" ry="3.2" fill="#54443e" opacity="0.75"/><rect x="-2.6" y="3" width="1.1" height="9" fill="#d9dcde"/><ellipse cx="62.9" cy="5.6" rx="9.0" ry="6" fill="#75605a"/><ellipse cx="61.4" cy="3.2" rx="5.0" ry="3.2" fill="#54443e" opacity="0.75"/><rect x="67.9" y="3" width="1.1" height="9" fill="#d9dcde"/><ellipse cx="34.3" cy="11.9" rx="7.5" ry="5.6" fill="#527f46"/><ellipse cx="-1.0" cy="11.9" rx="7.5" ry="5.6" fill="#527f46"/><ellipse cx="69.5" cy="11.9" rx="7.5" ry="5.6" fill="#527f46"/><path d="M16.7 6.5 L20.7 6.5 L21.5 12.5 L20.3 14 L17.1 14 L15.9 12.5Z" fill="#447fab"/><rect x="17.3" y="13.5" width="2.8" height="6.5" fill="#34485e"/><path d="M0 18.5 L36 17.5 L36 21 L0 21Z" fill="#8e949a" opacity="0.7"/></svg></g><g transform="translate(417.50 553.8)"><svg width="35.25" height="20.9" viewBox="0 0 35.25 20.9" overflow="hidden"><rect width="36" height="20.9" fill="#bbbfc0"/><rect width="36" height="8" fill="#e9e9e8"/><ellipse cx="26.5" cy="5.6" rx="9.2" ry="6" fill="#75605a"/><ellipse cx="25.0" cy="3.2" rx="5.1" ry="3.2" fill="#54443e" opacity="0.75"/><rect x="31.6" y="3" width="1.1" height="9" fill="#d9dcde"/><ellipse cx="-8.7" cy="5.6" rx="9.2" ry="6" fill="#75605a"/><ellipse cx="-10.2" cy="3.2" rx="5.1" ry="3.2" fill="#54443e" opacity="0.75"/><rect x="-3.7" y="3" width="1.1" height="9" fill="#d9dcde"/><ellipse cx="61.8" cy="5.6" rx="9.2" ry="6" fill="#75605a"/><ellipse cx="60.3" cy="3.2" rx="5.1" ry="3.2" fill="#54443e" opacity="0.75"/><rect x="66.8" y="3" width="1.1" height="9" fill="#d9dcde"/><ellipse cx="33.1" cy="11.8" rx="7.6" ry="5.5" fill="#537e47"/><ellipse cx="-2.2" cy="11.8" rx="7.6" ry="5.5" fill="#537e47"/><ellipse cx="68.3" cy="11.8" rx="7.6" ry="5.5" fill="#537e47"/><path d="M17.6 6.5 L21.6 6.5 L22.4 12.5 L21.2 14 L18.0 14 L16.8 12.5Z" fill="#4580ad"/><rect x="18.2" y="13.5" width="2.8" height="6.5" fill="#34485e"/><path d="M0 18.5 L36 17.5 L36 21 L0 21Z" fill="#8e949a" opacity="0.7"/></svg></g><g transform="translate(452.75 553.8)"><svg width="35.25" height="20.9" viewBox="0 0 35.25 20.9" overflow="hidden"><rect width="36" height="20.9" fill="#bcc0c2"/><rect width="36" height="8" fill="#e9e9e8"/><ellipse cx="25.4" cy="5.6" rx="9.4" ry="6" fill="#75605a"/><ellipse cx="23.9" cy="3.2" rx="5.2" ry="3.2" fill="#54443e" opacity="0.75"/><rect x="30.6" y="3" width="1.1" height="9" fill="#d9dcde"/><ellipse cx="-9.8" cy="5.6" rx="9.4" ry="6" fill="#75605a"/><ellipse cx="-11.3" cy="3.2" rx="5.2" ry="3.2" fill="#54443e" opacity="0.75"/><rect x="-4.7" y="3" width="1.1" height="9" fill="#d9dcde"/><ellipse cx="60.7" cy="5.6" rx="9.4" ry="6" fill="#75605a"/><ellipse cx="59.2" cy="3.2" rx="5.2" ry="3.2" fill="#54443e" opacity="0.75"/><rect x="65.8" y="3" width="1.1" height="9" fill="#d9dcde"/><ellipse cx="31.8" cy="11.8" rx="7.6" ry="5.4" fill="#547e48"/><ellipse cx="-3.4" cy="11.8" rx="7.6" ry="5.4" fill="#547e48"/><ellipse cx="67.1" cy="11.8" rx="7.6" ry="5.4" fill="#547e48"/><path d="M18.6 6.5 L22.6 6.5 L23.4 12.5 L22.2 14 L19.0 14 L17.8 12.5Z" fill="#4782af"/><rect x="19.2" y="13.5" width="2.8" height="6.5" fill="#34485e"/><path d="M0 18.5 L36 17.5 L36 21 L0 21Z" fill="#8e949a" opacity="0.7"/></svg></g><g transform="translate(488.00 553.8)"><svg width="35.25" height="20.9" viewBox="0 0 35.25 20.9" overflow="hidden"><rect width="36" height="20.9" fill="#bec2c3"/><rect width="36" height="8" fill="#e9e9e8"/><ellipse cx="24.3" cy="5.6" rx="9.6" ry="6" fill="#75605a"/><ellipse cx="22.8" cy="3.2" rx="5.3" ry="3.2" fill="#54443e" opacity="0.75"/><rect x="29.6" y="3" width="1.1" height="9" fill="#d9dcde"/><ellipse cx="-11.0" cy="5.6" rx="9.6" ry="6" fill="#75605a"/><ellipse cx="-12.5" cy="3.2" rx="5.3" ry="3.2" fill="#54443e" opacity="0.75"/><rect x="-5.7" y="3" width="1.1" height="9" fill="#d9dcde"/><ellipse cx="59.5" cy="5.6" rx="9.6" ry="6" fill="#75605a"/><ellipse cx="58.0" cy="3.2" rx="5.3" ry="3.2" fill="#54443e" opacity="0.75"/><rect x="64.8" y="3" width="1.1" height="9" fill="#d9dcde"/><ellipse cx="30.6" cy="11.7" rx="7.7" ry="5.4" fill="#557d48"/><ellipse cx="-4.7" cy="11.7" rx="7.7" ry="5.4" fill="#557d48"/><ellipse cx="65.8" cy="11.7" rx="7.7" ry="5.4" fill="#557d48"/><path d="M19.5 6.5 L23.5 6.5 L24.3 12.5 L23.1 14 L19.9 14 L18.7 12.5Z" fill="#4983b1"/><rect x="20.1" y="13.5" width="2.8" height="6.5" fill="#34485e"/><path d="M0 18.5 L36 17.5 L36 21 L0 21Z" fill="#8e949a" opacity="0.7"/></svg></g><g transform="translate(523.25 553.8)"><svg width="35.25" height="20.9" viewBox="0 0 35.25 20.9" overflow="hidden"><rect width="36" height="20.9" fill="#c0c4c5"/><rect width="36" height="8" fill="#e9e9e8"/><ellipse cx="23.2" cy="5.6" rx="9.7" ry="6" fill="#75605a"/><ellipse cx="21.7" cy="3.2" rx="5.4" ry="3.2" fill="#54443e" opacity="0.75"/><rect x="28.5" y="3" width="1.1" height="9" fill="#d9dcde"/><ellipse cx="-12.1" cy="5.6" rx="9.7" ry="6" fill="#75605a"/><ellipse cx="-13.6" cy="3.2" rx="5.4" ry="3.2" fill="#54443e" opacity="0.75"/><rect x="-6.7" y="3" width="1.1" height="9" fill="#d9dcde"/><ellipse cx="58.4" cy="5.6" rx="9.7" ry="6" fill="#75605a"/><ellipse cx="56.9" cy="3.2" rx="5.4" ry="3.2" fill="#54443e" opacity="0.75"/><rect x="63.8" y="3" width="1.1" height="9" fill="#d9dcde"/><ellipse cx="29.4" cy="11.6" rx="7.8" ry="5.3" fill="#567d49"/><ellipse cx="-5.9" cy="11.6" rx="7.8" ry="5.3" fill="#567d49"/><ellipse cx="64.6" cy="11.6" rx="7.8" ry="5.3" fill="#567d49"/><path d="M20.4 6.5 L24.4 6.5 L25.2 12.5 L24.0 14 L20.8 14 L19.6 12.5Z" fill="#4a85b2"/><rect x="21.0" y="13.5" width="2.8" height="6.5" fill="#34485e"/><path d="M0 18.5 L36 17.5 L36 21 L0 21Z" fill="#8e949a" opacity="0.7"/></svg></g><g transform="translate(558.50 553.8)"><svg width="35.25" height="20.9" viewBox="0 0 35.25 20.9" overflow="hidden"><rect width="36" height="20.9" fill="#c1c5c6"/><rect width="36" height="8" fill="#e9e9e8"/><ellipse cx="22.1" cy="5.6" rx="9.9" ry="6" fill="#75605a"/><ellipse cx="20.6" cy="3.2" rx="5.5" ry="3.2" fill="#54443e" opacity="0.75"/><rect x="27.5" y="3" width="1.1" height="9" fill="#d9dcde"/><ellipse cx="-13.2" cy="5.6" rx="9.9" ry="6" fill="#75605a"/><ellipse cx="-14.7" cy="3.2" rx="5.5" ry="3.2" fill="#54443e" opacity="0.75"/><rect x="-7.7" y="3" width="1.1" height="9" fill="#d9dcde"/><ellipse cx="57.3" cy="5.6" rx="9.9" ry="6" fill="#75605a"/><ellipse cx="55.8" cy="3.2" rx="5.5" ry="3.2" fill="#54443e" opacity="0.75"/><rect x="62.8" y="3" width="1.1" height="9" fill="#d9dcde"/><ellipse cx="28.1" cy="11.5" rx="7.9" ry="5.2" fill="#577c4a"/><ellipse cx="-7.1" cy="11.5" rx="7.9" ry="5.2" fill="#577c4a"/><ellipse cx="63.4" cy="11.5" rx="7.9" ry="5.2" fill="#577c4a"/><path d="M21.3 6.5 L25.3 6.5 L26.1 12.5 L24.9 14 L21.7 14 L20.5 12.5Z" fill="#4c86b4"/><rect x="21.9" y="13.5" width="2.8" height="6.5" fill="#34485e"/><path d="M0 18.5 L36 17.5 L36 21 L0 21Z" fill="#8e949a" opacity="0.7"/></svg></g><g transform="translate(593.75 553.8)"><svg width="35.25" height="20.9" viewBox="0 0 35.25 20.9" overflow="hidden"><rect width="36" height="20.9" fill="#c3c7c8"/><rect width="36" height="8" fill="#e9e9e8"/><ellipse cx="20.9" cy="5.6" rx="10.1" ry="6" fill="#75605a"/><ellipse cx="19.4" cy="3.2" rx="5.5" ry="3.2" fill="#54443e" opacity="0.75"/><rect x="26.5" y="3" width="1.1" height="9" fill="#d9dcde"/><ellipse cx="-14.3" cy="5.6" rx="10.1" ry="6" fill="#75605a"/><ellipse cx="-15.8" cy="3.2" rx="5.5" ry="3.2" fill="#54443e" opacity="0.75"/><rect x="-8.8" y="3" width="1.1" height="9" fill="#d9dcde"/><ellipse cx="56.2" cy="5.6" rx="10.1" ry="6" fill="#75605a"/><ellipse cx="54.7" cy="3.2" rx="5.5" ry="3.2" fill="#54443e" opacity="0.75"/><rect x="61.7" y="3" width="1.1" height="9" fill="#d9dcde"/><ellipse cx="26.9" cy="11.4" rx="8.0" ry="5.2" fill="#597c4a"/><ellipse cx="-8.4" cy="11.4" rx="8.0" ry="5.2" fill="#597c4a"/><ellipse cx="62.1" cy="11.4" rx="8.0" ry="5.2" fill="#597c4a"/><path d="M22.2 6.5 L26.2 6.5 L27.0 12.5 L25.8 14 L22.6 14 L21.4 12.5Z" fill="#4d88b6"/><rect x="22.8" y="13.5" width="2.8" height="6.5" fill="#34485e"/><path d="M0 18.5 L36 17.5 L36 21 L0 21Z" fill="#8e949a" opacity="0.7"/></svg></g><g transform="translate(629.00 553.8)"><svg width="35.25" height="20.9" viewBox="0 0 35.25 20.9" overflow="hidden"><rect width="36" height="20.9" fill="#c4c8c9"/><rect width="36" height="8" fill="#e9e9e8"/><ellipse cx="19.8" cy="5.6" rx="10.3" ry="6" fill="#75605a"/><ellipse cx="18.3" cy="3.2" rx="5.6" ry="3.2" fill="#54443e" opacity="0.75"/><rect x="25.5" y="3" width="1.1" height="9" fill="#d9dcde"/><ellipse cx="-15.4" cy="5.6" rx="10.3" ry="6" fill="#75605a"/><ellipse cx="-16.9" cy="3.2" rx="5.6" ry="3.2" fill="#54443e" opacity="0.75"/><rect x="-9.8" y="3" width="1.1" height="9" fill="#d9dcde"/><ellipse cx="55.1" cy="5.6" rx="10.3" ry="6" fill="#75605a"/><ellipse cx="53.6" cy="3.2" rx="5.6" ry="3.2" fill="#54443e" opacity="0.75"/><rect x="60.7" y="3" width="1.1" height="9" fill="#d9dcde"/><ellipse cx="25.6" cy="11.3" rx="8.1" ry="5.1" fill="#5a7b4b"/><ellipse cx="-9.6" cy="11.3" rx="8.1" ry="5.1" fill="#5a7b4b"/><ellipse cx="60.9" cy="11.3" rx="8.1" ry="5.1" fill="#5a7b4b"/><path d="M23.1 6.5 L27.1 6.5 L27.9 12.5 L26.7 14 L23.5 14 L22.3 12.5Z" fill="#4f89b8"/><rect x="23.7" y="13.5" width="2.8" height="6.5" fill="#34485e"/><path d="M0 18.5 L36 17.5 L36 21 L0 21Z" fill="#8e949a" opacity="0.7"/></svg></g><g transform="translate(664.25 553.8)"><svg width="35.25" height="20.9" viewBox="0 0 35.25 20.9" overflow="hidden"><rect width="36" height="20.9" fill="#c6cacb"/><rect width="36" height="8" fill="#e9e9e8"/><ellipse cx="18.7" cy="5.6" rx="10.4" ry="6" fill="#75605a"/><ellipse cx="17.2" cy="3.2" rx="5.7" ry="3.2" fill="#54443e" opacity="0.75"/><rect x="24.4" y="3" width="1.1" height="9" fill="#d9dcde"/><ellipse cx="-16.5" cy="5.6" rx="10.4" ry="6" fill="#75605a"/><ellipse cx="-18.0" cy="3.2" rx="5.7" ry="3.2" fill="#54443e" opacity="0.75"/><rect x="-10.8" y="3" width="1.1" height="9" fill="#d9dcde"/><ellipse cx="54.0" cy="5.6" rx="10.4" ry="6" fill="#75605a"/><ellipse cx="52.5" cy="3.2" rx="5.7" ry="3.2" fill="#54443e" opacity="0.75"/><rect x="59.7" y="3" width="1.1" height="9" fill="#d9dcde"/><ellipse cx="24.4" cy="11.2" rx="8.2" ry="5.0" fill="#5b7b4c"/><ellipse cx="-10.8" cy="11.2" rx="8.2" ry="5.0" fill="#5b7b4c"/><ellipse cx="59.7" cy="11.2" rx="8.2" ry="5.0" fill="#5b7b4c"/><path d="M24.0 6.5 L28.0 6.5 L28.8 12.5 L27.6 14 L24.4 14 L23.2 12.5Z" fill="#508bb9"/><rect x="24.6" y="13.5" width="2.8" height="6.5" fill="#34485e"/><path d="M0 18.5 L36 17.5 L36 21 L0 21Z" fill="#8e949a" opacity="0.7"/></svg></g><g transform="translate(699.50 553.8)"><svg width="35.25" height="20.9" viewBox="0 0 35.25 20.9" overflow="hidden"><rect width="36" height="20.9" fill="#c8cccc"/><rect width="36" height="8" fill="#e9e9e8"/><ellipse cx="17.6" cy="5.6" rx="10.6" ry="6" fill="#75605a"/><ellipse cx="16.1" cy="3.2" rx="5.8" ry="3.2" fill="#54443e" opacity="0.75"/><rect x="23.4" y="3" width="1.1" height="9" fill="#d9dcde"/><ellipse cx="-17.7" cy="5.6" rx="10.6" ry="6" fill="#75605a"/><ellipse cx="-19.2" cy="3.2" rx="5.8" ry="3.2" fill="#54443e" opacity="0.75"/><rect x="-11.8" y="3" width="1.1" height="9" fill="#d9dcde"/><ellipse cx="52.8" cy="5.6" rx="10.6" ry="6" fill="#75605a"/><ellipse cx="51.3" cy="3.2" rx="5.8" ry="3.2" fill="#54443e" opacity="0.75"/><rect x="58.7" y="3" width="1.1" height="9" fill="#d9dcde"/><ellipse cx="23.2" cy="11.1" rx="8.3" ry="5.0" fill="#5c7a4c"/><ellipse cx="-12.1" cy="11.1" rx="8.3" ry="5.0" fill="#5c7a4c"/><ellipse cx="58.4" cy="11.1" rx="8.3" ry="5.0" fill="#5c7a4c"/><path d="M24.9 6.5 L28.9 6.5 L29.7 12.5 L28.5 14 L25.3 14 L24.1 12.5Z" fill="#528cbb"/><rect x="25.5" y="13.5" width="2.8" height="6.5" fill="#34485e"/><path d="M0 18.5 L36 17.5 L36 21 L0 21Z" fill="#8e949a" opacity="0.7"/></svg></g><g transform="translate(734.75 553.8)"><svg width="35.25" height="20.9" viewBox="0 0 35.25 20.9" overflow="hidden"><rect width="36" height="20.9" fill="#c9cdce"/><rect width="36" height="8" fill="#e9e9e8"/><ellipse cx="16.5" cy="5.6" rx="10.8" ry="6" fill="#75605a"/><ellipse cx="15.0" cy="3.2" rx="5.9" ry="3.2" fill="#54443e" opacity="0.75"/><rect x="22.4" y="3" width="1.1" height="9" fill="#d9dcde"/><ellipse cx="-18.8" cy="5.6" rx="10.8" ry="6" fill="#75605a"/><ellipse cx="-20.3" cy="3.2" rx="5.9" ry="3.2" fill="#54443e" opacity="0.75"/><rect x="-12.8" y="3" width="1.1" height="9" fill="#d9dcde"/><ellipse cx="51.7" cy="5.6" rx="10.8" ry="6" fill="#75605a"/><ellipse cx="50.2" cy="3.2" rx="5.9" ry="3.2" fill="#54443e" opacity="0.75"/><rect x="57.7" y="3" width="1.1" height="9" fill="#d9dcde"/><ellipse cx="21.9" cy="11.1" rx="8.3" ry="4.9" fill="#5d7a4d"/><ellipse cx="-13.3" cy="11.1" rx="8.3" ry="4.9" fill="#5d7a4d"/><ellipse cx="57.2" cy="11.1" rx="8.3" ry="4.9" fill="#5d7a4d"/><path d="M25.9 6.5 L29.9 6.5 L30.7 12.5 L29.5 14 L26.3 14 L25.1 12.5Z" fill="#548ebd"/><rect x="26.5" y="13.5" width="2.8" height="6.5" fill="#34485e"/><path d="M0 18.5 L36 17.5 L36 21 L0 21Z" fill="#8e949a" opacity="0.7"/></svg></g><g transform="translate(770.00 553.8)"><svg width="35.25" height="20.9" viewBox="0 0 35.25 20.9" overflow="hidden"><rect width="36" height="20.9" fill="#cbcfcf"/><rect width="36" height="8" fill="#e9e9e8"/><ellipse cx="15.4" cy="5.6" rx="11.0" ry="6" fill="#75605a"/><ellipse cx="13.9" cy="3.2" rx="6.0" ry="3.2" fill="#54443e" opacity="0.75"/><rect x="21.4" y="3" width="1.1" height="9" fill="#d9dcde"/><ellipse cx="-19.9" cy="5.6" rx="11.0" ry="6" fill="#75605a"/><ellipse cx="-21.4" cy="3.2" rx="6.0" ry="3.2" fill="#54443e" opacity="0.75"/><rect x="-13.9" y="3" width="1.1" height="9" fill="#d9dcde"/><ellipse cx="50.6" cy="5.6" rx="11.0" ry="6" fill="#75605a"/><ellipse cx="49.1" cy="3.2" rx="6.0" ry="3.2" fill="#54443e" opacity="0.75"/><rect x="56.6" y="3" width="1.1" height="9" fill="#d9dcde"/><ellipse cx="20.7" cy="11.0" rx="8.4" ry="4.8" fill="#5e794e"/><ellipse cx="-14.5" cy="11.0" rx="8.4" ry="4.8" fill="#5e794e"/><ellipse cx="56.0" cy="11.0" rx="8.4" ry="4.8" fill="#5e794e"/><path d="M26.8 6.5 L30.8 6.5 L31.6 12.5 L30.4 14 L27.2 14 L26.0 12.5Z" fill="#558fbf"/><rect x="27.4" y="13.5" width="2.8" height="6.5" fill="#34485e"/><path d="M0 18.5 L36 17.5 L36 21 L0 21Z" fill="#8e949a" opacity="0.7"/></svg></g><g transform="translate(805.25 553.8)"><svg width="35.25" height="20.9" viewBox="0 0 35.25 20.9" overflow="hidden"><rect width="36" height="20.9" fill="#cdd1d1"/><rect width="36" height="8" fill="#e9e9e8"/><ellipse cx="14.2" cy="5.6" rx="11.1" ry="6" fill="#75605a"/><ellipse cx="12.7" cy="3.2" rx="6.1" ry="3.2" fill="#54443e" opacity="0.75"/><rect x="20.4" y="3" width="1.1" height="9" fill="#d9dcde"/><ellipse cx="-21.0" cy="5.6" rx="11.1" ry="6" fill="#75605a"/><ellipse cx="-22.5" cy="3.2" rx="6.1" ry="3.2" fill="#54443e" opacity="0.75"/><rect x="-14.9" y="3" width="1.1" height="9" fill="#d9dcde"/><ellipse cx="49.5" cy="5.6" rx="11.1" ry="6" fill="#75605a"/><ellipse cx="48.0" cy="3.2" rx="6.1" ry="3.2" fill="#54443e" opacity="0.75"/><rect x="55.6" y="3" width="1.1" height="9" fill="#d9dcde"/><ellipse cx="19.5" cy="10.9" rx="8.5" ry="4.7" fill="#60794f"/><ellipse cx="-15.8" cy="10.9" rx="8.5" ry="4.7" fill="#60794f"/><ellipse cx="54.7" cy="10.9" rx="8.5" ry="4.7" fill="#60794f"/><path d="M27.7 6.5 L31.7 6.5 L32.5 12.5 L31.3 14 L28.1 14 L26.9 12.5Z" fill="#5791c0"/><rect x="28.3" y="13.5" width="2.8" height="6.5" fill="#34485e"/><path d="M0 18.5 L36 17.5 L36 21 L0 21Z" fill="#8e949a" opacity="0.7"/></svg></g><g transform="translate(840.50 553.8)"><svg width="35.25" height="20.9" viewBox="0 0 35.25 20.9" overflow="hidden"><rect width="36" height="20.9" fill="#ced2d2"/><rect width="36" height="8" fill="#e9e9e8"/><ellipse cx="13.1" cy="5.6" rx="11.3" ry="6" fill="#75605a"/><ellipse cx="11.6" cy="3.2" rx="6.2" ry="3.2" fill="#54443e" opacity="0.75"/><rect x="19.3" y="3" width="1.1" height="9" fill="#d9dcde"/><ellipse cx="-22.1" cy="5.6" rx="11.3" ry="6" fill="#75605a"/><ellipse cx="-23.6" cy="3.2" rx="6.2" ry="3.2" fill="#54443e" opacity="0.75"/><rect x="-15.9" y="3" width="1.1" height="9" fill="#d9dcde"/><ellipse cx="48.4" cy="5.6" rx="11.3" ry="6" fill="#75605a"/><ellipse cx="46.9" cy="3.2" rx="6.2" ry="3.2" fill="#54443e" opacity="0.75"/><rect x="54.6" y="3" width="1.1" height="9" fill="#d9dcde"/><ellipse cx="18.2" cy="10.8" rx="8.6" ry="4.7" fill="#61784f"/><ellipse cx="-17.0" cy="10.8" rx="8.6" ry="4.7" fill="#61784f"/><ellipse cx="53.5" cy="10.8" rx="8.6" ry="4.7" fill="#61784f"/><path d="M28.6 6.5 L32.6 6.5 L33.4 12.5 L32.2 14 L29.0 14 L27.8 12.5Z" fill="#5892c2"/><rect x="29.2" y="13.5" width="2.8" height="6.5" fill="#34485e"/><path d="M0 18.5 L36 17.5 L36 21 L0 21Z" fill="#8e949a" opacity="0.7"/></svg></g><g transform="translate(875.75 553.8)"><svg width="35.25" height="20.9" viewBox="0 0 35.25 20.9" overflow="hidden"><rect width="36" height="20.9" fill="#d0d4d4"/><rect width="36" height="8" fill="#e9e9e8"/><ellipse cx="12.0" cy="5.6" rx="11.5" ry="6" fill="#75605a"/><ellipse cx="10.5" cy="3.2" rx="6.3" ry="3.2" fill="#54443e" opacity="0.75"/><rect x="18.3" y="3" width="1.1" height="9" fill="#d9dcde"/><ellipse cx="-23.2" cy="5.6" rx="11.5" ry="6" fill="#75605a"/><ellipse cx="-24.8" cy="3.2" rx="6.3" ry="3.2" fill="#54443e" opacity="0.75"/><rect x="-16.9" y="3" width="1.1" height="9" fill="#d9dcde"/><ellipse cx="47.2" cy="5.6" rx="11.5" ry="6" fill="#75605a"/><ellipse cx="45.8" cy="3.2" rx="6.3" ry="3.2" fill="#54443e" opacity="0.75"/><rect x="53.6" y="3" width="1.1" height="9" fill="#d9dcde"/><ellipse cx="17.0" cy="10.7" rx="8.7" ry="4.6" fill="#627850"/><ellipse cx="-18.2" cy="10.7" rx="8.7" ry="4.6" fill="#627850"/><ellipse cx="52.2" cy="10.7" rx="8.7" ry="4.6" fill="#627850"/><path d="M29.5 6.5 L33.5 6.5 L34.3 12.5 L33.1 14 L29.9 14 L28.7 12.5Z" fill="#5a94c4"/><rect x="30.1" y="13.5" width="2.8" height="6.5" fill="#34485e"/><path d="M0 18.5 L36 17.5 L36 21 L0 21Z" fill="#8e949a" opacity="0.7"/></svg></g><g transform="translate(911.00 553.8)"><svg width="35.25" height="20.9" viewBox="0 0 35.25 20.9" overflow="hidden"><rect width="36" height="20.9" fill="#abadb4"/><rect width="36" height="4.6" fill="#e9eaec"/><ellipse cx="27.0" cy="5.8" rx="9" ry="3.6" fill="#6c665a"/><ellipse cx="4.0" cy="6" rx="5" ry="3" fill="#6f6a60"/><ellipse cx="19.0" cy="6.6" rx="4" ry="3" fill="#8a7f7a"/><path d="M0 9 L36 8 L36 12 L0 13Z" fill="#b4b6bc" opacity="0.7"/><path d="M14 15 L30 20.9 L22 20.9 L12 17Z" fill="#d6d9e0" opacity="0.8"/><g transform="translate(12.0 5.5) scale(1.00)"><path d="M1 0 C3 -1.6 6 -1.6 7.5 0.5 L9 6 L7 7 L6.5 4.5 L6 8 L1.5 8 L1 4.5 L-0.5 7 L-2 6.2Z" fill="#2c6fa4"/><path d="M1.5 8 L6 8 L7 12 L5 12 L4 9.5 L3 12.5 L1 12.5Z" fill="#2e4464"/><path d="M0.5 11.5 L7.5 11.5 L7.5 14 L0.5 14Z" fill="#3a8aa0" opacity="0.8"/></g></svg></g><g transform="translate(946.25 553.8)"><svg width="35.25" height="20.9" viewBox="0 0 35.25 20.9" overflow="hidden"><rect width="36" height="20.9" fill="#a8aab2"/><rect width="36" height="4.6" fill="#e9eaec"/><ellipse cx="26.5" cy="5.8" rx="9" ry="3.6" fill="#6c665a"/><ellipse cx="3.8" cy="6" rx="5" ry="3" fill="#6f6a60"/><ellipse cx="18.5" cy="6.6" rx="4" ry="3" fill="#8a7f7a"/><path d="M0 9 L36 8 L36 12 L0 13Z" fill="#b4b6bc" opacity="0.7"/><path d="M14 15 L30 20.9 L22 20.9 L12 17Z" fill="#d6d9e0" opacity="0.8"/><g transform="translate(12.6 5.3) scale(1.04)"><path d="M1 0 C3 -1.6 6 -1.6 7.5 0.5 L9 6 L7 7 L6.5 4.5 L6 8 L1.5 8 L1 4.5 L-0.5 7 L-2 6.2Z" fill="#2c6fa4"/><path d="M1.5 8 L6 8 L7 12 L5 12 L4 9.5 L3 12.5 L1 12.5Z" fill="#2e4464"/><path d="M0.5 11.5 L7.5 11.5 L7.5 14 L0.5 14Z" fill="#3a8aa0" opacity="0.8"/></g></svg></g><g transform="translate(981.50 553.8)"><svg width="35.25" height="20.9" viewBox="0 0 35.25 20.9" overflow="hidden"><rect width="36" height="20.9" fill="#a6a8b0"/><rect width="36" height="4.6" fill="#e9eaec"/><ellipse cx="26.0" cy="5.8" rx="9" ry="3.6" fill="#6c665a"/><ellipse cx="3.5" cy="6" rx="5" ry="3" fill="#6f6a60"/><ellipse cx="18.0" cy="6.6" rx="4" ry="3" fill="#8a7f7a"/><path d="M0 9 L36 8 L36 12 L0 13Z" fill="#b4b6bc" opacity="0.7"/><path d="M14 15 L30 20.9 L22 20.9 L12 17Z" fill="#d6d9e0" opacity="0.8"/><g transform="translate(13.2 5.1) scale(1.07)"><path d="M1 0 C3 -1.6 6 -1.6 7.5 0.5 L9 6 L7 7 L6.5 4.5 L6 8 L1.5 8 L1 4.5 L-0.5 7 L-2 6.2Z" fill="#2c6fa4"/><path d="M1.5 8 L6 8 L7 12 L5 12 L4 9.5 L3 12.5 L1 12.5Z" fill="#2e4464"/><path d="M0.5 11.5 L7.5 11.5 L7.5 14 L0.5 14Z" fill="#3a8aa0" opacity="0.8"/></g></svg></g><g transform="translate(1016.75 553.8)"><svg width="35.25" height="20.9" viewBox="0 0 35.25 20.9" overflow="hidden"><rect width="36" height="20.9" fill="#a3a5ae"/><rect width="36" height="4.6" fill="#e9eaec"/><ellipse cx="25.5" cy="5.8" rx="9" ry="3.6" fill="#6c665a"/><ellipse cx="3.2" cy="6" rx="5" ry="3" fill="#6f6a60"/><ellipse cx="17.5" cy="6.6" rx="4" ry="3" fill="#8a7f7a"/><path d="M0 9 L36 8 L36 12 L0 13Z" fill="#b4b6bc" opacity="0.7"/><path d="M14 15 L30 20.9 L22 20.9 L12 17Z" fill="#d6d9e0" opacity="0.8"/><g transform="translate(13.9 4.9) scale(1.11)"><path d="M1 0 C3 -1.6 6 -1.6 7.5 0.5 L9 6 L7 7 L6.5 4.5 L6 8 L1.5 8 L1 4.5 L-0.5 7 L-2 6.2Z" fill="#2c6fa4"/><path d="M1.5 8 L6 8 L7 12 L5 12 L4 9.5 L3 12.5 L1 12.5Z" fill="#2e4464"/><path d="M0.5 11.5 L7.5 11.5 L7.5 14 L0.5 14Z" fill="#3a8aa0" opacity="0.8"/></g></svg></g><g transform="translate(1052.00 553.8)"><svg width="35.25" height="20.9" viewBox="0 0 35.25 20.9" overflow="hidden"><rect width="36" height="20.9" fill="#a0a2ac"/><rect width="36" height="4.6" fill="#e9eaec"/><ellipse cx="25.0" cy="5.8" rx="9" ry="3.6" fill="#6c665a"/><ellipse cx="3.0" cy="6" rx="5" ry="3" fill="#6f6a60"/><ellipse cx="17.0" cy="6.6" rx="4" ry="3" fill="#8a7f7a"/><path d="M0 9 L36 8 L36 12 L0 13Z" fill="#b4b6bc" opacity="0.7"/><path d="M14 15 L30 20.9 L22 20.9 L12 17Z" fill="#d6d9e0" opacity="0.8"/><g transform="translate(14.5 4.8) scale(1.15)"><path d="M1 0 C3 -1.6 6 -1.6 7.5 0.5 L9 6 L7 7 L6.5 4.5 L6 8 L1.5 8 L1 4.5 L-0.5 7 L-2 6.2Z" fill="#2c6fa4"/><path d="M1.5 8 L6 8 L7 12 L5 12 L4 9.5 L3 12.5 L1 12.5Z" fill="#2e4464"/><path d="M0.5 11.5 L7.5 11.5 L7.5 14 L0.5 14Z" fill="#3a8aa0" opacity="0.8"/></g></svg></g><g transform="translate(1087.25 553.8)"><svg width="35.25" height="20.9" viewBox="0 0 35.25 20.9" overflow="hidden"><rect width="36" height="20.9" fill="#9ea0aa"/><rect width="36" height="4.6" fill="#e9eaec"/><ellipse cx="24.5" cy="5.8" rx="9" ry="3.6" fill="#6c665a"/><ellipse cx="2.8" cy="6" rx="5" ry="3" fill="#6f6a60"/><ellipse cx="16.5" cy="6.6" rx="4" ry="3" fill="#8a7f7a"/><path d="M0 9 L36 8 L36 12 L0 13Z" fill="#b4b6bc" opacity="0.7"/><path d="M14 15 L30 20.9 L22 20.9 L12 17Z" fill="#d6d9e0" opacity="0.8"/><g transform="translate(15.1 4.6) scale(1.19)"><path d="M1 0 C3 -1.6 6 -1.6 7.5 0.5 L9 6 L7 7 L6.5 4.5 L6 8 L1.5 8 L1 4.5 L-0.5 7 L-2 6.2Z" fill="#2c6fa4"/><path d="M1.5 8 L6 8 L7 12 L5 12 L4 9.5 L3 12.5 L1 12.5Z" fill="#2e4464"/><path d="M0.5 11.5 L7.5 11.5 L7.5 14 L0.5 14Z" fill="#3a8aa0" opacity="0.8"/></g></svg></g><g transform="translate(1122.50 553.8)"><svg width="35.25" height="20.9" viewBox="0 0 35.25 20.9" overflow="hidden"><rect width="36" height="20.9" fill="#9b9da8"/><rect width="36" height="4.6" fill="#e9eaec"/><ellipse cx="24.0" cy="5.8" rx="9" ry="3.6" fill="#6c665a"/><ellipse cx="2.5" cy="6" rx="5" ry="3" fill="#6f6a60"/><ellipse cx="16.0" cy="6.6" rx="4" ry="3" fill="#8a7f7a"/><path d="M0 9 L36 8 L36 12 L0 13Z" fill="#b4b6bc" opacity="0.7"/><path d="M14 15 L30 20.9 L22 20.9 L12 17Z" fill="#d6d9e0" opacity="0.8"/><g transform="translate(15.8 4.4) scale(1.23)"><path d="M1 0 C3 -1.6 6 -1.6 7.5 0.5 L9 6 L7 7 L6.5 4.5 L6 8 L1.5 8 L1 4.5 L-0.5 7 L-2 6.2Z" fill="#2c6fa4"/><path d="M1.5 8 L6 8 L7 12 L5 12 L4 9.5 L3 12.5 L1 12.5Z" fill="#2e4464"/><path d="M0.5 11.5 L7.5 11.5 L7.5 14 L0.5 14Z" fill="#3a8aa0" opacity="0.8"/></g></svg></g><g transform="translate(1157.75 553.8)"><svg width="35.25" height="20.9" viewBox="0 0 35.25 20.9" overflow="hidden"><rect width="36" height="20.9" fill="#999ba6"/><rect width="36" height="4.6" fill="#e9eaec"/><ellipse cx="23.5" cy="5.8" rx="9" ry="3.6" fill="#6c665a"/><ellipse cx="2.2" cy="6" rx="5" ry="3" fill="#6f6a60"/><ellipse cx="15.5" cy="6.6" rx="4" ry="3" fill="#8a7f7a"/><path d="M0 9 L36 8 L36 12 L0 13Z" fill="#b4b6bc" opacity="0.7"/><path d="M14 15 L30 20.9 L22 20.9 L12 17Z" fill="#d6d9e0" opacity="0.8"/><g transform="translate(16.4 4.2) scale(1.26)"><path d="M1 0 C3 -1.6 6 -1.6 7.5 0.5 L9 6 L7 7 L6.5 4.5 L6 8 L1.5 8 L1 4.5 L-0.5 7 L-2 6.2Z" fill="#2c6fa4"/><path d="M1.5 8 L6 8 L7 12 L5 12 L4 9.5 L3 12.5 L1 12.5Z" fill="#2e4464"/><path d="M0.5 11.5 L7.5 11.5 L7.5 14 L0.5 14Z" fill="#3a8aa0" opacity="0.8"/></g></svg></g><g transform="translate(1193.00 553.8)"><svg width="35.25" height="20.9" viewBox="0 0 35.25 20.9" overflow="hidden"><rect width="36" height="20.9" fill="#9698a4"/><rect width="36" height="4.6" fill="#e9eaec"/><ellipse cx="23.0" cy="5.8" rx="9" ry="3.6" fill="#6c665a"/><ellipse cx="2.0" cy="6" rx="5" ry="3" fill="#6f6a60"/><ellipse cx="15.0" cy="6.6" rx="4" ry="3" fill="#8a7f7a"/><path d="M0 9 L36 8 L36 12 L0 13Z" fill="#b4b6bc" opacity="0.7"/><path d="M14 15 L30 20.9 L22 20.9 L12 17Z" fill="#d6d9e0" opacity="0.8"/><g transform="translate(17.0 4.0) scale(1.30)"><path d="M1 0 C3 -1.6 6 -1.6 7.5 0.5 L9 6 L7 7 L6.5 4.5 L6 8 L1.5 8 L1 4.5 L-0.5 7 L-2 6.2Z" fill="#2c6fa4"/><path d="M1.5 8 L6 8 L7 12 L5 12 L4 9.5 L3 12.5 L1 12.5Z" fill="#2e4464"/><path d="M0.5 11.5 L7.5 11.5 L7.5 14 L0.5 14Z" fill="#3a8aa0" opacity="0.8"/></g></svg></g></g></g></svg><div class="a" style="left:65px;top:574px;width:1128px;height:18px;background:#2e3959;"></div><div class="a" style="left:65px;top:583px;width:1128px;height:1.3px;background:#8c95bb;"></div><div class="a" style="left:66px;top:558px;width:9.6px;height:9.4px;background:#f4f5f7;border-radius:1px"></div><svg style="left:68.5px;top:559.8px" width="5" height="6" viewBox="0 0 5 6"><path d="M0 0 V6 L5 3Z" fill="#3a3a2a"/></svg><div class="a" style="left:66px;top:569.6px;width:9.6px;height:9.6px;background:#7d8fe6;border-radius:1px"></div><svg style="left:67.8px;top:571.4px" width="6" height="6" viewBox="0 0 6 6"><circle cx="3" cy="3" r="2.2" fill="none" stroke="#dfe5ff" stroke-width="1.1"/></svg><span class="t" style="left:78.00px;top:556.00px;font-size:6.8px;color:#ffffff;letter-spacing:-0.062px;text-shadow:0 0 1.5px #222,0 0 1px #222;">wondershare-1c9853fb-b054-41b1-8b5f-55c0cb171039</span><svg style="left:62px;top:382px" width="7" height="12" viewBox="0 0 7 12"><path d="M0 0 H6 V6 L1 11.5 H0Z" fill="#f0705e"/></svg><div class="a" style="left:62px;top:382px;width:1px;height:331px;background:#c7605a;"></div>
<div class="a" style="left:0px;top:713.6px;width:1200px;height:9px;background:#0e141b;"></div><div class="a" style="left:600px;top:713.6px;width:600px;height:9px;background:#0b1a27;"></div><div class="a" style="left:62px;top:712.8px;width:1138px;height:0.9px;background:#596069;"></div><div class="a" style="left:600px;top:712.6px;width:100px;height:1.2px;background:#9aa0a8;"></div><div class="a" style="left:38px;top:714px;width:33px;height:9px;background:#b4622b;"></div><div class="a" style="left:105px;top:714px;width:33px;height:9px;background:#3d4349;"></div><div class="a" style="left:16px;top:720px;width:8px;height:6px;background:#d9534f;border-radius:50%"></div><div class="a" style="left:52px;top:720.4px;width:5px;height:6px;background:#e9a06c;border-radius:50%"></div><div class="a" style="left:82px;top:720.6px;width:8px;height:4px;background:#3c4a5c;"></div><div class="a" style="left:117px;top:720.6px;width:8px;height:4px;background:#4a6a8a;"></div><div class="a" style="left:152px;top:720px;width:9px;height:4px;background:#3d8fd6;"></div><div class="a" style="left:187px;top:720px;width:7px;height:6px;background:#e07a2a;border-radius:50%"></div>
<div class="a" style="left:1198.6px;top:4px;width:1.4px;height:709px;background:#0d1219"></div>
</body></html>
